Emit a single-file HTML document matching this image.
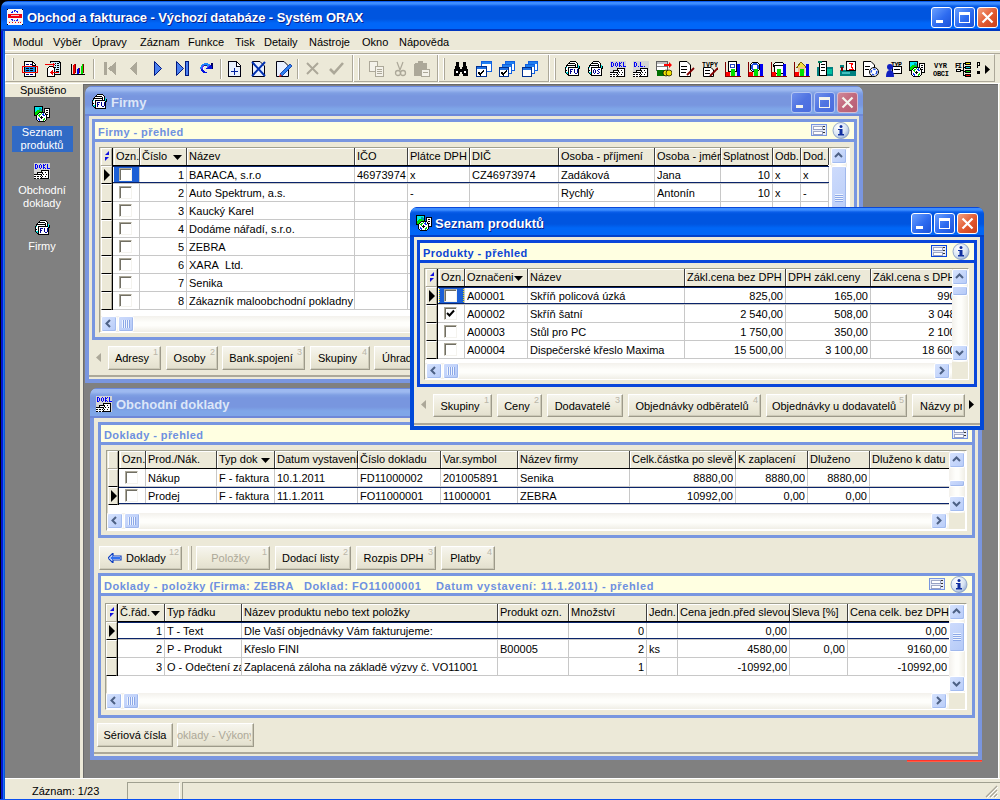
<!DOCTYPE html><html><head><meta charset="utf-8"><style>
*{margin:0;padding:0;box-sizing:border-box}
html,body{width:1000px;height:800px;overflow:hidden;background:#ECE9D8}
body{position:relative;font-family:"Liberation Sans",sans-serif;font-size:11px;color:#000}
div{position:absolute}
.t{white-space:nowrap;line-height:13px}
</style></head><body><div style="left:0px;top:0px;width:1000px;height:800px;background:#000"></div><div style="left:1px;top:1px;width:999px;height:30px;background:linear-gradient(#0C5CF0 0,#0C5CF0 1px,#3C8CFF 1px,#3C8CFF 3px,#0A5EEA 5px,#0055DF 7px,#0055DF 18px,#0066F8 22px,#0066F8 28px,#0036C0 28px);border-radius:7px 0 0 0;"></div><div style="left:1px;top:31px;width:4px;height:769px;background:linear-gradient(90deg,#0418D0 0,#0418D0 2px,#1870F0 2px,#1870F0 3px,#0858D8 3px)"></div><div style="left:5px;top:31px;width:995px;height:768px;background:#ECE9D8"></div><div style="left:0px;top:799px;width:1000px;height:1px;background:#0A50F0"></div><div class="t" style="left:27px;top:10px;color:#fff;font-weight:bold;font-size:13px;line-height:16px;letter-spacing:-0.08px;text-shadow:1px 1px 0 #0A1E8C">Obchod a fakturace - Výchozí databáze - Systém ORAX</div><svg style="position:absolute;left:7px;top:9px;" width="16" height="16" viewBox="0 0 16 16" shape-rendering="crispEdges"><rect x="0" y="0" width="16" height="16" fill="#F8F8F8"/><rect x="0" y="0" width="1" height="1" fill="#000"/><rect x="15" y="0" width="1" height="1" fill="#000"/><rect x="0" y="15" width="1" height="1" fill="#000"/><rect x="15" y="15" width="1" height="1" fill="#000"/><rect x="1" y="5" width="14" height="4" fill="#F00010"/><rect x="4" y="6" width="8" height="1" fill="#F8C8C8"/><path d="M4 4 Q8 0 12 4 M4 10 Q8 14 12 10" stroke="#1020F0" stroke-width="1.2" fill="none" stroke-dasharray="2 1"/><rect x="1" y="12" width="14" height="1" fill="#E8E8E8"/><rect x="2" y="13" width="1" height="1" fill="#F00"/><rect x="5" y="13" width="1" height="1" fill="#F00"/><rect x="8" y="13" width="1" height="1" fill="#F00"/><rect x="11" y="13" width="1" height="1" fill="#F00"/><rect x="13" y="13" width="1" height="1" fill="#F00"/></svg><div style="left:977px;top:7px;width:21px;height:21px;background:linear-gradient(135deg,#F4A080,#E2582E 55%,#C8401C);border:1px solid #fff;border-radius:3px"><svg style="position:absolute;left:0;top:0" width="19" height="19"><path d="M4.5 4.5 L14.5 14.5 M14.5 4.5 L4.5 14.5" stroke="#fff" stroke-width="2.2"/></svg></div><div style="left:954px;top:7px;width:21px;height:21px;background:linear-gradient(135deg,#6AA0FF,#2D6BF0 55%,#1C52D8);border:1px solid #fff;border-radius:3px"><div style="left:4px;top:4px;width:11px;height:11px;border:1px solid #fff;border-top-width:3px"></div></div><div style="left:931px;top:7px;width:21px;height:21px;background:linear-gradient(135deg,#6AA0FF,#2D6BF0 55%,#1C52D8);border:1px solid #fff;border-radius:3px"><div style="left:4px;top:12px;width:7px;height:3px;background:#fff"></div></div><div class="t" style="left:13px;top:36px;">Modul</div><div class="t" style="left:53px;top:36px;">Výběr</div><div class="t" style="left:92px;top:36px;">Úpravy</div><div class="t" style="left:140px;top:36px;">Záznam</div><div class="t" style="left:188px;top:36px;">Funkce</div><div class="t" style="left:235px;top:36px;">Tisk</div><div class="t" style="left:264px;top:36px;">Detaily</div><div class="t" style="left:309px;top:36px;">Nástroje</div><div class="t" style="left:362px;top:36px;">Okno</div><div class="t" style="left:399px;top:36px;">Nápověda</div><div style="left:5px;top:50px;width:995px;height:1px;background:#FFFFFF"></div><div style="left:5px;top:53px;width:995px;height:1px;background:#ACA899"></div><div style="left:5px;top:54px;width:990px;height:28px;background:#ECE9D8;border-top:1px solid #fff;border-left:1px solid #fff;border-bottom:1px solid #ACA899;border-right:1px solid #ACA899"></div><div style="left:5px;top:83px;width:995px;height:1px;background:#fff"></div><div class="t" style="left:20px;top:84px;">Spuštěno</div><div style="left:5px;top:97px;width:75px;height:681px;background:#808080"></div><div style="left:83px;top:84px;width:915px;height:694px;background:#808080;border-left:1px solid #6A6A6A;border-top:1px solid #6A6A6A;"></div><div style="left:998px;top:84px;width:2px;height:694px;background:#ECE9D8;box-shadow:inset 1px 0 0 #fff"></div><div style="left:5px;top:778px;width:995px;height:1px;background:#fff"></div><div class="t" style="left:32px;top:785px;">Záznam: 1/23</div><div style="left:127px;top:782px;width:53px;height:17px;border-left:1px solid #A0A090;border-top:1px solid #A0A090;border-right:1px solid #fff"></div><div style="left:182px;top:782px;width:818px;height:17px;border-left:1px solid #A0A090;border-top:1px solid #A0A090"></div><div style="left:85px;top:86px;width:778px;height:297px;overflow:hidden;border-radius:7px 7px 0 0"><div style="left:0px;top:0px;width:778px;height:297px;background:#7A96DF;border-radius:7px 7px 0 0;"></div><div style="left:0px;top:0px;width:778px;height:30px;background:linear-gradient(#6A88DE 0,#6A88DE 1px,#9DB9F0 1px,#9DB9F0 4px,#7F9FE3 7px,#7896DF 10px,#7896DF 19px,#7FA6E8 23px,#7FA6E8 28px,#6E88D8 28px);border-radius:7px 7px 0 0;"></div><div style="left:4px;top:30px;width:770px;height:263px;background:#ECE9D8"></div><div class="t" style="left:26px;top:9px;color:#DCE6F8;font-weight:bold;font-size:13px;line-height:16px;">Firmy</div><svg style="position:absolute;left:6px;top:8px;" width="16" height="16" viewBox="0 0 16 16" shape-rendering="crispEdges"><rect x="6" y="0" width="6" height="1" fill="#000"/><rect x="5" y="1" width="1" height="1" fill="#000"/><rect x="6" y="1" width="6" height="1" fill="#fff"/><rect x="12" y="1" width="1" height="1" fill="#000"/><rect x="4" y="2" width="7" height="1" fill="#000"/><rect x="11" y="2" width="2" height="1" fill="#fff"/><rect x="13" y="2" width="1" height="1" fill="#000"/><rect x="3" y="3" width="1" height="1" fill="#000"/><rect x="4" y="3" width="7" height="1" fill="#fff"/><rect x="11" y="3" width="1" height="1" fill="#000"/><rect x="12" y="3" width="1" height="1" fill="#fff"/><rect x="13" y="3" width="1" height="1" fill="#000"/><rect x="2" y="4" width="10" height="1" fill="#000"/><rect x="12" y="4" width="1" height="1" fill="#fff"/><rect x="13" y="4" width="1" height="1" fill="#000"/><rect x="14" y="4" width="1" height="1" fill="#00E8E8"/><rect x="2" y="5" width="1" height="1" fill="#000"/><rect x="3" y="5" width="8" height="1" fill="#fff"/><rect x="11" y="5" width="1" height="1" fill="#000"/><rect x="12" y="5" width="1" height="1" fill="#fff"/><rect x="13" y="5" width="1" height="1" fill="#000"/><rect x="14" y="5" width="1" height="1" fill="#00E8E8"/><rect x="15" y="5" width="1" height="1" fill="#000"/><rect x="1" y="6" width="1" height="1" fill="#000"/><rect x="2" y="6" width="1" height="1" fill="#00E8E8"/><rect x="3" y="6" width="1" height="1" fill="#fff"/><rect x="4" y="6" width="10" height="1" fill="#000"/><rect x="14" y="6" width="1" height="1" fill="#00E8E8"/><rect x="15" y="6" width="1" height="1" fill="#000"/><rect x="1" y="7" width="1" height="1" fill="#000"/><rect x="2" y="7" width="2" height="1" fill="#fff"/><rect x="4" y="7" width="1" height="1" fill="#000"/><rect x="5" y="7" width="9" height="1" fill="#fff"/><rect x="14" y="7" width="2" height="1" fill="#000"/><rect x="1" y="8" width="1" height="1" fill="#000"/><rect x="2" y="8" width="2" height="1" fill="#fff"/><rect x="4" y="8" width="1" height="1" fill="#000"/><rect x="5" y="8" width="1" height="1" fill="#fff"/><rect x="6" y="8" width="3" height="1" fill="#000090"/><rect x="9" y="8" width="1" height="1" fill="#fff"/><rect x="10" y="8" width="1" height="1" fill="#000090"/><rect x="11" y="8" width="2" height="1" fill="#fff"/><rect x="13" y="8" width="1" height="1" fill="#000090"/><rect x="14" y="8" width="1" height="1" fill="#000"/><rect x="1" y="9" width="2" height="1" fill="#000"/><rect x="3" y="9" width="1" height="1" fill="#fff"/><rect x="4" y="9" width="1" height="1" fill="#000"/><rect x="5" y="9" width="1" height="1" fill="#fff"/><rect x="6" y="9" width="1" height="1" fill="#000090"/><rect x="7" y="9" width="3" height="1" fill="#fff"/><rect x="10" y="9" width="1" height="1" fill="#000090"/><rect x="11" y="9" width="2" height="1" fill="#fff"/><rect x="13" y="9" width="1" height="1" fill="#000090"/><rect x="14" y="9" width="1" height="1" fill="#000"/><rect x="1" y="10" width="1" height="1" fill="#000"/><rect x="2" y="10" width="2" height="1" fill="#fff"/><rect x="4" y="10" width="1" height="1" fill="#000"/><rect x="5" y="10" width="1" height="1" fill="#fff"/><rect x="6" y="10" width="2" height="1" fill="#000090"/><rect x="8" y="10" width="2" height="1" fill="#fff"/><rect x="10" y="10" width="1" height="1" fill="#000090"/><rect x="11" y="10" width="2" height="1" fill="#fff"/><rect x="13" y="10" width="1" height="1" fill="#000090"/><rect x="14" y="10" width="1" height="1" fill="#000"/><rect x="1" y="11" width="1" height="1" fill="#000"/><rect x="2" y="11" width="2" height="1" fill="#00E8E8"/><rect x="4" y="11" width="1" height="1" fill="#000"/><rect x="5" y="11" width="1" height="1" fill="#fff"/><rect x="6" y="11" width="1" height="1" fill="#000090"/><rect x="7" y="11" width="3" height="1" fill="#fff"/><rect x="10" y="11" width="1" height="1" fill="#000090"/><rect x="11" y="11" width="2" height="1" fill="#fff"/><rect x="13" y="11" width="1" height="1" fill="#000090"/><rect x="14" y="11" width="1" height="1" fill="#000"/><rect x="2" y="12" width="1" height="1" fill="#000"/><rect x="3" y="12" width="1" height="1" fill="#00E8E8"/><rect x="4" y="12" width="1" height="1" fill="#000"/><rect x="5" y="12" width="1" height="1" fill="#fff"/><rect x="6" y="12" width="1" height="1" fill="#000090"/><rect x="7" y="12" width="4" height="1" fill="#fff"/><rect x="11" y="12" width="2" height="1" fill="#000090"/><rect x="13" y="12" width="1" height="1" fill="#fff"/><rect x="14" y="12" width="1" height="1" fill="#000"/><rect x="3" y="13" width="2" height="1" fill="#000"/><rect x="5" y="13" width="9" height="1" fill="#fff"/><rect x="14" y="13" width="1" height="1" fill="#000"/><rect x="4" y="14" width="11" height="1" fill="#000"/></svg><div style="left:706px;top:6px;width:21px;height:21px;background:linear-gradient(135deg,#7090EC,#5074E2 50%,#4A6CDE);border:1px solid #B4C6F2;border-radius:3px"><div style="left:4px;top:12px;width:7px;height:3px;background:#F4F4EC"></div></div><div style="left:729px;top:6px;width:21px;height:21px;background:linear-gradient(135deg,#7090EC,#5074E2 50%,#4A6CDE);border:1px solid #B4C6F2;border-radius:3px"><div style="left:4px;top:4px;width:11px;height:11px;border:1px solid #F4F4EC;border-top-width:3px"></div></div><div style="left:752px;top:6px;width:21px;height:21px;background:linear-gradient(135deg,#D08898,#C2687C 50%,#B45E74);border:1px solid #D8BCD0;border-radius:3px"><svg style="position:absolute;left:0;top:0" width="19" height="19"><path d="M4.5 4.5 L14.5 14.5 M14.5 4.5 L4.5 14.5" stroke="#F4F4EC" stroke-width="2.2"/></svg></div><div style="left:7px;top:33px;width:765px;height:221px;border:3px solid #7896E0;background:#ECE9D8"></div><div style="left:10px;top:36px;width:759px;height:17px;background:#FFFFE1"></div><div style="left:10px;top:53px;width:759px;height:3px;background:#7896E0"></div><div class="t" style="left:13px;top:39px;color:#6E90E0;font-weight:bold;font-size:11px;letter-spacing:0.42px;line-height:14px;">Firmy - přehled</div><svg style="position:absolute;left:726px;top:38px;" width="16" height="12" viewBox="0 0 16 12" shape-rendering="crispEdges"><rect x="0.5" y="0.5" width="15" height="11" fill="#E8ECF8" stroke="#7896E0"/><rect x="2" y="2" width="9" height="3" fill="#fff" stroke="#6070A0" stroke-width="0.6"/><rect x="2" y="7" width="9" height="3" fill="#fff" stroke="#6070A0" stroke-width="0.6"/><rect x="12" y="2" width="2" height="1" fill="#333"/><rect x="12" y="5" width="2" height="1" fill="#333"/><rect x="12" y="8" width="2" height="1" fill="#333"/></svg><svg style="position:absolute;left:747px;top:36px;shape-rendering:auto" width="18" height="17" viewBox="0 0 18 17" shape-rendering="crispEdges"><defs><radialGradient id="ig" cx="0.35" cy="0.3" r="0.8"><stop offset="0" stop-color="#fff"/><stop offset="0.6" stop-color="#D8E4F4"/><stop offset="1" stop-color="#90A8D0"/></radialGradient></defs><circle cx="9" cy="8.5" r="8" fill="url(#ig)" stroke="#8098C0" stroke-width="0.8"/><rect x="7.5" y="7" width="3" height="6" fill="#1030A0"/><rect x="6" y="12" width="6" height="1.5" fill="#1030A0"/><rect x="6" y="7" width="2" height="1" fill="#1030A0"/><circle cx="9" cy="4.5" r="1.5" fill="#1030A0"/></svg><div style="left:14px;top:61px;width:751px;height:186px;background:#fff;border:1px solid;border-color:#A0A090 #FFFFFF #FFFFFF #A0A090;"></div><div style="left:15px;top:62px;width:749px;height:184px;overflow:hidden"><div style="left:0px;top:0px;width:749px;height:184px;background:#fff;border-left:1px solid #D8D4C4;"></div><div style="left:0px;top:0px;width:728px;height:17px;background:#ECE9D8"></div><div style="left:1px;top:0px;width:11px;height:17px;background:#ECE9D8;border-left:1px solid #fff;border-top:1px solid #fff;border-right:1px solid #ACA899"></div><svg style="position:absolute;left:4px;top:3px" width="6" height="11"><path d="M5 0 L1 4 L5 4 Z M1 6 L5 6 L1 10 Z" fill="#1010E0"/></svg><div style="left:12px;top:0px;width:1px;height:17px;background:#000"></div><div style="left:14px;top:0px;width:26px;height:17px;background:#ECE9D8;border-left:1px solid #fff;border-top:1px solid #fff;border-right:1px solid #ACA899"></div><div style="left:39px;top:0px;width:1px;height:17px;background:#404040"></div><div class="t" style="left:16px;top:2px;width:24px;overflow:hidden">Ozn.</div><div style="left:40px;top:0px;width:47px;height:17px;background:#ECE9D8;border-left:1px solid #fff;border-top:1px solid #fff;border-right:1px solid #ACA899"></div><div style="left:86px;top:0px;width:1px;height:17px;background:#404040"></div><div class="t" style="left:42px;top:2px;width:45px;overflow:hidden">Číslo</div><svg style="position:absolute;left:73px;top:7px" width="9" height="5"><path d="M0 0 H9 L4.5 5 Z" fill="#000"/></svg><div style="left:87px;top:0px;width:168px;height:17px;background:#ECE9D8;border-left:1px solid #fff;border-top:1px solid #fff;border-right:1px solid #ACA899"></div><div style="left:254px;top:0px;width:1px;height:17px;background:#404040"></div><div class="t" style="left:89px;top:2px;width:166px;overflow:hidden">Název</div><div style="left:255px;top:0px;width:53px;height:17px;background:#ECE9D8;border-left:1px solid #fff;border-top:1px solid #fff;border-right:1px solid #ACA899"></div><div style="left:307px;top:0px;width:1px;height:17px;background:#404040"></div><div class="t" style="left:257px;top:2px;width:51px;overflow:hidden">IČO</div><div style="left:308px;top:0px;width:62px;height:17px;background:#ECE9D8;border-left:1px solid #fff;border-top:1px solid #fff;border-right:1px solid #ACA899"></div><div style="left:369px;top:0px;width:1px;height:17px;background:#404040"></div><div class="t" style="left:310px;top:2px;width:60px;overflow:hidden">Plátce DPH</div><div style="left:370px;top:0px;width:89px;height:17px;background:#ECE9D8;border-left:1px solid #fff;border-top:1px solid #fff;border-right:1px solid #ACA899"></div><div style="left:458px;top:0px;width:1px;height:17px;background:#404040"></div><div class="t" style="left:372px;top:2px;width:87px;overflow:hidden">DIČ</div><div style="left:459px;top:0px;width:96px;height:17px;background:#ECE9D8;border-left:1px solid #fff;border-top:1px solid #fff;border-right:1px solid #ACA899"></div><div style="left:554px;top:0px;width:1px;height:17px;background:#404040"></div><div class="t" style="left:461px;top:2px;width:94px;overflow:hidden">Osoba - příjmení</div><div style="left:555px;top:0px;width:66px;height:17px;background:#ECE9D8;border-left:1px solid #fff;border-top:1px solid #fff;border-right:1px solid #ACA899"></div><div style="left:620px;top:0px;width:1px;height:17px;background:#404040"></div><div class="t" style="left:557px;top:2px;width:64px;overflow:hidden">Osoba - jméno</div><div style="left:621px;top:0px;width:52px;height:17px;background:#ECE9D8;border-left:1px solid #fff;border-top:1px solid #fff;border-right:1px solid #ACA899"></div><div style="left:672px;top:0px;width:1px;height:17px;background:#404040"></div><div class="t" style="left:623px;top:2px;width:50px;overflow:hidden">Splatnost</div><div style="left:673px;top:0px;width:28px;height:17px;background:#ECE9D8;border-left:1px solid #fff;border-top:1px solid #fff;border-right:1px solid #ACA899"></div><div style="left:700px;top:0px;width:1px;height:17px;background:#404040"></div><div class="t" style="left:675px;top:2px;width:26px;overflow:hidden">Odb.</div><div style="left:701px;top:0px;width:28px;height:17px;background:#ECE9D8;border-left:1px solid #fff;border-top:1px solid #fff;border-right:1px solid #ACA899"></div><div style="left:728px;top:0px;width:1px;height:17px;background:#404040"></div><div class="t" style="left:703px;top:2px;width:26px;overflow:hidden">Dod.</div><div style="left:12px;top:17px;width:716px;height:1px;background:#000"></div><div style="left:1px;top:17px;width:11px;height:1px;background:#ACA899"></div><div style="left:1px;top:18px;width:11px;height:18px;background:#ECE9D8;border-left:1px solid #fff;border-top:1px solid #fff;border-right:1px solid #ACA899;border-bottom:1px solid #000"></div><svg style="position:absolute;left:4px;top:21px" width="7" height="12"><path d="M0 0 L6 6 L0 12 Z" fill="#000"/></svg><div style="left:39px;top:18px;width:1px;height:18px;background:#C8C8C8"></div><div style="left:14px;top:18px;width:25px;height:17px;background:#1C5FD6"></div><div style="left:19px;top:20px;width:13px;height:13px;background:#fff;border:1px solid;border-color:#ACA899 #F4F3EE #F4F3EE #ACA899;box-shadow:inset 1px 1px 0 #716F64"></div><div style="left:86px;top:18px;width:1px;height:18px;background:#C8C8C8"></div><div class="t" style="left:40px;top:21px;width:44px;text-align:right;overflow:hidden">1</div><div style="left:254px;top:18px;width:1px;height:18px;background:#C8C8C8"></div><div class="t" style="left:89px;top:21px;width:165px;overflow:hidden">BARACA, s.r.o</div><div style="left:307px;top:18px;width:1px;height:18px;background:#C8C8C8"></div><div class="t" style="left:257px;top:21px;width:50px;overflow:hidden">46973974</div><div style="left:369px;top:18px;width:1px;height:18px;background:#C8C8C8"></div><div class="t" style="left:310px;top:21px;width:59px;overflow:hidden">x</div><div style="left:458px;top:18px;width:1px;height:18px;background:#C8C8C8"></div><div class="t" style="left:372px;top:21px;width:86px;overflow:hidden">CZ46973974</div><div style="left:554px;top:18px;width:1px;height:18px;background:#C8C8C8"></div><div class="t" style="left:461px;top:21px;width:93px;overflow:hidden">Zadáková</div><div style="left:620px;top:18px;width:1px;height:18px;background:#C8C8C8"></div><div class="t" style="left:557px;top:21px;width:63px;overflow:hidden">Jana</div><div style="left:672px;top:18px;width:1px;height:18px;background:#C8C8C8"></div><div class="t" style="left:621px;top:21px;width:49px;text-align:right;overflow:hidden">10</div><div style="left:700px;top:18px;width:1px;height:18px;background:#C8C8C8"></div><div class="t" style="left:675px;top:21px;width:25px;overflow:hidden">x</div><div style="left:728px;top:18px;width:1px;height:18px;background:#C8C8C8"></div><div class="t" style="left:703px;top:21px;width:25px;overflow:hidden">x</div><div style="left:12px;top:18px;width:716px;height:0px;"></div><div style="left:13px;top:35px;width:716px;height:1px;background:#C8C8C8"></div><div style="left:12px;top:18px;width:1px;height:18px;background:#000"></div><div style="left:1px;top:36px;width:11px;height:18px;background:#ECE9D8;border-left:1px solid #fff;border-top:1px solid #fff;border-right:1px solid #ACA899;border-bottom:1px solid #000"></div><div style="left:39px;top:36px;width:1px;height:18px;background:#C8C8C8"></div><div style="left:19px;top:38px;width:13px;height:13px;background:#fff;border:1px solid;border-color:#ACA899 #F4F3EE #F4F3EE #ACA899;box-shadow:inset 1px 1px 0 #716F64"></div><div style="left:86px;top:36px;width:1px;height:18px;background:#C8C8C8"></div><div class="t" style="left:40px;top:39px;width:44px;text-align:right;overflow:hidden">2</div><div style="left:254px;top:36px;width:1px;height:18px;background:#C8C8C8"></div><div class="t" style="left:89px;top:39px;width:165px;overflow:hidden">Auto Spektrum, a.s.</div><div style="left:307px;top:36px;width:1px;height:18px;background:#C8C8C8"></div><div style="left:369px;top:36px;width:1px;height:18px;background:#C8C8C8"></div><div class="t" style="left:310px;top:39px;width:59px;overflow:hidden">-</div><div style="left:458px;top:36px;width:1px;height:18px;background:#C8C8C8"></div><div style="left:554px;top:36px;width:1px;height:18px;background:#C8C8C8"></div><div class="t" style="left:461px;top:39px;width:93px;overflow:hidden">Rychlý</div><div style="left:620px;top:36px;width:1px;height:18px;background:#C8C8C8"></div><div class="t" style="left:557px;top:39px;width:63px;overflow:hidden">Antonín</div><div style="left:672px;top:36px;width:1px;height:18px;background:#C8C8C8"></div><div class="t" style="left:621px;top:39px;width:49px;text-align:right;overflow:hidden">10</div><div style="left:700px;top:36px;width:1px;height:18px;background:#C8C8C8"></div><div class="t" style="left:675px;top:39px;width:25px;overflow:hidden">x</div><div style="left:728px;top:36px;width:1px;height:18px;background:#C8C8C8"></div><div class="t" style="left:703px;top:39px;width:25px;overflow:hidden">-</div><div style="left:12px;top:36px;width:716px;height:0px;"></div><div style="left:13px;top:53px;width:716px;height:1px;background:#C8C8C8"></div><div style="left:12px;top:36px;width:1px;height:18px;background:#000"></div><div style="left:1px;top:54px;width:11px;height:18px;background:#ECE9D8;border-left:1px solid #fff;border-top:1px solid #fff;border-right:1px solid #ACA899;border-bottom:1px solid #000"></div><div style="left:39px;top:54px;width:1px;height:18px;background:#C8C8C8"></div><div style="left:19px;top:56px;width:13px;height:13px;background:#fff;border:1px solid;border-color:#ACA899 #F4F3EE #F4F3EE #ACA899;box-shadow:inset 1px 1px 0 #716F64"></div><div style="left:86px;top:54px;width:1px;height:18px;background:#C8C8C8"></div><div class="t" style="left:40px;top:57px;width:44px;text-align:right;overflow:hidden">3</div><div style="left:254px;top:54px;width:1px;height:18px;background:#C8C8C8"></div><div class="t" style="left:89px;top:57px;width:165px;overflow:hidden">Kaucký Karel</div><div style="left:307px;top:54px;width:1px;height:18px;background:#C8C8C8"></div><div style="left:369px;top:54px;width:1px;height:18px;background:#C8C8C8"></div><div style="left:458px;top:54px;width:1px;height:18px;background:#C8C8C8"></div><div style="left:554px;top:54px;width:1px;height:18px;background:#C8C8C8"></div><div class="t" style="left:461px;top:57px;width:93px;overflow:hidden">Kaucký</div><div style="left:620px;top:54px;width:1px;height:18px;background:#C8C8C8"></div><div class="t" style="left:557px;top:57px;width:63px;overflow:hidden">Karel</div><div style="left:672px;top:54px;width:1px;height:18px;background:#C8C8C8"></div><div class="t" style="left:621px;top:57px;width:49px;text-align:right;overflow:hidden">10</div><div style="left:700px;top:54px;width:1px;height:18px;background:#C8C8C8"></div><div class="t" style="left:675px;top:57px;width:25px;overflow:hidden">x</div><div style="left:728px;top:54px;width:1px;height:18px;background:#C8C8C8"></div><div class="t" style="left:703px;top:57px;width:25px;overflow:hidden">x</div><div style="left:12px;top:54px;width:716px;height:0px;"></div><div style="left:13px;top:71px;width:716px;height:1px;background:#C8C8C8"></div><div style="left:12px;top:54px;width:1px;height:18px;background:#000"></div><div style="left:1px;top:72px;width:11px;height:18px;background:#ECE9D8;border-left:1px solid #fff;border-top:1px solid #fff;border-right:1px solid #ACA899;border-bottom:1px solid #000"></div><div style="left:39px;top:72px;width:1px;height:18px;background:#C8C8C8"></div><div style="left:19px;top:74px;width:13px;height:13px;background:#fff;border:1px solid;border-color:#ACA899 #F4F3EE #F4F3EE #ACA899;box-shadow:inset 1px 1px 0 #716F64"></div><div style="left:86px;top:72px;width:1px;height:18px;background:#C8C8C8"></div><div class="t" style="left:40px;top:75px;width:44px;text-align:right;overflow:hidden">4</div><div style="left:254px;top:72px;width:1px;height:18px;background:#C8C8C8"></div><div class="t" style="left:89px;top:75px;width:165px;overflow:hidden">Dodáme nářadí, s.r.o.</div><div style="left:307px;top:72px;width:1px;height:18px;background:#C8C8C8"></div><div style="left:369px;top:72px;width:1px;height:18px;background:#C8C8C8"></div><div style="left:458px;top:72px;width:1px;height:18px;background:#C8C8C8"></div><div style="left:554px;top:72px;width:1px;height:18px;background:#C8C8C8"></div><div style="left:620px;top:72px;width:1px;height:18px;background:#C8C8C8"></div><div style="left:672px;top:72px;width:1px;height:18px;background:#C8C8C8"></div><div class="t" style="left:621px;top:75px;width:49px;text-align:right;overflow:hidden">10</div><div style="left:700px;top:72px;width:1px;height:18px;background:#C8C8C8"></div><div style="left:728px;top:72px;width:1px;height:18px;background:#C8C8C8"></div><div style="left:12px;top:72px;width:716px;height:0px;"></div><div style="left:13px;top:89px;width:716px;height:1px;background:#C8C8C8"></div><div style="left:12px;top:72px;width:1px;height:18px;background:#000"></div><div style="left:1px;top:90px;width:11px;height:18px;background:#ECE9D8;border-left:1px solid #fff;border-top:1px solid #fff;border-right:1px solid #ACA899;border-bottom:1px solid #000"></div><div style="left:39px;top:90px;width:1px;height:18px;background:#C8C8C8"></div><div style="left:19px;top:92px;width:13px;height:13px;background:#fff;border:1px solid;border-color:#ACA899 #F4F3EE #F4F3EE #ACA899;box-shadow:inset 1px 1px 0 #716F64"></div><div style="left:86px;top:90px;width:1px;height:18px;background:#C8C8C8"></div><div class="t" style="left:40px;top:93px;width:44px;text-align:right;overflow:hidden">5</div><div style="left:254px;top:90px;width:1px;height:18px;background:#C8C8C8"></div><div class="t" style="left:89px;top:93px;width:165px;overflow:hidden">ZEBRA</div><div style="left:307px;top:90px;width:1px;height:18px;background:#C8C8C8"></div><div style="left:369px;top:90px;width:1px;height:18px;background:#C8C8C8"></div><div style="left:458px;top:90px;width:1px;height:18px;background:#C8C8C8"></div><div style="left:554px;top:90px;width:1px;height:18px;background:#C8C8C8"></div><div style="left:620px;top:90px;width:1px;height:18px;background:#C8C8C8"></div><div style="left:672px;top:90px;width:1px;height:18px;background:#C8C8C8"></div><div class="t" style="left:621px;top:93px;width:49px;text-align:right;overflow:hidden">10</div><div style="left:700px;top:90px;width:1px;height:18px;background:#C8C8C8"></div><div style="left:728px;top:90px;width:1px;height:18px;background:#C8C8C8"></div><div style="left:12px;top:90px;width:716px;height:0px;"></div><div style="left:13px;top:107px;width:716px;height:1px;background:#C8C8C8"></div><div style="left:12px;top:90px;width:1px;height:18px;background:#000"></div><div style="left:1px;top:108px;width:11px;height:18px;background:#ECE9D8;border-left:1px solid #fff;border-top:1px solid #fff;border-right:1px solid #ACA899;border-bottom:1px solid #000"></div><div style="left:39px;top:108px;width:1px;height:18px;background:#C8C8C8"></div><div style="left:19px;top:110px;width:13px;height:13px;background:#fff;border:1px solid;border-color:#ACA899 #F4F3EE #F4F3EE #ACA899;box-shadow:inset 1px 1px 0 #716F64"></div><div style="left:86px;top:108px;width:1px;height:18px;background:#C8C8C8"></div><div class="t" style="left:40px;top:111px;width:44px;text-align:right;overflow:hidden">6</div><div style="left:254px;top:108px;width:1px;height:18px;background:#C8C8C8"></div><div class="t" style="left:89px;top:111px;width:165px;overflow:hidden">XARA&nbsp; Ltd.</div><div style="left:307px;top:108px;width:1px;height:18px;background:#C8C8C8"></div><div style="left:369px;top:108px;width:1px;height:18px;background:#C8C8C8"></div><div style="left:458px;top:108px;width:1px;height:18px;background:#C8C8C8"></div><div style="left:554px;top:108px;width:1px;height:18px;background:#C8C8C8"></div><div style="left:620px;top:108px;width:1px;height:18px;background:#C8C8C8"></div><div style="left:672px;top:108px;width:1px;height:18px;background:#C8C8C8"></div><div class="t" style="left:621px;top:111px;width:49px;text-align:right;overflow:hidden">10</div><div style="left:700px;top:108px;width:1px;height:18px;background:#C8C8C8"></div><div style="left:728px;top:108px;width:1px;height:18px;background:#C8C8C8"></div><div style="left:12px;top:108px;width:716px;height:0px;"></div><div style="left:13px;top:125px;width:716px;height:1px;background:#C8C8C8"></div><div style="left:12px;top:108px;width:1px;height:18px;background:#000"></div><div style="left:1px;top:126px;width:11px;height:18px;background:#ECE9D8;border-left:1px solid #fff;border-top:1px solid #fff;border-right:1px solid #ACA899;border-bottom:1px solid #000"></div><div style="left:39px;top:126px;width:1px;height:18px;background:#C8C8C8"></div><div style="left:19px;top:128px;width:13px;height:13px;background:#fff;border:1px solid;border-color:#ACA899 #F4F3EE #F4F3EE #ACA899;box-shadow:inset 1px 1px 0 #716F64"></div><div style="left:86px;top:126px;width:1px;height:18px;background:#C8C8C8"></div><div class="t" style="left:40px;top:129px;width:44px;text-align:right;overflow:hidden">7</div><div style="left:254px;top:126px;width:1px;height:18px;background:#C8C8C8"></div><div class="t" style="left:89px;top:129px;width:165px;overflow:hidden">Senika</div><div style="left:307px;top:126px;width:1px;height:18px;background:#C8C8C8"></div><div style="left:369px;top:126px;width:1px;height:18px;background:#C8C8C8"></div><div style="left:458px;top:126px;width:1px;height:18px;background:#C8C8C8"></div><div style="left:554px;top:126px;width:1px;height:18px;background:#C8C8C8"></div><div style="left:620px;top:126px;width:1px;height:18px;background:#C8C8C8"></div><div style="left:672px;top:126px;width:1px;height:18px;background:#C8C8C8"></div><div class="t" style="left:621px;top:129px;width:49px;text-align:right;overflow:hidden">10</div><div style="left:700px;top:126px;width:1px;height:18px;background:#C8C8C8"></div><div style="left:728px;top:126px;width:1px;height:18px;background:#C8C8C8"></div><div style="left:12px;top:126px;width:716px;height:0px;"></div><div style="left:13px;top:143px;width:716px;height:1px;background:#C8C8C8"></div><div style="left:12px;top:126px;width:1px;height:18px;background:#000"></div><div style="left:1px;top:144px;width:11px;height:18px;background:#ECE9D8;border-left:1px solid #fff;border-top:1px solid #fff;border-right:1px solid #ACA899;border-bottom:1px solid #000"></div><div style="left:39px;top:144px;width:1px;height:18px;background:#C8C8C8"></div><div style="left:19px;top:146px;width:13px;height:13px;background:#fff;border:1px solid;border-color:#ACA899 #F4F3EE #F4F3EE #ACA899;box-shadow:inset 1px 1px 0 #716F64"></div><div style="left:86px;top:144px;width:1px;height:18px;background:#C8C8C8"></div><div class="t" style="left:40px;top:147px;width:44px;text-align:right;overflow:hidden">8</div><div style="left:254px;top:144px;width:1px;height:18px;background:#C8C8C8"></div><div class="t" style="left:89px;top:147px;width:165px;overflow:hidden">Zákazník maloobchodní pokladny</div><div style="left:307px;top:144px;width:1px;height:18px;background:#C8C8C8"></div><div style="left:369px;top:144px;width:1px;height:18px;background:#C8C8C8"></div><div style="left:458px;top:144px;width:1px;height:18px;background:#C8C8C8"></div><div style="left:554px;top:144px;width:1px;height:18px;background:#C8C8C8"></div><div style="left:620px;top:144px;width:1px;height:18px;background:#C8C8C8"></div><div style="left:672px;top:144px;width:1px;height:18px;background:#C8C8C8"></div><div class="t" style="left:621px;top:147px;width:49px;text-align:right;overflow:hidden">10</div><div style="left:700px;top:144px;width:1px;height:18px;background:#C8C8C8"></div><div style="left:728px;top:144px;width:1px;height:18px;background:#C8C8C8"></div><div style="left:12px;top:144px;width:716px;height:0px;"></div><div style="left:13px;top:161px;width:716px;height:1px;background:#C8C8C8"></div><div style="left:12px;top:144px;width:1px;height:18px;background:#000"></div><div style="left:13px;top:34px;width:716px;height:1px;background:#0A246A"></div><div style="left:13px;top:18px;width:716px;height:1px;background:#0A246A"></div></div><div style="left:744px;top:62px;width:2px;height:17px;background:#ECE9D8;border-left:1px solid #fff"></div><div style="left:746px;top:62px;width:16px;height:168px;background:linear-gradient(90deg,#F3F1EC,#FEFEFB 40%,#FEFEFB 60%,#F0EEE6)"></div><div style="left:746px;top:62px;width:16px;height:16px;background:linear-gradient(135deg,#D6E3FE,#B7CBF8);border:1px solid #FFFFFF;border-radius:2px;box-shadow:inset -1px -1px 0 #A3BCF0"></div><svg style="position:absolute;left:746px;top:62px" width="16" height="16"><path d="M4 9 L7.5 5.5 L11 9" stroke="#4D6185" stroke-width="2" fill="none"/></svg><div style="left:746px;top:80px;width:16px;height:64px;background:linear-gradient(135deg,#CDDBFC,#B4C9F7);border:1px solid #FFFFFF;border-radius:2px;box-shadow:inset -1px -1px 0 #A0B8EC"></div><div style="left:750px;top:108px;width:8px;height:1px;background:#EEF4FE;box-shadow:0 1px 0 #8CA8E8"></div><div style="left:750px;top:110px;width:8px;height:1px;background:#EEF4FE;box-shadow:0 1px 0 #8CA8E8"></div><div style="left:750px;top:112px;width:8px;height:1px;background:#EEF4FE;box-shadow:0 1px 0 #8CA8E8"></div><div style="left:750px;top:114px;width:8px;height:1px;background:#EEF4FE;box-shadow:0 1px 0 #8CA8E8"></div><div style="left:16px;top:230px;width:730px;height:16px;background:linear-gradient(#F3F1EC,#FEFEFB 40%,#FEFEFB 60%,#F0EEE6)"></div><div style="left:16px;top:230px;width:16px;height:16px;background:linear-gradient(135deg,#D6E3FE,#B7CBF8);border:1px solid #FFFFFF;border-radius:2px;box-shadow:inset -1px -1px 0 #A3BCF0"></div><svg style="position:absolute;left:16px;top:230px" width="16" height="16"><path d="M9 4 L5.5 7.5 L9 11" stroke="#4D6185" stroke-width="2" fill="none"/></svg><div style="left:33px;top:230px;width:16px;height:16px;background:linear-gradient(135deg,#CDDBFC,#B4C9F7);border:1px solid #FFFFFF;border-radius:2px;box-shadow:inset -1px -1px 0 #A0B8EC"></div><div style="left:37px;top:234px;width:1px;height:8px;background:#EEF4FE;box-shadow:1px 0 0 #8CA8E8"></div><div style="left:39px;top:234px;width:1px;height:8px;background:#EEF4FE;box-shadow:1px 0 0 #8CA8E8"></div><div style="left:41px;top:234px;width:1px;height:8px;background:#EEF4FE;box-shadow:1px 0 0 #8CA8E8"></div><div style="left:43px;top:234px;width:1px;height:8px;background:#EEF4FE;box-shadow:1px 0 0 #8CA8E8"></div><svg style="position:absolute;left:11px;top:267px;shape-rendering:auto" width="5" height="9" viewBox="0 0 5 9" shape-rendering="crispEdges"><path d="M5 0 L0 4.5 L5 9 Z" fill="#ACA899"/></svg><div style="left:23px;top:260px;width:53px;height:24px;background:linear-gradient(#F6F5EE,#ECE9D8 60%,#E2DFCE);border:1px solid;border-color:#FFFFFF #9D9A8A #9D9A8A #FFFFFF;box-shadow:inset -1px -1px 0 #CDCAB8"></div><div class="t" style="left:23px;top:266px;width:48px;text-align:center;color:#000">Adresy</div><div class="t" style="left:68px;top:261px;font-size:9px;line-height:11px;color:#BAB6A8">1</div><div style="left:81px;top:260px;width:52px;height:24px;background:linear-gradient(#F6F5EE,#ECE9D8 60%,#E2DFCE);border:1px solid;border-color:#FFFFFF #9D9A8A #9D9A8A #FFFFFF;box-shadow:inset -1px -1px 0 #CDCAB8"></div><div class="t" style="left:81px;top:266px;width:47px;text-align:center;color:#000">Osoby</div><div class="t" style="left:125px;top:261px;font-size:9px;line-height:11px;color:#BAB6A8">2</div><div style="left:137px;top:260px;width:83px;height:24px;background:linear-gradient(#F6F5EE,#ECE9D8 60%,#E2DFCE);border:1px solid;border-color:#FFFFFF #9D9A8A #9D9A8A #FFFFFF;box-shadow:inset -1px -1px 0 #CDCAB8"></div><div class="t" style="left:137px;top:266px;width:78px;text-align:center;color:#000">Bank.spojení</div><div class="t" style="left:212px;top:261px;font-size:9px;line-height:11px;color:#BAB6A8">3</div><div style="left:225px;top:260px;width:60px;height:24px;background:linear-gradient(#F6F5EE,#ECE9D8 60%,#E2DFCE);border:1px solid;border-color:#FFFFFF #9D9A8A #9D9A8A #FFFFFF;box-shadow:inset -1px -1px 0 #CDCAB8"></div><div class="t" style="left:225px;top:266px;width:55px;text-align:center;color:#000">Skupiny</div><div class="t" style="left:277px;top:261px;font-size:9px;line-height:11px;color:#BAB6A8">4</div><div style="left:289px;top:260px;width:60px;height:24px;background:linear-gradient(#F6F5EE,#ECE9D8 60%,#E2DFCE);border:1px solid;border-color:#FFFFFF #9D9A8A #9D9A8A #FFFFFF;box-shadow:inset -1px -1px 0 #CDCAB8"></div><div class="t" style="left:297px;top:266px;width:49px;overflow:hidden;color:#000">Úhrady</div><div class="t" style="left:341px;top:261px;font-size:9px;line-height:11px;color:#BAB6A8">5</div><div style="left:4px;top:289px;width:770px;height:2px;background:#ACA899"></div></div><div style="left:90px;top:388px;width:892px;height:372px;overflow:hidden;border-radius:7px 7px 0 0"><div style="left:0px;top:0px;width:892px;height:372px;background:#7A96DF;border-radius:7px 7px 0 0;"></div><div style="left:0px;top:0px;width:892px;height:30px;background:linear-gradient(#6A88DE 0,#6A88DE 1px,#9DB9F0 1px,#9DB9F0 4px,#7F9FE3 7px,#7896DF 10px,#7896DF 19px,#7FA6E8 23px,#7FA6E8 28px,#6E88D8 28px);border-radius:7px 7px 0 0;"></div><div style="left:4px;top:30px;width:884px;height:338px;background:#ECE9D8"></div><div class="t" style="left:26px;top:9px;color:#DCE6F8;font-weight:bold;font-size:13px;line-height:16px;">Obchodní doklady</div><svg style="position:absolute;left:6px;top:8px;" width="16" height="16" viewBox="0 0 16 16" shape-rendering="crispEdges"><rect x="0" y="0" width="16" height="1" fill="#D4D4D4"/><rect x="0" y="1" width="1" height="1" fill="#D4D4D4"/><rect x="1" y="1" width="2" height="1" fill="#0000F8"/><rect x="3" y="1" width="3" height="1" fill="#D4D4D4"/><rect x="6" y="1" width="1" height="1" fill="#0000F8"/><rect x="7" y="1" width="2" height="1" fill="#D4D4D4"/><rect x="9" y="1" width="1" height="1" fill="#0000F8"/><rect x="10" y="1" width="1" height="1" fill="#D4D4D4"/><rect x="11" y="1" width="1" height="1" fill="#0000F8"/><rect x="12" y="1" width="1" height="1" fill="#D4D4D4"/><rect x="13" y="1" width="1" height="1" fill="#0000F8"/><rect x="14" y="1" width="2" height="1" fill="#D4D4D4"/><rect x="0" y="2" width="1" height="1" fill="#D4D4D4"/><rect x="1" y="2" width="1" height="1" fill="#0000F8"/><rect x="2" y="2" width="1" height="1" fill="#D4D4D4"/><rect x="3" y="2" width="1" height="1" fill="#0000F8"/><rect x="4" y="2" width="1" height="1" fill="#D4D4D4"/><rect x="5" y="2" width="1" height="1" fill="#0000F8"/><rect x="6" y="2" width="1" height="1" fill="#D4D4D4"/><rect x="7" y="2" width="1" height="1" fill="#0000F8"/><rect x="8" y="2" width="1" height="1" fill="#D4D4D4"/><rect x="9" y="2" width="2" height="1" fill="#0000F8"/><rect x="11" y="2" width="2" height="1" fill="#D4D4D4"/><rect x="13" y="2" width="1" height="1" fill="#0000F8"/><rect x="14" y="2" width="2" height="1" fill="#D4D4D4"/><rect x="0" y="3" width="1" height="1" fill="#D4D4D4"/><rect x="1" y="3" width="1" height="1" fill="#0000F8"/><rect x="2" y="3" width="1" height="1" fill="#D4D4D4"/><rect x="3" y="3" width="1" height="1" fill="#0000F8"/><rect x="4" y="3" width="1" height="1" fill="#D4D4D4"/><rect x="5" y="3" width="1" height="1" fill="#0000F8"/><rect x="6" y="3" width="1" height="1" fill="#D4D4D4"/><rect x="7" y="3" width="1" height="1" fill="#0000F8"/><rect x="8" y="3" width="1" height="1" fill="#D4D4D4"/><rect x="9" y="3" width="1" height="1" fill="#0000F8"/><rect x="10" y="3" width="3" height="1" fill="#D4D4D4"/><rect x="13" y="3" width="1" height="1" fill="#0000F8"/><rect x="14" y="3" width="2" height="1" fill="#D4D4D4"/><rect x="0" y="4" width="1" height="1" fill="#D4D4D4"/><rect x="1" y="4" width="1" height="1" fill="#0000F8"/><rect x="2" y="4" width="1" height="1" fill="#D4D4D4"/><rect x="3" y="4" width="1" height="1" fill="#0000F8"/><rect x="4" y="4" width="1" height="1" fill="#D4D4D4"/><rect x="5" y="4" width="1" height="1" fill="#0000F8"/><rect x="6" y="4" width="1" height="1" fill="#D4D4D4"/><rect x="7" y="4" width="1" height="1" fill="#0000F8"/><rect x="8" y="4" width="1" height="1" fill="#D4D4D4"/><rect x="9" y="4" width="2" height="1" fill="#0000F8"/><rect x="11" y="4" width="2" height="1" fill="#D4D4D4"/><rect x="13" y="4" width="1" height="1" fill="#0000F8"/><rect x="14" y="4" width="2" height="1" fill="#D4D4D4"/><rect x="0" y="5" width="1" height="1" fill="#D4D4D4"/><rect x="1" y="5" width="2" height="1" fill="#0000F8"/><rect x="3" y="5" width="3" height="1" fill="#D4D4D4"/><rect x="6" y="5" width="1" height="1" fill="#0000F8"/><rect x="7" y="5" width="2" height="1" fill="#D4D4D4"/><rect x="9" y="5" width="1" height="1" fill="#0000F8"/><rect x="10" y="5" width="1" height="1" fill="#D4D4D4"/><rect x="11" y="5" width="1" height="1" fill="#0000F8"/><rect x="12" y="5" width="1" height="1" fill="#D4D4D4"/><rect x="13" y="5" width="3" height="1" fill="#0000F8"/><rect x="0" y="6" width="16" height="1" fill="#D4D4D4"/><rect x="0" y="7" width="7" height="1" fill="#D4D4D4"/><rect x="7" y="7" width="8" height="1" fill="#000"/><rect x="15" y="7" width="1" height="1" fill="#D4D4D4"/><rect x="0" y="8" width="7" height="1" fill="#D4D4D4"/><rect x="7" y="8" width="1" height="1" fill="#000"/><rect x="8" y="8" width="6" height="1" fill="#fff"/><rect x="14" y="8" width="1" height="1" fill="#000"/><rect x="15" y="8" width="1" height="1" fill="#D4D4D4"/><rect x="0" y="9" width="3" height="1" fill="#D4D4D4"/><rect x="3" y="9" width="6" height="1" fill="#000"/><rect x="9" y="9" width="2" height="1" fill="#fff"/><rect x="11" y="9" width="1" height="1" fill="#000"/><rect x="12" y="9" width="2" height="1" fill="#fff"/><rect x="14" y="9" width="1" height="1" fill="#000"/><rect x="15" y="9" width="1" height="1" fill="#D4D4D4"/><rect x="0" y="10" width="3" height="1" fill="#D4D4D4"/><rect x="3" y="10" width="1" height="1" fill="#000"/><rect x="4" y="10" width="4" height="1" fill="#fff"/><rect x="8" y="10" width="1" height="1" fill="#000"/><rect x="9" y="10" width="5" height="1" fill="#fff"/><rect x="14" y="10" width="1" height="1" fill="#000"/><rect x="15" y="10" width="1" height="1" fill="#D4D4D4"/><rect x="0" y="11" width="8" height="1" fill="#000"/><rect x="8" y="11" width="1" height="1" fill="#fff"/><rect x="9" y="11" width="1" height="1" fill="#000"/><rect x="10" y="11" width="2" height="1" fill="#fff"/><rect x="12" y="11" width="1" height="1" fill="#000"/><rect x="13" y="11" width="1" height="1" fill="#fff"/><rect x="14" y="11" width="1" height="1" fill="#000"/><rect x="15" y="11" width="1" height="1" fill="#D4D4D4"/><rect x="0" y="12" width="7" height="1" fill="#fff"/><rect x="7" y="12" width="1" height="1" fill="#000"/><rect x="8" y="12" width="6" height="1" fill="#fff"/><rect x="14" y="12" width="1" height="1" fill="#000"/><rect x="15" y="12" width="1" height="1" fill="#D4D4D4"/><rect x="0" y="13" width="2" height="1" fill="#000"/><rect x="2" y="13" width="1" height="1" fill="#fff"/><rect x="3" y="13" width="2" height="1" fill="#000"/><rect x="5" y="13" width="1" height="1" fill="#fff"/><rect x="6" y="13" width="1" height="1" fill="#000"/><rect x="7" y="13" width="1" height="1" fill="#fff"/><rect x="8" y="13" width="1" height="1" fill="#000"/><rect x="9" y="13" width="2" height="1" fill="#fff"/><rect x="11" y="13" width="1" height="1" fill="#000"/><rect x="12" y="13" width="2" height="1" fill="#fff"/><rect x="14" y="13" width="1" height="1" fill="#000"/><rect x="15" y="13" width="1" height="1" fill="#D4D4D4"/><rect x="0" y="14" width="7" height="1" fill="#fff"/><rect x="7" y="14" width="1" height="1" fill="#000"/><rect x="8" y="14" width="6" height="1" fill="#fff"/><rect x="14" y="14" width="1" height="1" fill="#000"/><rect x="15" y="14" width="1" height="1" fill="#D4D4D4"/><rect x="0" y="15" width="2" height="1" fill="#000"/><rect x="2" y="15" width="1" height="1" fill="#fff"/><rect x="3" y="15" width="2" height="1" fill="#000"/><rect x="5" y="15" width="1" height="1" fill="#fff"/><rect x="6" y="15" width="9" height="1" fill="#000"/><rect x="15" y="15" width="1" height="1" fill="#D4D4D4"/></svg><div style="left:8px;top:34px;width:877px;height:116px;border:3px solid #7896E0;background:#ECE9D8"></div><div style="left:11px;top:37px;width:871px;height:17px;background:#FFFFE1"></div><div style="left:11px;top:54px;width:871px;height:3px;background:#7896E0"></div><div class="t" style="left:14px;top:40px;color:#6E90E0;font-weight:bold;font-size:11px;letter-spacing:0.42px;line-height:14px;">Doklady - přehled</div><svg style="position:absolute;left:862px;top:39px;" width="16" height="12" viewBox="0 0 16 12" shape-rendering="crispEdges"><rect x="0.5" y="0.5" width="15" height="11" fill="#E8ECF8" stroke="#7896E0"/><rect x="2" y="2" width="9" height="3" fill="#fff" stroke="#6070A0" stroke-width="0.6"/><rect x="2" y="7" width="9" height="3" fill="#fff" stroke="#6070A0" stroke-width="0.6"/><rect x="12" y="2" width="2" height="1" fill="#333"/><rect x="12" y="5" width="2" height="1" fill="#333"/><rect x="12" y="8" width="2" height="1" fill="#333"/></svg><div style="left:16px;top:62px;width:861px;height:81px;background:#fff;border:1px solid;border-color:#A0A090 #FFFFFF #FFFFFF #A0A090;"></div><div style="left:17px;top:63px;width:842px;height:78px;overflow:hidden"><div style="left:0px;top:0px;width:842px;height:78px;background:#fff;border-left:1px solid #D8D4C4;"></div><div style="left:0px;top:0px;width:842px;height:17px;background:#ECE9D8"></div><div style="left:1px;top:0px;width:10px;height:17px;background:#ECE9D8;border-left:1px solid #fff;border-top:1px solid #fff;border-right:1px solid #ACA899"></div><div style="left:11px;top:0px;width:1px;height:17px;background:#000"></div><div style="left:13px;top:0px;width:26px;height:17px;background:#ECE9D8;border-left:1px solid #fff;border-top:1px solid #fff;border-right:1px solid #ACA899"></div><div style="left:38px;top:0px;width:1px;height:17px;background:#404040"></div><div class="t" style="left:15px;top:2px;width:24px;overflow:hidden">Ozn.</div><div style="left:39px;top:0px;width:71px;height:17px;background:#ECE9D8;border-left:1px solid #fff;border-top:1px solid #fff;border-right:1px solid #ACA899"></div><div style="left:109px;top:0px;width:1px;height:17px;background:#404040"></div><div class="t" style="left:41px;top:2px;width:69px;overflow:hidden">Prod./Nák.</div><div style="left:110px;top:0px;width:58px;height:17px;background:#ECE9D8;border-left:1px solid #fff;border-top:1px solid #fff;border-right:1px solid #ACA899"></div><div style="left:167px;top:0px;width:1px;height:17px;background:#404040"></div><div class="t" style="left:112px;top:2px;width:56px;overflow:hidden">Typ dok</div><svg style="position:absolute;left:154px;top:7px" width="9" height="5"><path d="M0 0 H9 L4.5 5 Z" fill="#000"/></svg><div style="left:168px;top:0px;width:83px;height:17px;background:#ECE9D8;border-left:1px solid #fff;border-top:1px solid #fff;border-right:1px solid #ACA899"></div><div style="left:250px;top:0px;width:1px;height:17px;background:#404040"></div><div class="t" style="left:170px;top:2px;width:81px;overflow:hidden">Datum vystavení</div><div style="left:251px;top:0px;width:83px;height:17px;background:#ECE9D8;border-left:1px solid #fff;border-top:1px solid #fff;border-right:1px solid #ACA899"></div><div style="left:333px;top:0px;width:1px;height:17px;background:#404040"></div><div class="t" style="left:253px;top:2px;width:81px;overflow:hidden">Číslo dokladu</div><div style="left:334px;top:0px;width:77px;height:17px;background:#ECE9D8;border-left:1px solid #fff;border-top:1px solid #fff;border-right:1px solid #ACA899"></div><div style="left:410px;top:0px;width:1px;height:17px;background:#404040"></div><div class="t" style="left:336px;top:2px;width:75px;overflow:hidden">Var.symbol</div><div style="left:411px;top:0px;width:112px;height:17px;background:#ECE9D8;border-left:1px solid #fff;border-top:1px solid #fff;border-right:1px solid #ACA899"></div><div style="left:522px;top:0px;width:1px;height:17px;background:#404040"></div><div class="t" style="left:413px;top:2px;width:110px;overflow:hidden">Název firmy</div><div style="left:523px;top:0px;width:106px;height:17px;background:#ECE9D8;border-left:1px solid #fff;border-top:1px solid #fff;border-right:1px solid #ACA899"></div><div style="left:628px;top:0px;width:1px;height:17px;background:#404040"></div><div class="t" style="left:525px;top:2px;width:104px;overflow:hidden">Celk.částka po slevě</div><div style="left:629px;top:0px;width:72px;height:17px;background:#ECE9D8;border-left:1px solid #fff;border-top:1px solid #fff;border-right:1px solid #ACA899"></div><div style="left:700px;top:0px;width:1px;height:17px;background:#404040"></div><div class="t" style="left:631px;top:2px;width:70px;overflow:hidden">K zaplacení</div><div style="left:701px;top:0px;width:62px;height:17px;background:#ECE9D8;border-left:1px solid #fff;border-top:1px solid #fff;border-right:1px solid #ACA899"></div><div style="left:762px;top:0px;width:1px;height:17px;background:#404040"></div><div class="t" style="left:703px;top:2px;width:60px;overflow:hidden">Dluženo</div><div style="left:763px;top:0px;width:80px;height:17px;background:#ECE9D8;border-left:1px solid #fff;border-top:1px solid #fff;border-right:1px solid #ACA899"></div><div style="left:842px;top:0px;width:1px;height:17px;background:#404040"></div><div class="t" style="left:765px;top:2px;width:78px;overflow:hidden">Dluženo k datu</div><div style="left:11px;top:17px;width:831px;height:1px;background:#000"></div><div style="left:1px;top:17px;width:10px;height:1px;background:#ACA899"></div><div style="left:1px;top:18px;width:10px;height:18px;background:#ECE9D8;border-left:1px solid #fff;border-top:1px solid #fff;border-right:1px solid #ACA899;border-bottom:1px solid #000"></div><div style="left:38px;top:18px;width:1px;height:18px;background:#C8C8C8"></div><div style="left:18px;top:20px;width:13px;height:13px;background:#fff;border:1px solid;border-color:#ACA899 #F4F3EE #F4F3EE #ACA899;box-shadow:inset 1px 1px 0 #716F64"></div><div style="left:109px;top:18px;width:1px;height:18px;background:#C8C8C8"></div><div class="t" style="left:41px;top:21px;width:68px;overflow:hidden">Nákup</div><div style="left:167px;top:18px;width:1px;height:18px;background:#C8C8C8"></div><div class="t" style="left:112px;top:21px;width:55px;overflow:hidden">F - faktura</div><div style="left:250px;top:18px;width:1px;height:18px;background:#C8C8C8"></div><div class="t" style="left:170px;top:21px;width:80px;overflow:hidden">10.1.2011</div><div style="left:333px;top:18px;width:1px;height:18px;background:#C8C8C8"></div><div class="t" style="left:253px;top:21px;width:80px;overflow:hidden">FD11000002</div><div style="left:410px;top:18px;width:1px;height:18px;background:#C8C8C8"></div><div class="t" style="left:336px;top:21px;width:74px;overflow:hidden">201005891</div><div style="left:522px;top:18px;width:1px;height:18px;background:#C8C8C8"></div><div class="t" style="left:413px;top:21px;width:109px;overflow:hidden">Senika</div><div style="left:628px;top:18px;width:1px;height:18px;background:#C8C8C8"></div><div class="t" style="left:523px;top:21px;width:103px;text-align:right;overflow:hidden">8880,00</div><div style="left:700px;top:18px;width:1px;height:18px;background:#C8C8C8"></div><div class="t" style="left:629px;top:21px;width:69px;text-align:right;overflow:hidden">8880,00</div><div style="left:762px;top:18px;width:1px;height:18px;background:#C8C8C8"></div><div class="t" style="left:701px;top:21px;width:59px;text-align:right;overflow:hidden">8880,00</div><div style="left:842px;top:18px;width:1px;height:18px;background:#C8C8C8"></div><div style="left:11px;top:18px;width:831px;height:0px;"></div><div style="left:12px;top:35px;width:831px;height:1px;background:#C8C8C8"></div><div style="left:11px;top:18px;width:1px;height:18px;background:#000"></div><div style="left:1px;top:36px;width:10px;height:18px;background:#ECE9D8;border-left:1px solid #fff;border-top:1px solid #fff;border-right:1px solid #ACA899;border-bottom:1px solid #000"></div><svg style="position:absolute;left:4px;top:39px" width="7" height="12"><path d="M0 0 L6 6 L0 12 Z" fill="#000"/></svg><div style="left:38px;top:36px;width:1px;height:18px;background:#C8C8C8"></div><div style="left:18px;top:38px;width:13px;height:13px;background:#fff;border:1px solid;border-color:#ACA899 #F4F3EE #F4F3EE #ACA899;box-shadow:inset 1px 1px 0 #716F64"></div><div style="left:109px;top:36px;width:1px;height:18px;background:#C8C8C8"></div><div class="t" style="left:41px;top:39px;width:68px;overflow:hidden">Prodej</div><div style="left:167px;top:36px;width:1px;height:18px;background:#C8C8C8"></div><div class="t" style="left:112px;top:39px;width:55px;overflow:hidden">F - faktura</div><div style="left:250px;top:36px;width:1px;height:18px;background:#C8C8C8"></div><div class="t" style="left:170px;top:39px;width:80px;overflow:hidden">11.1.2011</div><div style="left:333px;top:36px;width:1px;height:18px;background:#C8C8C8"></div><div class="t" style="left:253px;top:39px;width:80px;overflow:hidden">FO11000001</div><div style="left:410px;top:36px;width:1px;height:18px;background:#C8C8C8"></div><div class="t" style="left:336px;top:39px;width:74px;overflow:hidden">11000001</div><div style="left:522px;top:36px;width:1px;height:18px;background:#C8C8C8"></div><div class="t" style="left:413px;top:39px;width:109px;overflow:hidden">ZEBRA</div><div style="left:628px;top:36px;width:1px;height:18px;background:#C8C8C8"></div><div class="t" style="left:523px;top:39px;width:103px;text-align:right;overflow:hidden">10992,00</div><div style="left:700px;top:36px;width:1px;height:18px;background:#C8C8C8"></div><div class="t" style="left:629px;top:39px;width:69px;text-align:right;overflow:hidden">0,00</div><div style="left:762px;top:36px;width:1px;height:18px;background:#C8C8C8"></div><div class="t" style="left:701px;top:39px;width:59px;text-align:right;overflow:hidden">0,00</div><div style="left:842px;top:36px;width:1px;height:18px;background:#C8C8C8"></div><div style="left:11px;top:36px;width:831px;height:0px;"></div><div style="left:12px;top:53px;width:831px;height:1px;background:#C8C8C8"></div><div style="left:11px;top:36px;width:1px;height:18px;background:#000"></div><div style="left:12px;top:52px;width:831px;height:1px;background:#0A246A"></div><div style="left:12px;top:36px;width:831px;height:1px;background:#0A246A"></div></div><div style="left:859px;top:63px;width:16px;height:62px;background:linear-gradient(90deg,#F3F1EC,#FEFEFB 40%,#FEFEFB 60%,#F0EEE6)"></div><div style="left:859px;top:64px;width:16px;height:16px;background:linear-gradient(135deg,#D6E3FE,#B7CBF8);border:1px solid #FFFFFF;border-radius:2px;box-shadow:inset -1px -1px 0 #A3BCF0"></div><svg style="position:absolute;left:859px;top:64px" width="16" height="16"><path d="M4 9 L7.5 5.5 L11 9" stroke="#4D6185" stroke-width="2" fill="none"/></svg><div style="left:859px;top:92px;width:16px;height:7px;background:linear-gradient(135deg,#CDDBFC,#B4C9F7);border:1px solid #FFFFFF;border-radius:2px;box-shadow:inset -1px -1px 0 #A0B8EC"></div><div style="left:859px;top:108px;width:16px;height:16px;background:linear-gradient(135deg,#D6E3FE,#B7CBF8);border:1px solid #FFFFFF;border-radius:2px;box-shadow:inset -1px -1px 0 #A3BCF0"></div><svg style="position:absolute;left:859px;top:108px" width="16" height="16"><path d="M4 6 L7.5 9.5 L11 6" stroke="#4D6185" stroke-width="2" fill="none"/></svg><div style="left:17px;top:125px;width:842px;height:16px;background:linear-gradient(#F3F1EC,#FEFEFB 40%,#FEFEFB 60%,#F0EEE6)"></div><div style="left:17px;top:125px;width:16px;height:16px;background:linear-gradient(135deg,#D6E3FE,#B7CBF8);border:1px solid #FFFFFF;border-radius:2px;box-shadow:inset -1px -1px 0 #A3BCF0"></div><svg style="position:absolute;left:17px;top:125px" width="16" height="16"><path d="M9 4 L5.5 7.5 L9 11" stroke="#4D6185" stroke-width="2" fill="none"/></svg><div style="left:34px;top:125px;width:16px;height:16px;background:linear-gradient(135deg,#CDDBFC,#B4C9F7);border:1px solid #FFFFFF;border-radius:2px;box-shadow:inset -1px -1px 0 #A0B8EC"></div><div style="left:38px;top:129px;width:1px;height:8px;background:#EEF4FE;box-shadow:1px 0 0 #8CA8E8"></div><div style="left:40px;top:129px;width:1px;height:8px;background:#EEF4FE;box-shadow:1px 0 0 #8CA8E8"></div><div style="left:42px;top:129px;width:1px;height:8px;background:#EEF4FE;box-shadow:1px 0 0 #8CA8E8"></div><div style="left:44px;top:129px;width:1px;height:8px;background:#EEF4FE;box-shadow:1px 0 0 #8CA8E8"></div><div style="left:841px;top:125px;width:16px;height:16px;background:linear-gradient(135deg,#D6E3FE,#B7CBF8);border:1px solid #FFFFFF;border-radius:2px;box-shadow:inset -1px -1px 0 #A3BCF0"></div><svg style="position:absolute;left:841px;top:125px" width="16" height="16"><path d="M6 4 L9.5 7.5 L6 11" stroke="#4D6185" stroke-width="2" fill="none"/></svg><div style="left:859px;top:125px;width:16px;height:16px;background:#ECE9D8"></div><div style="left:9px;top:158px;width:83px;height:24px;background:linear-gradient(#F6F5EE,#ECE9D8 60%,#E2DFCE);border:1px solid;border-color:#FFFFFF #9D9A8A #9D9A8A #FFFFFF;box-shadow:inset -1px -1px 0 #CDCAB8"></div><div class="t" style="left:9px;top:164px;width:78px;text-align:center;color:#000"></div><div class="t" style="left:79px;top:159px;font-size:9px;line-height:11px;color:#BAB6A8">12</div><svg style="position:absolute;left:18px;top:165px;shape-rendering:auto" width="14" height="10" viewBox="0 0 14 10" shape-rendering="crispEdges"><path d="M0 5 L5 0 L5 3 L13 3 L13 7 L5 7 L5 10 Z" fill="#fff" stroke="#1040C0" stroke-width="1.2"/><path d="M2 5 L5 2.5 L5 4 L12 4 L12 6 L5 6 L5 7.5Z" fill="#3070F0"/></svg><div class="t" style="left:36px;top:164px;">Doklady</div><div style="left:98px;top:158px;width:4px;height:24px;border-left:1px solid #fff;border-right:1px solid #ACA899"></div><div style="left:106px;top:158px;width:74px;height:24px;background:linear-gradient(#F6F5EE,#ECE9D8 60%,#E2DFCE);border:1px solid;border-color:#FFFFFF #9D9A8A #9D9A8A #FFFFFF;box-shadow:inset -1px -1px 0 #CDCAB8"></div><div class="t" style="left:106px;top:164px;width:69px;text-align:center;color:#ACA899">Položky</div><div class="t" style="left:172px;top:159px;font-size:9px;line-height:11px;color:#BAB6A8">1</div><div style="left:185px;top:158px;width:76px;height:24px;background:linear-gradient(#F6F5EE,#ECE9D8 60%,#E2DFCE);border:1px solid;border-color:#FFFFFF #9D9A8A #9D9A8A #FFFFFF;box-shadow:inset -1px -1px 0 #CDCAB8"></div><div class="t" style="left:185px;top:164px;width:71px;text-align:center;color:#000">Dodací listy</div><div class="t" style="left:253px;top:159px;font-size:9px;line-height:11px;color:#BAB6A8">2</div><div style="left:266px;top:158px;width:80px;height:24px;background:linear-gradient(#F6F5EE,#ECE9D8 60%,#E2DFCE);border:1px solid;border-color:#FFFFFF #9D9A8A #9D9A8A #FFFFFF;box-shadow:inset -1px -1px 0 #CDCAB8"></div><div class="t" style="left:266px;top:164px;width:75px;text-align:center;color:#000">Rozpis DPH</div><div class="t" style="left:338px;top:159px;font-size:9px;line-height:11px;color:#BAB6A8">3</div><div style="left:351px;top:158px;width:54px;height:24px;background:linear-gradient(#F6F5EE,#ECE9D8 60%,#E2DFCE);border:1px solid;border-color:#FFFFFF #9D9A8A #9D9A8A #FFFFFF;box-shadow:inset -1px -1px 0 #CDCAB8"></div><div class="t" style="left:351px;top:164px;width:49px;text-align:center;color:#000">Platby</div><div class="t" style="left:397px;top:159px;font-size:9px;line-height:11px;color:#BAB6A8">4</div><div style="left:8px;top:185px;width:877px;height:145px;border:3px solid #7896E0;background:#ECE9D8"></div><div style="left:11px;top:188px;width:871px;height:17px;background:#FFFFE1"></div><div style="left:11px;top:205px;width:871px;height:3px;background:#7896E0"></div><div class="t" style="left:14px;top:191px;color:#6E90E0;font-weight:bold;font-size:11px;letter-spacing:0.49px;line-height:14px;">Doklady - položky (Firma: ZEBRA</div><div class="t" style="left:214px;top:191px;color:#6E90E0;font-weight:bold;font-size:11px;letter-spacing:0.58px;line-height:14px;">Doklad: FO11000001</div><div class="t" style="left:346px;top:191px;color:#6E90E0;font-weight:bold;font-size:11px;letter-spacing:0.62px;line-height:14px;">Datum vystavení: 11.1.2011) - přehled</div><svg style="position:absolute;left:839px;top:190px;" width="16" height="12" viewBox="0 0 16 12" shape-rendering="crispEdges"><rect x="0.5" y="0.5" width="15" height="11" fill="#E8ECF8" stroke="#7896E0"/><rect x="2" y="2" width="9" height="3" fill="#fff" stroke="#6070A0" stroke-width="0.6"/><rect x="2" y="7" width="9" height="3" fill="#fff" stroke="#6070A0" stroke-width="0.6"/><rect x="12" y="2" width="2" height="1" fill="#333"/><rect x="12" y="5" width="2" height="1" fill="#333"/><rect x="12" y="8" width="2" height="1" fill="#333"/></svg><svg style="position:absolute;left:860px;top:188px;shape-rendering:auto" width="18" height="17" viewBox="0 0 18 17" shape-rendering="crispEdges"><defs><radialGradient id="ig" cx="0.35" cy="0.3" r="0.8"><stop offset="0" stop-color="#fff"/><stop offset="0.6" stop-color="#D8E4F4"/><stop offset="1" stop-color="#90A8D0"/></radialGradient></defs><circle cx="9" cy="8.5" r="8" fill="url(#ig)" stroke="#8098C0" stroke-width="0.8"/><rect x="7.5" y="7" width="3" height="6" fill="#1030A0"/><rect x="6" y="12" width="6" height="1.5" fill="#1030A0"/><rect x="6" y="7" width="2" height="1" fill="#1030A0"/><circle cx="9" cy="4.5" r="1.5" fill="#1030A0"/></svg><div style="left:15px;top:215px;width:862px;height:107px;background:#fff;border:1px solid;border-color:#A0A090 #FFFFFF #FFFFFF #A0A090;"></div><div style="left:16px;top:216px;width:843px;height:104px;overflow:hidden"><div style="left:0px;top:0px;width:843px;height:104px;background:#fff;border-left:1px solid #D8D4C4;"></div><div style="left:0px;top:0px;width:843px;height:17px;background:#ECE9D8"></div><div style="left:0px;top:0px;width:11px;height:17px;background:#ECE9D8;border-left:1px solid #fff;border-top:1px solid #fff;border-right:1px solid #ACA899"></div><svg style="position:absolute;left:3px;top:3px" width="6" height="11"><path d="M5 0 L1 4 L5 4 Z M1 6 L5 6 L1 10 Z" fill="#1010E0"/></svg><div style="left:11px;top:0px;width:1px;height:17px;background:#000"></div><div style="left:12px;top:0px;width:47px;height:17px;background:#ECE9D8;border-left:1px solid #fff;border-top:1px solid #fff;border-right:1px solid #ACA899"></div><div style="left:58px;top:0px;width:1px;height:17px;background:#404040"></div><div class="t" style="left:14px;top:2px;width:45px;overflow:hidden">Č.řád.</div><svg style="position:absolute;left:45px;top:7px" width="9" height="5"><path d="M0 0 H9 L4.5 5 Z" fill="#000"/></svg><div style="left:59px;top:0px;width:77px;height:17px;background:#ECE9D8;border-left:1px solid #fff;border-top:1px solid #fff;border-right:1px solid #ACA899"></div><div style="left:135px;top:0px;width:1px;height:17px;background:#404040"></div><div class="t" style="left:61px;top:2px;width:75px;overflow:hidden">Typ řádku</div><div style="left:136px;top:0px;width:256px;height:17px;background:#ECE9D8;border-left:1px solid #fff;border-top:1px solid #fff;border-right:1px solid #ACA899"></div><div style="left:391px;top:0px;width:1px;height:17px;background:#404040"></div><div class="t" style="left:138px;top:2px;width:254px;overflow:hidden">Název produktu nebo text položky</div><div style="left:392px;top:0px;width:71px;height:17px;background:#ECE9D8;border-left:1px solid #fff;border-top:1px solid #fff;border-right:1px solid #ACA899"></div><div style="left:462px;top:0px;width:1px;height:17px;background:#404040"></div><div class="t" style="left:394px;top:2px;width:69px;overflow:hidden">Produkt ozn.</div><div style="left:463px;top:0px;width:78px;height:17px;background:#ECE9D8;border-left:1px solid #fff;border-top:1px solid #fff;border-right:1px solid #ACA899"></div><div style="left:540px;top:0px;width:1px;height:17px;background:#404040"></div><div class="t" style="left:465px;top:2px;width:76px;overflow:hidden">Množství</div><div style="left:541px;top:0px;width:31px;height:17px;background:#ECE9D8;border-left:1px solid #fff;border-top:1px solid #fff;border-right:1px solid #ACA899"></div><div style="left:571px;top:0px;width:1px;height:17px;background:#404040"></div><div class="t" style="left:543px;top:2px;width:29px;overflow:hidden">Jedn.</div><div style="left:572px;top:0px;width:112px;height:17px;background:#ECE9D8;border-left:1px solid #fff;border-top:1px solid #fff;border-right:1px solid #ACA899"></div><div style="left:683px;top:0px;width:1px;height:17px;background:#404040"></div><div class="t" style="left:574px;top:2px;width:110px;overflow:hidden">Cena jedn.před slevou</div><div style="left:684px;top:0px;width:58px;height:17px;background:#ECE9D8;border-left:1px solid #fff;border-top:1px solid #fff;border-right:1px solid #ACA899"></div><div style="left:741px;top:0px;width:1px;height:17px;background:#404040"></div><div class="t" style="left:686px;top:2px;width:56px;overflow:hidden">Sleva [%]</div><div style="left:742px;top:0px;width:102px;height:17px;background:#ECE9D8;border-left:1px solid #fff;border-top:1px solid #fff;border-right:1px solid #ACA899"></div><div style="left:843px;top:0px;width:1px;height:17px;background:#404040"></div><div class="t" style="left:744px;top:2px;width:100px;overflow:hidden">Cena celk. bez DPH</div><div style="left:11px;top:17px;width:832px;height:1px;background:#000"></div><div style="left:0px;top:17px;width:11px;height:1px;background:#ACA899"></div><div style="left:0px;top:18px;width:11px;height:18px;background:#ECE9D8;border-left:1px solid #fff;border-top:1px solid #fff;border-right:1px solid #ACA899;border-bottom:1px solid #000"></div><svg style="position:absolute;left:3px;top:21px" width="7" height="12"><path d="M0 0 L6 6 L0 12 Z" fill="#000"/></svg><div style="left:58px;top:18px;width:1px;height:18px;background:#C8C8C8"></div><div class="t" style="left:12px;top:21px;width:44px;text-align:right;overflow:hidden">1</div><div style="left:135px;top:18px;width:1px;height:18px;background:#C8C8C8"></div><div class="t" style="left:61px;top:21px;width:74px;overflow:hidden">T - Text</div><div style="left:391px;top:18px;width:1px;height:18px;background:#C8C8C8"></div><div class="t" style="left:138px;top:21px;width:253px;overflow:hidden">Dle Vaší objednávky Vám fakturujeme:</div><div style="left:462px;top:18px;width:1px;height:18px;background:#C8C8C8"></div><div style="left:540px;top:18px;width:1px;height:18px;background:#C8C8C8"></div><div class="t" style="left:463px;top:21px;width:75px;text-align:right;overflow:hidden">0</div><div style="left:571px;top:18px;width:1px;height:18px;background:#C8C8C8"></div><div style="left:683px;top:18px;width:1px;height:18px;background:#C8C8C8"></div><div class="t" style="left:572px;top:21px;width:109px;text-align:right;overflow:hidden">0,00</div><div style="left:741px;top:18px;width:1px;height:18px;background:#C8C8C8"></div><div style="left:843px;top:18px;width:1px;height:18px;background:#C8C8C8"></div><div class="t" style="left:742px;top:21px;width:99px;text-align:right;overflow:hidden">0,00</div><div style="left:11px;top:18px;width:832px;height:0px;"></div><div style="left:12px;top:35px;width:832px;height:1px;background:#C8C8C8"></div><div style="left:11px;top:18px;width:1px;height:18px;background:#000"></div><div style="left:0px;top:36px;width:11px;height:18px;background:#ECE9D8;border-left:1px solid #fff;border-top:1px solid #fff;border-right:1px solid #ACA899;border-bottom:1px solid #000"></div><div style="left:58px;top:36px;width:1px;height:18px;background:#C8C8C8"></div><div class="t" style="left:12px;top:39px;width:44px;text-align:right;overflow:hidden">2</div><div style="left:135px;top:36px;width:1px;height:18px;background:#C8C8C8"></div><div class="t" style="left:61px;top:39px;width:74px;overflow:hidden">P - Produkt</div><div style="left:391px;top:36px;width:1px;height:18px;background:#C8C8C8"></div><div class="t" style="left:138px;top:39px;width:253px;overflow:hidden">Křeslo FINI</div><div style="left:462px;top:36px;width:1px;height:18px;background:#C8C8C8"></div><div class="t" style="left:394px;top:39px;width:68px;overflow:hidden">B00005</div><div style="left:540px;top:36px;width:1px;height:18px;background:#C8C8C8"></div><div class="t" style="left:463px;top:39px;width:75px;text-align:right;overflow:hidden">2</div><div style="left:571px;top:36px;width:1px;height:18px;background:#C8C8C8"></div><div class="t" style="left:543px;top:39px;width:28px;overflow:hidden">ks</div><div style="left:683px;top:36px;width:1px;height:18px;background:#C8C8C8"></div><div class="t" style="left:572px;top:39px;width:109px;text-align:right;overflow:hidden">4580,00</div><div style="left:741px;top:36px;width:1px;height:18px;background:#C8C8C8"></div><div class="t" style="left:684px;top:39px;width:55px;text-align:right;overflow:hidden">0,00</div><div style="left:843px;top:36px;width:1px;height:18px;background:#C8C8C8"></div><div class="t" style="left:742px;top:39px;width:99px;text-align:right;overflow:hidden">9160,00</div><div style="left:11px;top:36px;width:832px;height:0px;"></div><div style="left:12px;top:53px;width:832px;height:1px;background:#C8C8C8"></div><div style="left:11px;top:36px;width:1px;height:18px;background:#000"></div><div style="left:0px;top:54px;width:11px;height:18px;background:#ECE9D8;border-left:1px solid #fff;border-top:1px solid #fff;border-right:1px solid #ACA899;border-bottom:1px solid #000"></div><div style="left:58px;top:54px;width:1px;height:18px;background:#C8C8C8"></div><div class="t" style="left:12px;top:57px;width:44px;text-align:right;overflow:hidden">3</div><div style="left:135px;top:54px;width:1px;height:18px;background:#C8C8C8"></div><div class="t" style="left:61px;top:57px;width:74px;overflow:hidden">O - Odečtení zálohy</div><div style="left:391px;top:54px;width:1px;height:18px;background:#C8C8C8"></div><div class="t" style="left:138px;top:57px;width:253px;overflow:hidden">Zaplacená záloha na základě výzvy č. VO11001</div><div style="left:462px;top:54px;width:1px;height:18px;background:#C8C8C8"></div><div style="left:540px;top:54px;width:1px;height:18px;background:#C8C8C8"></div><div class="t" style="left:463px;top:57px;width:75px;text-align:right;overflow:hidden">1</div><div style="left:571px;top:54px;width:1px;height:18px;background:#C8C8C8"></div><div style="left:683px;top:54px;width:1px;height:18px;background:#C8C8C8"></div><div class="t" style="left:572px;top:57px;width:109px;text-align:right;overflow:hidden">-10992,00</div><div style="left:741px;top:54px;width:1px;height:18px;background:#C8C8C8"></div><div style="left:843px;top:54px;width:1px;height:18px;background:#C8C8C8"></div><div class="t" style="left:742px;top:57px;width:99px;text-align:right;overflow:hidden">-10992,00</div><div style="left:11px;top:54px;width:832px;height:0px;"></div><div style="left:12px;top:71px;width:832px;height:1px;background:#C8C8C8"></div><div style="left:11px;top:54px;width:1px;height:18px;background:#000"></div><div style="left:12px;top:34px;width:832px;height:1px;background:#0A246A"></div><div style="left:12px;top:18px;width:832px;height:1px;background:#0A246A"></div></div><div style="left:859px;top:216px;width:16px;height:88px;background:linear-gradient(90deg,#F3F1EC,#FEFEFB 40%,#FEFEFB 60%,#F0EEE6)"></div><div style="left:859px;top:216px;width:16px;height:16px;background:linear-gradient(135deg,#D6E3FE,#B7CBF8);border:1px solid #FFFFFF;border-radius:2px;box-shadow:inset -1px -1px 0 #A3BCF0"></div><svg style="position:absolute;left:859px;top:216px" width="16" height="16"><path d="M4 9 L7.5 5.5 L11 9" stroke="#4D6185" stroke-width="2" fill="none"/></svg><div style="left:859px;top:234px;width:16px;height:30px;background:linear-gradient(135deg,#CDDBFC,#B4C9F7);border:1px solid #FFFFFF;border-radius:2px;box-shadow:inset -1px -1px 0 #A0B8EC"></div><div style="left:863px;top:245px;width:8px;height:1px;background:#EEF4FE;box-shadow:0 1px 0 #8CA8E8"></div><div style="left:863px;top:247px;width:8px;height:1px;background:#EEF4FE;box-shadow:0 1px 0 #8CA8E8"></div><div style="left:863px;top:249px;width:8px;height:1px;background:#EEF4FE;box-shadow:0 1px 0 #8CA8E8"></div><div style="left:863px;top:251px;width:8px;height:1px;background:#EEF4FE;box-shadow:0 1px 0 #8CA8E8"></div><div style="left:859px;top:288px;width:16px;height:16px;background:linear-gradient(135deg,#D6E3FE,#B7CBF8);border:1px solid #FFFFFF;border-radius:2px;box-shadow:inset -1px -1px 0 #A3BCF0"></div><svg style="position:absolute;left:859px;top:288px" width="16" height="16"><path d="M4 6 L7.5 9.5 L11 6" stroke="#4D6185" stroke-width="2" fill="none"/></svg><div style="left:16px;top:305px;width:843px;height:16px;background:linear-gradient(#F3F1EC,#FEFEFB 40%,#FEFEFB 60%,#F0EEE6)"></div><div style="left:16px;top:305px;width:16px;height:16px;background:linear-gradient(135deg,#D6E3FE,#B7CBF8);border:1px solid #FFFFFF;border-radius:2px;box-shadow:inset -1px -1px 0 #A3BCF0"></div><svg style="position:absolute;left:16px;top:305px" width="16" height="16"><path d="M9 4 L5.5 7.5 L9 11" stroke="#4D6185" stroke-width="2" fill="none"/></svg><div style="left:33px;top:305px;width:16px;height:16px;background:linear-gradient(135deg,#CDDBFC,#B4C9F7);border:1px solid #FFFFFF;border-radius:2px;box-shadow:inset -1px -1px 0 #A0B8EC"></div><div style="left:37px;top:309px;width:1px;height:8px;background:#EEF4FE;box-shadow:1px 0 0 #8CA8E8"></div><div style="left:39px;top:309px;width:1px;height:8px;background:#EEF4FE;box-shadow:1px 0 0 #8CA8E8"></div><div style="left:41px;top:309px;width:1px;height:8px;background:#EEF4FE;box-shadow:1px 0 0 #8CA8E8"></div><div style="left:43px;top:309px;width:1px;height:8px;background:#EEF4FE;box-shadow:1px 0 0 #8CA8E8"></div><div style="left:841px;top:305px;width:16px;height:16px;background:linear-gradient(135deg,#D6E3FE,#B7CBF8);border:1px solid #FFFFFF;border-radius:2px;box-shadow:inset -1px -1px 0 #A3BCF0"></div><svg style="position:absolute;left:841px;top:305px" width="16" height="16"><path d="M6 4 L9.5 7.5 L6 11" stroke="#4D6185" stroke-width="2" fill="none"/></svg><div style="left:859px;top:305px;width:16px;height:16px;background:#ECE9D8"></div><div style="left:7px;top:335px;width:76px;height:24px;background:linear-gradient(#F6F5EE,#ECE9D8 60%,#E2DFCE);border:1px solid;border-color:#FFFFFF #9D9A8A #9D9A8A #FFFFFF;box-shadow:inset -1px -1px 0 #CDCAB8"></div><div class="t" style="left:7px;top:341px;width:76px;text-align:center;color:#000">Sériová čísla</div><div style="left:87px;top:335px;width:77px;height:24px;background:linear-gradient(#F6F5EE,#ECE9D8 60%,#E2DFCE);border:1px solid;border-color:#FFFFFF #9D9A8A #9D9A8A #FFFFFF;box-shadow:inset -1px -1px 0 #CDCAB8"></div><div class="t" style="left:87px;top:341px;width:74px;overflow:hidden;color:#ACA899">oklady - Výkony</div><div style="left:4px;top:364px;width:884px;height:2px;background:#ACA899"></div></div><div style="left:907px;top:760px;width:75px;height:2px;background:linear-gradient(#FF2020,#FF7050)"></div><div style="left:410px;top:207px;width:574px;height:223px;overflow:hidden;border-radius:7px 7px 0 0"><div style="left:0px;top:0px;width:574px;height:223px;background:#0049D8;border-radius:7px 7px 0 0;"></div><div style="left:0px;top:0px;width:574px;height:30px;background:linear-gradient(#0A48D8 0,#0A48D8 1px,#3D8DFF 1px,#3D8DFF 3px,#0A5EEA 5px,#0055E0 7px,#0055E0 17px,#0066F6 21px,#0066F6 28px,#0040C8 28px);border-radius:7px 7px 0 0;"></div><div style="left:4px;top:30px;width:566px;height:189px;background:#ECE9D8"></div><div class="t" style="left:25px;top:9px;color:#fff;font-weight:bold;font-size:13px;line-height:16px;text-shadow:1px 1px 0 #0A1E8C;">Seznam produktů</div><svg style="position:absolute;left:6px;top:8px;" width="16" height="16" viewBox="0 0 16 16" shape-rendering="crispEdges"><rect x="0" y="0" width="9" height="1" fill="#000"/><rect x="0" y="1" width="1" height="1" fill="#000"/><rect x="1" y="1" width="7" height="1" fill="#00E8F0"/><rect x="8" y="1" width="1" height="1" fill="#000"/><rect x="0" y="2" width="1" height="1" fill="#000"/><rect x="1" y="2" width="4" height="1" fill="#00E8F0"/><rect x="5" y="2" width="2" height="1" fill="#00A0A0"/><rect x="7" y="2" width="1" height="1" fill="#00E8F0"/><rect x="8" y="2" width="1" height="1" fill="#000"/><rect x="10" y="2" width="6" height="1" fill="#000"/><rect x="0" y="3" width="1" height="1" fill="#000"/><rect x="1" y="3" width="4" height="1" fill="#00E8F0"/><rect x="5" y="3" width="3" height="1" fill="#00A0A0"/><rect x="8" y="3" width="1" height="1" fill="#000"/><rect x="10" y="3" width="1" height="1" fill="#000"/><rect x="11" y="3" width="4" height="1" fill="#fff"/><rect x="15" y="3" width="1" height="1" fill="#000"/><rect x="0" y="4" width="1" height="1" fill="#000"/><rect x="1" y="4" width="2" height="1" fill="#00E8F0"/><rect x="3" y="4" width="3" height="1" fill="#00D800"/><rect x="6" y="4" width="2" height="1" fill="#00A0A0"/><rect x="8" y="4" width="1" height="1" fill="#000"/><rect x="10" y="4" width="1" height="1" fill="#000"/><rect x="11" y="4" width="1" height="1" fill="#fff"/><rect x="12" y="4" width="2" height="1" fill="#000"/><rect x="14" y="4" width="1" height="1" fill="#fff"/><rect x="15" y="4" width="1" height="1" fill="#000"/><rect x="0" y="5" width="1" height="1" fill="#000"/><rect x="1" y="5" width="1" height="1" fill="#00E8F0"/><rect x="2" y="5" width="6" height="1" fill="#00D800"/><rect x="8" y="5" width="1" height="1" fill="#000"/><rect x="10" y="5" width="1" height="1" fill="#000"/><rect x="11" y="5" width="4" height="1" fill="#fff"/><rect x="15" y="5" width="1" height="1" fill="#000"/><rect x="0" y="6" width="1" height="1" fill="#000"/><rect x="1" y="6" width="4" height="1" fill="#00D800"/><rect x="5" y="6" width="6" height="1" fill="#000"/><rect x="11" y="6" width="1" height="1" fill="#fff"/><rect x="12" y="6" width="2" height="1" fill="#000"/><rect x="14" y="6" width="1" height="1" fill="#fff"/><rect x="15" y="6" width="1" height="1" fill="#000"/><rect x="0" y="7" width="1" height="1" fill="#000"/><rect x="1" y="7" width="3" height="1" fill="#00D800"/><rect x="4" y="7" width="1" height="1" fill="#000"/><rect x="5" y="7" width="2" height="1" fill="#fff"/><rect x="7" y="7" width="1" height="1" fill="#00D800"/><rect x="8" y="7" width="1" height="1" fill="#fff"/><rect x="9" y="7" width="1" height="1" fill="#0030F0"/><rect x="10" y="7" width="1" height="1" fill="#fff"/><rect x="11" y="7" width="1" height="1" fill="#000"/><rect x="12" y="7" width="3" height="1" fill="#fff"/><rect x="15" y="7" width="1" height="1" fill="#000"/><rect x="0" y="8" width="1" height="1" fill="#000"/><rect x="1" y="8" width="2" height="1" fill="#00D800"/><rect x="3" y="8" width="1" height="1" fill="#000"/><rect x="4" y="8" width="1" height="1" fill="#fff"/><rect x="5" y="8" width="2" height="1" fill="#00D800"/><rect x="7" y="8" width="1" height="1" fill="#fff"/><rect x="8" y="8" width="2" height="1" fill="#0030F0"/><rect x="10" y="8" width="1" height="1" fill="#fff"/><rect x="11" y="8" width="3" height="1" fill="#000"/><rect x="14" y="8" width="1" height="1" fill="#fff"/><rect x="15" y="8" width="1" height="1" fill="#000"/><rect x="0" y="9" width="3" height="1" fill="#000"/><rect x="3" y="9" width="1" height="1" fill="#fff"/><rect x="4" y="9" width="2" height="1" fill="#00D800"/><rect x="6" y="9" width="3" height="1" fill="#fff"/><rect x="9" y="9" width="2" height="1" fill="#0030F0"/><rect x="11" y="9" width="1" height="1" fill="#fff"/><rect x="12" y="9" width="1" height="1" fill="#000"/><rect x="13" y="9" width="2" height="1" fill="#fff"/><rect x="15" y="9" width="1" height="1" fill="#000"/><rect x="2" y="10" width="1" height="1" fill="#000"/><rect x="3" y="10" width="2" height="1" fill="#fff"/><rect x="5" y="10" width="1" height="1" fill="#00D800"/><rect x="6" y="10" width="1" height="1" fill="#fff"/><rect x="7" y="10" width="1" height="1" fill="#000"/><rect x="8" y="10" width="4" height="1" fill="#fff"/><rect x="12" y="10" width="1" height="1" fill="#000"/><rect x="13" y="10" width="2" height="1" fill="#fff"/><rect x="15" y="10" width="1" height="1" fill="#000"/><rect x="2" y="11" width="1" height="1" fill="#000"/><rect x="3" y="11" width="3" height="1" fill="#fff"/><rect x="6" y="11" width="3" height="1" fill="#000"/><rect x="9" y="11" width="3" height="1" fill="#fff"/><rect x="12" y="11" width="4" height="1" fill="#000"/><rect x="2" y="12" width="1" height="1" fill="#000"/><rect x="3" y="12" width="1" height="1" fill="#fff"/><rect x="4" y="12" width="1" height="1" fill="#0030F0"/><rect x="5" y="12" width="2" height="1" fill="#fff"/><rect x="7" y="12" width="1" height="1" fill="#000"/><rect x="8" y="12" width="2" height="1" fill="#fff"/><rect x="10" y="12" width="1" height="1" fill="#00D800"/><rect x="11" y="12" width="1" height="1" fill="#fff"/><rect x="12" y="12" width="1" height="1" fill="#000"/><rect x="2" y="13" width="1" height="1" fill="#000"/><rect x="3" y="13" width="1" height="1" fill="#fff"/><rect x="4" y="13" width="2" height="1" fill="#0030F0"/><rect x="6" y="13" width="3" height="1" fill="#fff"/><rect x="9" y="13" width="2" height="1" fill="#00D800"/><rect x="11" y="13" width="1" height="1" fill="#fff"/><rect x="12" y="13" width="1" height="1" fill="#000"/><rect x="3" y="14" width="1" height="1" fill="#000"/><rect x="4" y="14" width="1" height="1" fill="#fff"/><rect x="5" y="14" width="1" height="1" fill="#0030F0"/><rect x="6" y="14" width="3" height="1" fill="#fff"/><rect x="9" y="14" width="1" height="1" fill="#00D800"/><rect x="10" y="14" width="1" height="1" fill="#fff"/><rect x="11" y="14" width="1" height="1" fill="#000"/><rect x="4" y="15" width="7" height="1" fill="#000"/></svg><div style="left:501px;top:6px;width:21px;height:21px;background:linear-gradient(135deg,#6AA0FF,#2D6BF0 55%,#1C52D8);border:1px solid #fff;border-radius:3px"><div style="left:4px;top:12px;width:7px;height:3px;background:#fff"></div></div><div style="left:524px;top:6px;width:21px;height:21px;background:linear-gradient(135deg,#6AA0FF,#2D6BF0 55%,#1C52D8);border:1px solid #fff;border-radius:3px"><div style="left:4px;top:4px;width:11px;height:11px;border:1px solid #fff;border-top-width:3px"></div></div><div style="left:547px;top:6px;width:21px;height:21px;background:linear-gradient(135deg,#F4A080,#E2582E 55%,#C8401C);border:1px solid #fff;border-radius:3px"><svg style="position:absolute;left:0;top:0" width="19" height="19"><path d="M4.5 4.5 L14.5 14.5 M14.5 4.5 L4.5 14.5" stroke="#fff" stroke-width="2.2"/></svg></div><div style="left:7px;top:33px;width:560px;height:147px;border:3px solid #0A46DA;background:#ECE9D8"></div><div style="left:10px;top:36px;width:554px;height:17px;background:#FFFFE1"></div><div style="left:10px;top:53px;width:554px;height:3px;background:#0A46DA"></div><div class="t" style="left:13px;top:39px;color:#0C44D4;font-weight:bold;font-size:11px;letter-spacing:0.42px;line-height:14px;">Produkty - přehled</div><svg style="position:absolute;left:521px;top:38px;" width="16" height="12" viewBox="0 0 16 12" shape-rendering="crispEdges"><rect x="0.5" y="0.5" width="15" height="11" fill="#E8ECF8" stroke="#0A46DA"/><rect x="2" y="2" width="9" height="3" fill="#fff" stroke="#6070A0" stroke-width="0.6"/><rect x="2" y="7" width="9" height="3" fill="#fff" stroke="#6070A0" stroke-width="0.6"/><rect x="12" y="2" width="2" height="1" fill="#333"/><rect x="12" y="5" width="2" height="1" fill="#333"/><rect x="12" y="8" width="2" height="1" fill="#333"/></svg><svg style="position:absolute;left:542px;top:36px;shape-rendering:auto" width="18" height="17" viewBox="0 0 18 17" shape-rendering="crispEdges"><defs><radialGradient id="ig" cx="0.35" cy="0.3" r="0.8"><stop offset="0" stop-color="#fff"/><stop offset="0.6" stop-color="#D8E4F4"/><stop offset="1" stop-color="#90A8D0"/></radialGradient></defs><circle cx="9" cy="8.5" r="8" fill="url(#ig)" stroke="#8098C0" stroke-width="0.8"/><rect x="7.5" y="7" width="3" height="6" fill="#1030A0"/><rect x="6" y="12" width="6" height="1.5" fill="#1030A0"/><rect x="6" y="7" width="2" height="1" fill="#1030A0"/><circle cx="9" cy="4.5" r="1.5" fill="#1030A0"/></svg><div style="left:14px;top:61px;width:545px;height:112px;background:#fff;border:1px solid;border-color:#A0A090 #FFFFFF #FFFFFF #A0A090;"></div><div style="left:15px;top:62px;width:527px;height:91px;overflow:hidden"><div style="left:0px;top:0px;width:527px;height:91px;background:#fff;border-left:1px solid #D8D4C4;"></div><div style="left:0px;top:0px;width:548px;height:17px;background:#ECE9D8"></div><div style="left:1px;top:0px;width:11px;height:17px;background:#ECE9D8;border-left:1px solid #fff;border-top:1px solid #fff;border-right:1px solid #ACA899"></div><svg style="position:absolute;left:4px;top:3px" width="6" height="11"><path d="M5 0 L1 4 L5 4 Z M1 6 L5 6 L1 10 Z" fill="#1010E0"/></svg><div style="left:12px;top:0px;width:1px;height:17px;background:#000"></div><div style="left:14px;top:0px;width:26px;height:17px;background:#ECE9D8;border-left:1px solid #fff;border-top:1px solid #fff;border-right:1px solid #ACA899"></div><div style="left:39px;top:0px;width:1px;height:17px;background:#404040"></div><div class="t" style="left:16px;top:2px;width:24px;overflow:hidden">Ozn.</div><div style="left:40px;top:0px;width:63px;height:17px;background:#ECE9D8;border-left:1px solid #fff;border-top:1px solid #fff;border-right:1px solid #ACA899"></div><div style="left:102px;top:0px;width:1px;height:17px;background:#404040"></div><div class="t" style="left:42px;top:2px;width:61px;overflow:hidden">Označeni</div><svg style="position:absolute;left:89px;top:7px" width="9" height="5"><path d="M0 0 H9 L4.5 5 Z" fill="#000"/></svg><div style="left:103px;top:0px;width:157px;height:17px;background:#ECE9D8;border-left:1px solid #fff;border-top:1px solid #fff;border-right:1px solid #ACA899"></div><div style="left:259px;top:0px;width:1px;height:17px;background:#404040"></div><div class="t" style="left:105px;top:2px;width:155px;overflow:hidden">Název</div><div style="left:260px;top:0px;width:101px;height:17px;background:#ECE9D8;border-left:1px solid #fff;border-top:1px solid #fff;border-right:1px solid #ACA899"></div><div style="left:360px;top:0px;width:1px;height:17px;background:#404040"></div><div class="t" style="left:262px;top:2px;width:99px;overflow:hidden">Zákl.cena bez DPH</div><div style="left:361px;top:0px;width:85px;height:17px;background:#ECE9D8;border-left:1px solid #fff;border-top:1px solid #fff;border-right:1px solid #ACA899"></div><div style="left:445px;top:0px;width:1px;height:17px;background:#404040"></div><div class="t" style="left:363px;top:2px;width:83px;overflow:hidden">DPH zákl.ceny</div><div style="left:446px;top:0px;width:103px;height:17px;background:#ECE9D8;border-left:1px solid #fff;border-top:1px solid #fff;border-right:1px solid #ACA899"></div><div style="left:548px;top:0px;width:1px;height:17px;background:#404040"></div><div class="t" style="left:448px;top:2px;width:101px;overflow:hidden">Zákl.cena s DPH</div><div style="left:12px;top:17px;width:536px;height:1px;background:#000"></div><div style="left:1px;top:17px;width:11px;height:1px;background:#ACA899"></div><div style="left:1px;top:18px;width:11px;height:18px;background:#ECE9D8;border-left:1px solid #fff;border-top:1px solid #fff;border-right:1px solid #ACA899;border-bottom:1px solid #000"></div><svg style="position:absolute;left:4px;top:21px" width="7" height="12"><path d="M0 0 L6 6 L0 12 Z" fill="#000"/></svg><div style="left:39px;top:18px;width:1px;height:18px;background:#C8C8C8"></div><div style="left:14px;top:18px;width:25px;height:17px;background:#1C5FD6;outline:1px dotted #F0E000;outline-offset:-1px"></div><div style="left:19px;top:20px;width:13px;height:13px;background:#fff;border:1px solid;border-color:#ACA899 #F4F3EE #F4F3EE #ACA899;box-shadow:inset 1px 1px 0 #716F64"></div><div style="left:102px;top:18px;width:1px;height:18px;background:#C8C8C8"></div><div class="t" style="left:42px;top:21px;width:60px;overflow:hidden">A00001</div><div style="left:259px;top:18px;width:1px;height:18px;background:#C8C8C8"></div><div class="t" style="left:105px;top:21px;width:154px;overflow:hidden">Skříň policová úzká</div><div style="left:360px;top:18px;width:1px;height:18px;background:#C8C8C8"></div><div class="t" style="left:260px;top:21px;width:98px;text-align:right;overflow:hidden">825,00</div><div style="left:445px;top:18px;width:1px;height:18px;background:#C8C8C8"></div><div class="t" style="left:361px;top:21px;width:82px;text-align:right;overflow:hidden">165,00</div><div style="left:548px;top:18px;width:1px;height:18px;background:#C8C8C8"></div><div class="t" style="left:446px;top:21px;width:100px;text-align:right;overflow:hidden">990,00</div><div style="left:12px;top:18px;width:536px;height:0px;"></div><div style="left:13px;top:35px;width:536px;height:1px;background:#C8C8C8"></div><div style="left:12px;top:18px;width:1px;height:18px;background:#000"></div><div style="left:1px;top:36px;width:11px;height:18px;background:#ECE9D8;border-left:1px solid #fff;border-top:1px solid #fff;border-right:1px solid #ACA899;border-bottom:1px solid #000"></div><div style="left:39px;top:36px;width:1px;height:18px;background:#C8C8C8"></div><div style="left:19px;top:38px;width:13px;height:13px;background:#fff;border:1px solid;border-color:#ACA899 #F4F3EE #F4F3EE #ACA899;box-shadow:inset 1px 1px 0 #716F64"></div><svg style="position:absolute;left:19px;top:38px" width="13" height="13"><path d="M3 6 L5.5 8.5 L10 3.5" stroke="#000" stroke-width="2" fill="none"/></svg><div style="left:102px;top:36px;width:1px;height:18px;background:#C8C8C8"></div><div class="t" style="left:42px;top:39px;width:60px;overflow:hidden">A00002</div><div style="left:259px;top:36px;width:1px;height:18px;background:#C8C8C8"></div><div class="t" style="left:105px;top:39px;width:154px;overflow:hidden">Skříň šatní</div><div style="left:360px;top:36px;width:1px;height:18px;background:#C8C8C8"></div><div class="t" style="left:260px;top:39px;width:98px;text-align:right;overflow:hidden">2 540,00</div><div style="left:445px;top:36px;width:1px;height:18px;background:#C8C8C8"></div><div class="t" style="left:361px;top:39px;width:82px;text-align:right;overflow:hidden">508,00</div><div style="left:548px;top:36px;width:1px;height:18px;background:#C8C8C8"></div><div class="t" style="left:446px;top:39px;width:100px;text-align:right;overflow:hidden">3 048,00</div><div style="left:12px;top:36px;width:536px;height:0px;"></div><div style="left:13px;top:53px;width:536px;height:1px;background:#C8C8C8"></div><div style="left:12px;top:36px;width:1px;height:18px;background:#000"></div><div style="left:1px;top:54px;width:11px;height:18px;background:#ECE9D8;border-left:1px solid #fff;border-top:1px solid #fff;border-right:1px solid #ACA899;border-bottom:1px solid #000"></div><div style="left:39px;top:54px;width:1px;height:18px;background:#C8C8C8"></div><div style="left:19px;top:56px;width:13px;height:13px;background:#fff;border:1px solid;border-color:#ACA899 #F4F3EE #F4F3EE #ACA899;box-shadow:inset 1px 1px 0 #716F64"></div><div style="left:102px;top:54px;width:1px;height:18px;background:#C8C8C8"></div><div class="t" style="left:42px;top:57px;width:60px;overflow:hidden">A00003</div><div style="left:259px;top:54px;width:1px;height:18px;background:#C8C8C8"></div><div class="t" style="left:105px;top:57px;width:154px;overflow:hidden">Stůl pro PC</div><div style="left:360px;top:54px;width:1px;height:18px;background:#C8C8C8"></div><div class="t" style="left:260px;top:57px;width:98px;text-align:right;overflow:hidden">1 750,00</div><div style="left:445px;top:54px;width:1px;height:18px;background:#C8C8C8"></div><div class="t" style="left:361px;top:57px;width:82px;text-align:right;overflow:hidden">350,00</div><div style="left:548px;top:54px;width:1px;height:18px;background:#C8C8C8"></div><div class="t" style="left:446px;top:57px;width:100px;text-align:right;overflow:hidden">2 100,00</div><div style="left:12px;top:54px;width:536px;height:0px;"></div><div style="left:13px;top:71px;width:536px;height:1px;background:#C8C8C8"></div><div style="left:12px;top:54px;width:1px;height:18px;background:#000"></div><div style="left:1px;top:72px;width:11px;height:18px;background:#ECE9D8;border-left:1px solid #fff;border-top:1px solid #fff;border-right:1px solid #ACA899;border-bottom:1px solid #000"></div><div style="left:39px;top:72px;width:1px;height:18px;background:#C8C8C8"></div><div style="left:19px;top:74px;width:13px;height:13px;background:#fff;border:1px solid;border-color:#ACA899 #F4F3EE #F4F3EE #ACA899;box-shadow:inset 1px 1px 0 #716F64"></div><div style="left:102px;top:72px;width:1px;height:18px;background:#C8C8C8"></div><div class="t" style="left:42px;top:75px;width:60px;overflow:hidden">A00004</div><div style="left:259px;top:72px;width:1px;height:18px;background:#C8C8C8"></div><div class="t" style="left:105px;top:75px;width:154px;overflow:hidden">Dispečerské křeslo Maxima</div><div style="left:360px;top:72px;width:1px;height:18px;background:#C8C8C8"></div><div class="t" style="left:260px;top:75px;width:98px;text-align:right;overflow:hidden">15 500,00</div><div style="left:445px;top:72px;width:1px;height:18px;background:#C8C8C8"></div><div class="t" style="left:361px;top:75px;width:82px;text-align:right;overflow:hidden">3 100,00</div><div style="left:548px;top:72px;width:1px;height:18px;background:#C8C8C8"></div><div class="t" style="left:446px;top:75px;width:100px;text-align:right;overflow:hidden">18 600,00</div><div style="left:12px;top:72px;width:536px;height:0px;"></div><div style="left:13px;top:89px;width:536px;height:1px;background:#C8C8C8"></div><div style="left:12px;top:72px;width:1px;height:18px;background:#000"></div><div style="left:13px;top:34px;width:536px;height:1px;background:#0A246A"></div><div style="left:13px;top:18px;width:536px;height:1px;background:#0A246A"></div></div><div style="left:542px;top:62px;width:16px;height:93px;background:linear-gradient(90deg,#F3F1EC,#FEFEFB 40%,#FEFEFB 60%,#F0EEE6)"></div><div style="left:542px;top:62px;width:16px;height:16px;background:linear-gradient(135deg,#D6E3FE,#B7CBF8);border:1px solid #FFFFFF;border-radius:2px;box-shadow:inset -1px -1px 0 #A3BCF0"></div><svg style="position:absolute;left:542px;top:62px" width="16" height="16"><path d="M4 9 L7.5 5.5 L11 9" stroke="#4D6185" stroke-width="2" fill="none"/></svg><div style="left:542px;top:79px;width:16px;height:10px;background:linear-gradient(135deg,#CDDBFC,#B4C9F7);border:1px solid #FFFFFF;border-radius:2px;box-shadow:inset -1px -1px 0 #A0B8EC"></div><div style="left:542px;top:138px;width:16px;height:16px;background:linear-gradient(135deg,#D6E3FE,#B7CBF8);border:1px solid #FFFFFF;border-radius:2px;box-shadow:inset -1px -1px 0 #A3BCF0"></div><svg style="position:absolute;left:542px;top:138px" width="16" height="16"><path d="M4 6 L7.5 9.5 L11 6" stroke="#4D6185" stroke-width="2" fill="none"/></svg><div style="left:15px;top:156px;width:527px;height:16px;background:linear-gradient(#F3F1EC,#FEFEFB 40%,#FEFEFB 60%,#F0EEE6)"></div><div style="left:16px;top:156px;width:16px;height:16px;background:linear-gradient(135deg,#D6E3FE,#B7CBF8);border:1px solid #FFFFFF;border-radius:2px;box-shadow:inset -1px -1px 0 #A3BCF0"></div><svg style="position:absolute;left:16px;top:156px" width="16" height="16"><path d="M9 4 L5.5 7.5 L9 11" stroke="#4D6185" stroke-width="2" fill="none"/></svg><div style="left:33px;top:156px;width:16px;height:16px;background:linear-gradient(135deg,#CDDBFC,#B4C9F7);border:1px solid #FFFFFF;border-radius:2px;box-shadow:inset -1px -1px 0 #A0B8EC"></div><div style="left:37px;top:160px;width:1px;height:8px;background:#EEF4FE;box-shadow:1px 0 0 #8CA8E8"></div><div style="left:39px;top:160px;width:1px;height:8px;background:#EEF4FE;box-shadow:1px 0 0 #8CA8E8"></div><div style="left:41px;top:160px;width:1px;height:8px;background:#EEF4FE;box-shadow:1px 0 0 #8CA8E8"></div><div style="left:43px;top:160px;width:1px;height:8px;background:#EEF4FE;box-shadow:1px 0 0 #8CA8E8"></div><div style="left:524px;top:156px;width:16px;height:16px;background:linear-gradient(135deg,#D6E3FE,#B7CBF8);border:1px solid #FFFFFF;border-radius:2px;box-shadow:inset -1px -1px 0 #A3BCF0"></div><svg style="position:absolute;left:524px;top:156px" width="16" height="16"><path d="M6 4 L9.5 7.5 L6 11" stroke="#4D6185" stroke-width="2" fill="none"/></svg><div style="left:542px;top:155px;width:16px;height:17px;background:#ECE9D8"></div><svg style="position:absolute;left:11px;top:193px;shape-rendering:auto" width="5" height="9" viewBox="0 0 5 9" shape-rendering="crispEdges"><path d="M5 0 L0 4.5 L5 9 Z" fill="#ACA899"/></svg><div style="left:23px;top:187px;width:59px;height:23px;background:linear-gradient(#F6F5EE,#ECE9D8 60%,#E2DFCE);border:1px solid;border-color:#FFFFFF #9D9A8A #9D9A8A #FFFFFF;box-shadow:inset -1px -1px 0 #CDCAB8"></div><div class="t" style="left:23px;top:193px;width:54px;text-align:center;color:#000">Skupiny</div><div class="t" style="left:74px;top:188px;font-size:9px;line-height:11px;color:#BAB6A8">1</div><div style="left:87px;top:187px;width:45px;height:23px;background:linear-gradient(#F6F5EE,#ECE9D8 60%,#E2DFCE);border:1px solid;border-color:#FFFFFF #9D9A8A #9D9A8A #FFFFFF;box-shadow:inset -1px -1px 0 #CDCAB8"></div><div class="t" style="left:87px;top:193px;width:40px;text-align:center;color:#000">Ceny</div><div class="t" style="left:124px;top:188px;font-size:9px;line-height:11px;color:#BAB6A8">2</div><div style="left:137px;top:187px;width:76px;height:23px;background:linear-gradient(#F6F5EE,#ECE9D8 60%,#E2DFCE);border:1px solid;border-color:#FFFFFF #9D9A8A #9D9A8A #FFFFFF;box-shadow:inset -1px -1px 0 #CDCAB8"></div><div class="t" style="left:137px;top:193px;width:71px;text-align:center;color:#000">Dodavatelé</div><div class="t" style="left:205px;top:188px;font-size:9px;line-height:11px;color:#BAB6A8">3</div><div style="left:218px;top:187px;width:133px;height:23px;background:linear-gradient(#F6F5EE,#ECE9D8 60%,#E2DFCE);border:1px solid;border-color:#FFFFFF #9D9A8A #9D9A8A #FFFFFF;box-shadow:inset -1px -1px 0 #CDCAB8"></div><div class="t" style="left:218px;top:193px;width:128px;text-align:center;color:#000">Objednávky odběratelů</div><div class="t" style="left:343px;top:188px;font-size:9px;line-height:11px;color:#BAB6A8">4</div><div style="left:356px;top:187px;width:141px;height:23px;background:linear-gradient(#F6F5EE,#ECE9D8 60%,#E2DFCE);border:1px solid;border-color:#FFFFFF #9D9A8A #9D9A8A #FFFFFF;box-shadow:inset -1px -1px 0 #CDCAB8"></div><div class="t" style="left:356px;top:193px;width:136px;text-align:center;color:#000">Objednávky u dodavatelů</div><div class="t" style="left:489px;top:188px;font-size:9px;line-height:11px;color:#BAB6A8">5</div><div style="left:502px;top:187px;width:53px;height:23px;background:linear-gradient(#F6F5EE,#ECE9D8 60%,#E2DFCE);border:1px solid;border-color:#FFFFFF #9D9A8A #9D9A8A #FFFFFF;box-shadow:inset -1px -1px 0 #CDCAB8"></div><div class="t" style="left:510px;top:193px;width:42px;overflow:hidden;color:#000">Názvy produktů</div><svg style="position:absolute;left:559px;top:193px;shape-rendering:auto" width="5" height="9" viewBox="0 0 5 9" shape-rendering="crispEdges"><path d="M0 0 L5 4.5 L0 9 Z" fill="#000"/></svg><div style="left:4px;top:216px;width:566px;height:2px;background:#ACA899"></div></div><svg style="position:absolute;left:34px;top:106px;" width="16" height="16" viewBox="0 0 16 16" shape-rendering="crispEdges"><rect x="0" y="0" width="9" height="1" fill="#000"/><rect x="0" y="1" width="1" height="1" fill="#000"/><rect x="1" y="1" width="7" height="1" fill="#00E8F0"/><rect x="8" y="1" width="1" height="1" fill="#000"/><rect x="0" y="2" width="1" height="1" fill="#000"/><rect x="1" y="2" width="4" height="1" fill="#00E8F0"/><rect x="5" y="2" width="2" height="1" fill="#00A0A0"/><rect x="7" y="2" width="1" height="1" fill="#00E8F0"/><rect x="8" y="2" width="1" height="1" fill="#000"/><rect x="10" y="2" width="6" height="1" fill="#000"/><rect x="0" y="3" width="1" height="1" fill="#000"/><rect x="1" y="3" width="4" height="1" fill="#00E8F0"/><rect x="5" y="3" width="3" height="1" fill="#00A0A0"/><rect x="8" y="3" width="1" height="1" fill="#000"/><rect x="10" y="3" width="1" height="1" fill="#000"/><rect x="11" y="3" width="4" height="1" fill="#fff"/><rect x="15" y="3" width="1" height="1" fill="#000"/><rect x="0" y="4" width="1" height="1" fill="#000"/><rect x="1" y="4" width="2" height="1" fill="#00E8F0"/><rect x="3" y="4" width="3" height="1" fill="#00D800"/><rect x="6" y="4" width="2" height="1" fill="#00A0A0"/><rect x="8" y="4" width="1" height="1" fill="#000"/><rect x="10" y="4" width="1" height="1" fill="#000"/><rect x="11" y="4" width="1" height="1" fill="#fff"/><rect x="12" y="4" width="2" height="1" fill="#000"/><rect x="14" y="4" width="1" height="1" fill="#fff"/><rect x="15" y="4" width="1" height="1" fill="#000"/><rect x="0" y="5" width="1" height="1" fill="#000"/><rect x="1" y="5" width="1" height="1" fill="#00E8F0"/><rect x="2" y="5" width="6" height="1" fill="#00D800"/><rect x="8" y="5" width="1" height="1" fill="#000"/><rect x="10" y="5" width="1" height="1" fill="#000"/><rect x="11" y="5" width="4" height="1" fill="#fff"/><rect x="15" y="5" width="1" height="1" fill="#000"/><rect x="0" y="6" width="1" height="1" fill="#000"/><rect x="1" y="6" width="4" height="1" fill="#00D800"/><rect x="5" y="6" width="6" height="1" fill="#000"/><rect x="11" y="6" width="1" height="1" fill="#fff"/><rect x="12" y="6" width="2" height="1" fill="#000"/><rect x="14" y="6" width="1" height="1" fill="#fff"/><rect x="15" y="6" width="1" height="1" fill="#000"/><rect x="0" y="7" width="1" height="1" fill="#000"/><rect x="1" y="7" width="3" height="1" fill="#00D800"/><rect x="4" y="7" width="1" height="1" fill="#000"/><rect x="5" y="7" width="2" height="1" fill="#fff"/><rect x="7" y="7" width="1" height="1" fill="#00D800"/><rect x="8" y="7" width="1" height="1" fill="#fff"/><rect x="9" y="7" width="1" height="1" fill="#0030F0"/><rect x="10" y="7" width="1" height="1" fill="#fff"/><rect x="11" y="7" width="1" height="1" fill="#000"/><rect x="12" y="7" width="3" height="1" fill="#fff"/><rect x="15" y="7" width="1" height="1" fill="#000"/><rect x="0" y="8" width="1" height="1" fill="#000"/><rect x="1" y="8" width="2" height="1" fill="#00D800"/><rect x="3" y="8" width="1" height="1" fill="#000"/><rect x="4" y="8" width="1" height="1" fill="#fff"/><rect x="5" y="8" width="2" height="1" fill="#00D800"/><rect x="7" y="8" width="1" height="1" fill="#fff"/><rect x="8" y="8" width="2" height="1" fill="#0030F0"/><rect x="10" y="8" width="1" height="1" fill="#fff"/><rect x="11" y="8" width="3" height="1" fill="#000"/><rect x="14" y="8" width="1" height="1" fill="#fff"/><rect x="15" y="8" width="1" height="1" fill="#000"/><rect x="0" y="9" width="3" height="1" fill="#000"/><rect x="3" y="9" width="1" height="1" fill="#fff"/><rect x="4" y="9" width="2" height="1" fill="#00D800"/><rect x="6" y="9" width="3" height="1" fill="#fff"/><rect x="9" y="9" width="2" height="1" fill="#0030F0"/><rect x="11" y="9" width="1" height="1" fill="#fff"/><rect x="12" y="9" width="1" height="1" fill="#000"/><rect x="13" y="9" width="2" height="1" fill="#fff"/><rect x="15" y="9" width="1" height="1" fill="#000"/><rect x="2" y="10" width="1" height="1" fill="#000"/><rect x="3" y="10" width="2" height="1" fill="#fff"/><rect x="5" y="10" width="1" height="1" fill="#00D800"/><rect x="6" y="10" width="1" height="1" fill="#fff"/><rect x="7" y="10" width="1" height="1" fill="#000"/><rect x="8" y="10" width="4" height="1" fill="#fff"/><rect x="12" y="10" width="1" height="1" fill="#000"/><rect x="13" y="10" width="2" height="1" fill="#fff"/><rect x="15" y="10" width="1" height="1" fill="#000"/><rect x="2" y="11" width="1" height="1" fill="#000"/><rect x="3" y="11" width="3" height="1" fill="#fff"/><rect x="6" y="11" width="3" height="1" fill="#000"/><rect x="9" y="11" width="3" height="1" fill="#fff"/><rect x="12" y="11" width="4" height="1" fill="#000"/><rect x="2" y="12" width="1" height="1" fill="#000"/><rect x="3" y="12" width="1" height="1" fill="#fff"/><rect x="4" y="12" width="1" height="1" fill="#0030F0"/><rect x="5" y="12" width="2" height="1" fill="#fff"/><rect x="7" y="12" width="1" height="1" fill="#000"/><rect x="8" y="12" width="2" height="1" fill="#fff"/><rect x="10" y="12" width="1" height="1" fill="#00D800"/><rect x="11" y="12" width="1" height="1" fill="#fff"/><rect x="12" y="12" width="1" height="1" fill="#000"/><rect x="2" y="13" width="1" height="1" fill="#000"/><rect x="3" y="13" width="1" height="1" fill="#fff"/><rect x="4" y="13" width="2" height="1" fill="#0030F0"/><rect x="6" y="13" width="3" height="1" fill="#fff"/><rect x="9" y="13" width="2" height="1" fill="#00D800"/><rect x="11" y="13" width="1" height="1" fill="#fff"/><rect x="12" y="13" width="1" height="1" fill="#000"/><rect x="3" y="14" width="1" height="1" fill="#000"/><rect x="4" y="14" width="1" height="1" fill="#fff"/><rect x="5" y="14" width="1" height="1" fill="#0030F0"/><rect x="6" y="14" width="3" height="1" fill="#fff"/><rect x="9" y="14" width="1" height="1" fill="#00D800"/><rect x="10" y="14" width="1" height="1" fill="#fff"/><rect x="11" y="14" width="1" height="1" fill="#000"/><rect x="4" y="15" width="7" height="1" fill="#000"/></svg><div style="left:12px;top:126px;width:61px;height:26px;background:#316AC5"></div><div class="t" style="left:4px;top:126px;width:76px;text-align:center;color:#fff;line-height:13px">Seznam<br>produktů</div><svg style="position:absolute;left:34px;top:163px;" width="16" height="16" viewBox="0 0 16 16" shape-rendering="crispEdges"><rect x="0" y="0" width="16" height="1" fill="#D4D4D4"/><rect x="0" y="1" width="1" height="1" fill="#D4D4D4"/><rect x="1" y="1" width="2" height="1" fill="#0000F8"/><rect x="3" y="1" width="3" height="1" fill="#D4D4D4"/><rect x="6" y="1" width="1" height="1" fill="#0000F8"/><rect x="7" y="1" width="2" height="1" fill="#D4D4D4"/><rect x="9" y="1" width="1" height="1" fill="#0000F8"/><rect x="10" y="1" width="1" height="1" fill="#D4D4D4"/><rect x="11" y="1" width="1" height="1" fill="#0000F8"/><rect x="12" y="1" width="1" height="1" fill="#D4D4D4"/><rect x="13" y="1" width="1" height="1" fill="#0000F8"/><rect x="14" y="1" width="2" height="1" fill="#D4D4D4"/><rect x="0" y="2" width="1" height="1" fill="#D4D4D4"/><rect x="1" y="2" width="1" height="1" fill="#0000F8"/><rect x="2" y="2" width="1" height="1" fill="#D4D4D4"/><rect x="3" y="2" width="1" height="1" fill="#0000F8"/><rect x="4" y="2" width="1" height="1" fill="#D4D4D4"/><rect x="5" y="2" width="1" height="1" fill="#0000F8"/><rect x="6" y="2" width="1" height="1" fill="#D4D4D4"/><rect x="7" y="2" width="1" height="1" fill="#0000F8"/><rect x="8" y="2" width="1" height="1" fill="#D4D4D4"/><rect x="9" y="2" width="2" height="1" fill="#0000F8"/><rect x="11" y="2" width="2" height="1" fill="#D4D4D4"/><rect x="13" y="2" width="1" height="1" fill="#0000F8"/><rect x="14" y="2" width="2" height="1" fill="#D4D4D4"/><rect x="0" y="3" width="1" height="1" fill="#D4D4D4"/><rect x="1" y="3" width="1" height="1" fill="#0000F8"/><rect x="2" y="3" width="1" height="1" fill="#D4D4D4"/><rect x="3" y="3" width="1" height="1" fill="#0000F8"/><rect x="4" y="3" width="1" height="1" fill="#D4D4D4"/><rect x="5" y="3" width="1" height="1" fill="#0000F8"/><rect x="6" y="3" width="1" height="1" fill="#D4D4D4"/><rect x="7" y="3" width="1" height="1" fill="#0000F8"/><rect x="8" y="3" width="1" height="1" fill="#D4D4D4"/><rect x="9" y="3" width="1" height="1" fill="#0000F8"/><rect x="10" y="3" width="3" height="1" fill="#D4D4D4"/><rect x="13" y="3" width="1" height="1" fill="#0000F8"/><rect x="14" y="3" width="2" height="1" fill="#D4D4D4"/><rect x="0" y="4" width="1" height="1" fill="#D4D4D4"/><rect x="1" y="4" width="1" height="1" fill="#0000F8"/><rect x="2" y="4" width="1" height="1" fill="#D4D4D4"/><rect x="3" y="4" width="1" height="1" fill="#0000F8"/><rect x="4" y="4" width="1" height="1" fill="#D4D4D4"/><rect x="5" y="4" width="1" height="1" fill="#0000F8"/><rect x="6" y="4" width="1" height="1" fill="#D4D4D4"/><rect x="7" y="4" width="1" height="1" fill="#0000F8"/><rect x="8" y="4" width="1" height="1" fill="#D4D4D4"/><rect x="9" y="4" width="2" height="1" fill="#0000F8"/><rect x="11" y="4" width="2" height="1" fill="#D4D4D4"/><rect x="13" y="4" width="1" height="1" fill="#0000F8"/><rect x="14" y="4" width="2" height="1" fill="#D4D4D4"/><rect x="0" y="5" width="1" height="1" fill="#D4D4D4"/><rect x="1" y="5" width="2" height="1" fill="#0000F8"/><rect x="3" y="5" width="3" height="1" fill="#D4D4D4"/><rect x="6" y="5" width="1" height="1" fill="#0000F8"/><rect x="7" y="5" width="2" height="1" fill="#D4D4D4"/><rect x="9" y="5" width="1" height="1" fill="#0000F8"/><rect x="10" y="5" width="1" height="1" fill="#D4D4D4"/><rect x="11" y="5" width="1" height="1" fill="#0000F8"/><rect x="12" y="5" width="1" height="1" fill="#D4D4D4"/><rect x="13" y="5" width="3" height="1" fill="#0000F8"/><rect x="0" y="6" width="16" height="1" fill="#D4D4D4"/><rect x="0" y="7" width="7" height="1" fill="#D4D4D4"/><rect x="7" y="7" width="8" height="1" fill="#000"/><rect x="15" y="7" width="1" height="1" fill="#D4D4D4"/><rect x="0" y="8" width="7" height="1" fill="#D4D4D4"/><rect x="7" y="8" width="1" height="1" fill="#000"/><rect x="8" y="8" width="6" height="1" fill="#fff"/><rect x="14" y="8" width="1" height="1" fill="#000"/><rect x="15" y="8" width="1" height="1" fill="#D4D4D4"/><rect x="0" y="9" width="3" height="1" fill="#D4D4D4"/><rect x="3" y="9" width="6" height="1" fill="#000"/><rect x="9" y="9" width="2" height="1" fill="#fff"/><rect x="11" y="9" width="1" height="1" fill="#000"/><rect x="12" y="9" width="2" height="1" fill="#fff"/><rect x="14" y="9" width="1" height="1" fill="#000"/><rect x="15" y="9" width="1" height="1" fill="#D4D4D4"/><rect x="0" y="10" width="3" height="1" fill="#D4D4D4"/><rect x="3" y="10" width="1" height="1" fill="#000"/><rect x="4" y="10" width="4" height="1" fill="#fff"/><rect x="8" y="10" width="1" height="1" fill="#000"/><rect x="9" y="10" width="5" height="1" fill="#fff"/><rect x="14" y="10" width="1" height="1" fill="#000"/><rect x="15" y="10" width="1" height="1" fill="#D4D4D4"/><rect x="0" y="11" width="8" height="1" fill="#000"/><rect x="8" y="11" width="1" height="1" fill="#fff"/><rect x="9" y="11" width="1" height="1" fill="#000"/><rect x="10" y="11" width="2" height="1" fill="#fff"/><rect x="12" y="11" width="1" height="1" fill="#000"/><rect x="13" y="11" width="1" height="1" fill="#fff"/><rect x="14" y="11" width="1" height="1" fill="#000"/><rect x="15" y="11" width="1" height="1" fill="#D4D4D4"/><rect x="0" y="12" width="7" height="1" fill="#fff"/><rect x="7" y="12" width="1" height="1" fill="#000"/><rect x="8" y="12" width="6" height="1" fill="#fff"/><rect x="14" y="12" width="1" height="1" fill="#000"/><rect x="15" y="12" width="1" height="1" fill="#D4D4D4"/><rect x="0" y="13" width="2" height="1" fill="#000"/><rect x="2" y="13" width="1" height="1" fill="#fff"/><rect x="3" y="13" width="2" height="1" fill="#000"/><rect x="5" y="13" width="1" height="1" fill="#fff"/><rect x="6" y="13" width="1" height="1" fill="#000"/><rect x="7" y="13" width="1" height="1" fill="#fff"/><rect x="8" y="13" width="1" height="1" fill="#000"/><rect x="9" y="13" width="2" height="1" fill="#fff"/><rect x="11" y="13" width="1" height="1" fill="#000"/><rect x="12" y="13" width="2" height="1" fill="#fff"/><rect x="14" y="13" width="1" height="1" fill="#000"/><rect x="15" y="13" width="1" height="1" fill="#D4D4D4"/><rect x="0" y="14" width="7" height="1" fill="#fff"/><rect x="7" y="14" width="1" height="1" fill="#000"/><rect x="8" y="14" width="6" height="1" fill="#fff"/><rect x="14" y="14" width="1" height="1" fill="#000"/><rect x="15" y="14" width="1" height="1" fill="#D4D4D4"/><rect x="0" y="15" width="2" height="1" fill="#000"/><rect x="2" y="15" width="1" height="1" fill="#fff"/><rect x="3" y="15" width="2" height="1" fill="#000"/><rect x="5" y="15" width="1" height="1" fill="#fff"/><rect x="6" y="15" width="9" height="1" fill="#000"/><rect x="15" y="15" width="1" height="1" fill="#D4D4D4"/></svg><div class="t" style="left:4px;top:184px;width:76px;text-align:center;color:#FFFFFF;line-height:13px">Obchodní<br>doklady</div><svg style="position:absolute;left:34px;top:220px;" width="16" height="16" viewBox="0 0 16 16" shape-rendering="crispEdges"><rect x="6" y="0" width="6" height="1" fill="#000"/><rect x="5" y="1" width="1" height="1" fill="#000"/><rect x="6" y="1" width="6" height="1" fill="#fff"/><rect x="12" y="1" width="1" height="1" fill="#000"/><rect x="4" y="2" width="7" height="1" fill="#000"/><rect x="11" y="2" width="2" height="1" fill="#fff"/><rect x="13" y="2" width="1" height="1" fill="#000"/><rect x="3" y="3" width="1" height="1" fill="#000"/><rect x="4" y="3" width="7" height="1" fill="#fff"/><rect x="11" y="3" width="1" height="1" fill="#000"/><rect x="12" y="3" width="1" height="1" fill="#fff"/><rect x="13" y="3" width="1" height="1" fill="#000"/><rect x="2" y="4" width="10" height="1" fill="#000"/><rect x="12" y="4" width="1" height="1" fill="#fff"/><rect x="13" y="4" width="1" height="1" fill="#000"/><rect x="14" y="4" width="1" height="1" fill="#00E8E8"/><rect x="2" y="5" width="1" height="1" fill="#000"/><rect x="3" y="5" width="8" height="1" fill="#fff"/><rect x="11" y="5" width="1" height="1" fill="#000"/><rect x="12" y="5" width="1" height="1" fill="#fff"/><rect x="13" y="5" width="1" height="1" fill="#000"/><rect x="14" y="5" width="1" height="1" fill="#00E8E8"/><rect x="15" y="5" width="1" height="1" fill="#000"/><rect x="1" y="6" width="1" height="1" fill="#000"/><rect x="2" y="6" width="1" height="1" fill="#00E8E8"/><rect x="3" y="6" width="1" height="1" fill="#fff"/><rect x="4" y="6" width="10" height="1" fill="#000"/><rect x="14" y="6" width="1" height="1" fill="#00E8E8"/><rect x="15" y="6" width="1" height="1" fill="#000"/><rect x="1" y="7" width="1" height="1" fill="#000"/><rect x="2" y="7" width="2" height="1" fill="#fff"/><rect x="4" y="7" width="1" height="1" fill="#000"/><rect x="5" y="7" width="9" height="1" fill="#fff"/><rect x="14" y="7" width="2" height="1" fill="#000"/><rect x="1" y="8" width="1" height="1" fill="#000"/><rect x="2" y="8" width="2" height="1" fill="#fff"/><rect x="4" y="8" width="1" height="1" fill="#000"/><rect x="5" y="8" width="1" height="1" fill="#fff"/><rect x="6" y="8" width="3" height="1" fill="#000090"/><rect x="9" y="8" width="1" height="1" fill="#fff"/><rect x="10" y="8" width="1" height="1" fill="#000090"/><rect x="11" y="8" width="2" height="1" fill="#fff"/><rect x="13" y="8" width="1" height="1" fill="#000090"/><rect x="14" y="8" width="1" height="1" fill="#000"/><rect x="1" y="9" width="2" height="1" fill="#000"/><rect x="3" y="9" width="1" height="1" fill="#fff"/><rect x="4" y="9" width="1" height="1" fill="#000"/><rect x="5" y="9" width="1" height="1" fill="#fff"/><rect x="6" y="9" width="1" height="1" fill="#000090"/><rect x="7" y="9" width="3" height="1" fill="#fff"/><rect x="10" y="9" width="1" height="1" fill="#000090"/><rect x="11" y="9" width="2" height="1" fill="#fff"/><rect x="13" y="9" width="1" height="1" fill="#000090"/><rect x="14" y="9" width="1" height="1" fill="#000"/><rect x="1" y="10" width="1" height="1" fill="#000"/><rect x="2" y="10" width="2" height="1" fill="#fff"/><rect x="4" y="10" width="1" height="1" fill="#000"/><rect x="5" y="10" width="1" height="1" fill="#fff"/><rect x="6" y="10" width="2" height="1" fill="#000090"/><rect x="8" y="10" width="2" height="1" fill="#fff"/><rect x="10" y="10" width="1" height="1" fill="#000090"/><rect x="11" y="10" width="2" height="1" fill="#fff"/><rect x="13" y="10" width="1" height="1" fill="#000090"/><rect x="14" y="10" width="1" height="1" fill="#000"/><rect x="1" y="11" width="1" height="1" fill="#000"/><rect x="2" y="11" width="2" height="1" fill="#00E8E8"/><rect x="4" y="11" width="1" height="1" fill="#000"/><rect x="5" y="11" width="1" height="1" fill="#fff"/><rect x="6" y="11" width="1" height="1" fill="#000090"/><rect x="7" y="11" width="3" height="1" fill="#fff"/><rect x="10" y="11" width="1" height="1" fill="#000090"/><rect x="11" y="11" width="2" height="1" fill="#fff"/><rect x="13" y="11" width="1" height="1" fill="#000090"/><rect x="14" y="11" width="1" height="1" fill="#000"/><rect x="2" y="12" width="1" height="1" fill="#000"/><rect x="3" y="12" width="1" height="1" fill="#00E8E8"/><rect x="4" y="12" width="1" height="1" fill="#000"/><rect x="5" y="12" width="1" height="1" fill="#fff"/><rect x="6" y="12" width="1" height="1" fill="#000090"/><rect x="7" y="12" width="4" height="1" fill="#fff"/><rect x="11" y="12" width="2" height="1" fill="#000090"/><rect x="13" y="12" width="1" height="1" fill="#fff"/><rect x="14" y="12" width="1" height="1" fill="#000"/><rect x="3" y="13" width="2" height="1" fill="#000"/><rect x="5" y="13" width="9" height="1" fill="#fff"/><rect x="14" y="13" width="1" height="1" fill="#000"/><rect x="4" y="14" width="11" height="1" fill="#000"/></svg><div class="t" style="left:4px;top:240px;width:76px;text-align:center;color:#FFFFFF;line-height:13px">Firmy</div><div style="left:12px;top:58px;width:2px;height:22px;border-left:1px solid #fff;border-right:1px solid #ACA899"></div><div style="left:352px;top:55px;width:2px;height:27px;border-left:1px solid #ACA899;border-right:1px solid #fff"></div><div style="left:358px;top:58px;width:2px;height:22px;border-left:1px solid #fff;border-right:1px solid #ACA899"></div><div style="left:437px;top:55px;width:2px;height:27px;border-left:1px solid #ACA899;border-right:1px solid #fff"></div><div style="left:443px;top:58px;width:2px;height:22px;border-left:1px solid #fff;border-right:1px solid #ACA899"></div><div style="left:548px;top:55px;width:2px;height:27px;border-left:1px solid #ACA899;border-right:1px solid #fff"></div><div style="left:554px;top:58px;width:2px;height:22px;border-left:1px solid #fff;border-right:1px solid #ACA899"></div><div style="left:93px;top:59px;width:2px;height:20px;border-left:1px solid #ACA899;border-right:1px solid #fff"></div><div style="left:220px;top:59px;width:2px;height:20px;border-left:1px solid #ACA899;border-right:1px solid #fff"></div><div style="left:297px;top:59px;width:2px;height:20px;border-left:1px solid #ACA899;border-right:1px solid #fff"></div><svg style="position:absolute;left:22px;top:61px;" width="16" height="16" viewBox="0 0 16 16" shape-rendering="crispEdges"><rect x="2" y="0" width="9" height="1" fill="#000"/><rect x="2" y="1" width="1" height="1" fill="#000"/><rect x="3" y="1" width="7" height="1" fill="#fff"/><rect x="10" y="1" width="2" height="1" fill="#000"/><rect x="2" y="2" width="1" height="1" fill="#000"/><rect x="3" y="2" width="7" height="1" fill="#fff"/><rect x="10" y="2" width="1" height="1" fill="#000"/><rect x="11" y="2" width="1" height="1" fill="#fff"/><rect x="12" y="2" width="1" height="1" fill="#000"/><rect x="2" y="3" width="1" height="1" fill="#000"/><rect x="3" y="3" width="1" height="1" fill="#fff"/><rect x="4" y="3" width="3" height="1" fill="#000080"/><rect x="7" y="3" width="1" height="1" fill="#fff"/><rect x="8" y="3" width="2" height="1" fill="#000080"/><rect x="10" y="3" width="1" height="1" fill="#000"/><rect x="11" y="3" width="2" height="1" fill="#fff"/><rect x="13" y="3" width="1" height="1" fill="#000"/><rect x="2" y="4" width="1" height="1" fill="#000"/><rect x="3" y="4" width="7" height="1" fill="#fff"/><rect x="10" y="4" width="4" height="1" fill="#000"/><rect x="0" y="5" width="16" height="1" fill="#F00000"/><rect x="0" y="6" width="1" height="1" fill="#F00000"/><rect x="2" y="6" width="1" height="1" fill="#000"/><rect x="3" y="6" width="10" height="1" fill="#1090F0"/><rect x="13" y="6" width="1" height="1" fill="#000"/><rect x="15" y="6" width="1" height="1" fill="#F00000"/><rect x="0" y="7" width="1" height="1" fill="#F00000"/><rect x="2" y="7" width="1" height="1" fill="#000"/><rect x="3" y="7" width="1" height="1" fill="#1090F0"/><rect x="4" y="7" width="3" height="1" fill="#000"/><rect x="7" y="7" width="1" height="1" fill="#1090F0"/><rect x="8" y="7" width="3" height="1" fill="#000"/><rect x="11" y="7" width="2" height="1" fill="#1090F0"/><rect x="13" y="7" width="1" height="1" fill="#000"/><rect x="15" y="7" width="1" height="1" fill="#F00000"/><rect x="0" y="8" width="1" height="1" fill="#F00000"/><rect x="2" y="8" width="1" height="1" fill="#000"/><rect x="3" y="8" width="10" height="1" fill="#1090F0"/><rect x="13" y="8" width="1" height="1" fill="#000"/><rect x="15" y="8" width="1" height="1" fill="#F00000"/><rect x="0" y="9" width="1" height="1" fill="#F00000"/><rect x="2" y="9" width="1" height="1" fill="#000"/><rect x="3" y="9" width="1" height="1" fill="#1090F0"/><rect x="4" y="9" width="3" height="1" fill="#000"/><rect x="7" y="9" width="1" height="1" fill="#1090F0"/><rect x="8" y="9" width="3" height="1" fill="#000"/><rect x="11" y="9" width="2" height="1" fill="#1090F0"/><rect x="13" y="9" width="1" height="1" fill="#000"/><rect x="15" y="9" width="1" height="1" fill="#F00000"/><rect x="0" y="10" width="1" height="1" fill="#F00000"/><rect x="2" y="10" width="1" height="1" fill="#000"/><rect x="3" y="10" width="10" height="1" fill="#1090F0"/><rect x="13" y="10" width="1" height="1" fill="#000"/><rect x="15" y="10" width="1" height="1" fill="#F00000"/><rect x="0" y="11" width="16" height="1" fill="#F00000"/><rect x="2" y="12" width="1" height="1" fill="#000"/><rect x="3" y="12" width="10" height="1" fill="#fff"/><rect x="13" y="12" width="1" height="1" fill="#000"/><rect x="2" y="13" width="1" height="1" fill="#000"/><rect x="3" y="13" width="1" height="1" fill="#fff"/><rect x="4" y="13" width="3" height="1" fill="#000080"/><rect x="7" y="13" width="1" height="1" fill="#fff"/><rect x="8" y="13" width="3" height="1" fill="#000080"/><rect x="11" y="13" width="2" height="1" fill="#fff"/><rect x="13" y="13" width="1" height="1" fill="#000"/><rect x="2" y="14" width="1" height="1" fill="#000"/><rect x="3" y="14" width="10" height="1" fill="#fff"/><rect x="13" y="14" width="1" height="1" fill="#000"/><rect x="2" y="15" width="12" height="1" fill="#000"/></svg><svg style="position:absolute;left:45px;top:61px;" width="16" height="16" viewBox="0 0 16 16" shape-rendering="crispEdges"><rect x="5" y="0" width="10" height="1" fill="#000"/><rect x="5" y="1" width="1" height="1" fill="#000"/><rect x="6" y="1" width="8" height="1" fill="#C8ECFF"/><rect x="14" y="1" width="2" height="1" fill="#000"/><rect x="8" y="2" width="1" height="1" fill="#F00000"/><rect x="9" y="2" width="1" height="1" fill="#C8ECFF"/><rect x="10" y="2" width="1" height="1" fill="#000"/><rect x="11" y="2" width="1" height="1" fill="#C8ECFF"/><rect x="12" y="2" width="2" height="1" fill="#000"/><rect x="14" y="2" width="1" height="1" fill="#C8ECFF"/><rect x="15" y="2" width="1" height="1" fill="#000"/><rect x="0" y="3" width="10" height="1" fill="#F00000"/><rect x="10" y="3" width="5" height="1" fill="#C8ECFF"/><rect x="15" y="3" width="1" height="1" fill="#000"/><rect x="8" y="4" width="1" height="1" fill="#F00000"/><rect x="9" y="4" width="1" height="1" fill="#C8ECFF"/><rect x="10" y="4" width="1" height="1" fill="#000"/><rect x="11" y="4" width="1" height="1" fill="#C8ECFF"/><rect x="12" y="4" width="2" height="1" fill="#000"/><rect x="14" y="4" width="1" height="1" fill="#C8ECFF"/><rect x="15" y="4" width="1" height="1" fill="#000"/><rect x="4" y="5" width="4" height="1" fill="#000"/><rect x="8" y="5" width="1" height="1" fill="#F00000"/><rect x="9" y="5" width="6" height="1" fill="#C8ECFF"/><rect x="15" y="5" width="1" height="1" fill="#000"/><rect x="3" y="6" width="1" height="1" fill="#000"/><rect x="4" y="6" width="4" height="1" fill="#fff"/><rect x="8" y="6" width="3" height="1" fill="#000"/><rect x="11" y="6" width="1" height="1" fill="#C8ECFF"/><rect x="12" y="6" width="2" height="1" fill="#000"/><rect x="14" y="6" width="1" height="1" fill="#C8ECFF"/><rect x="15" y="6" width="1" height="1" fill="#000"/><rect x="2" y="7" width="1" height="1" fill="#000"/><rect x="3" y="7" width="6" height="1" fill="#fff"/><rect x="9" y="7" width="1" height="1" fill="#000"/><rect x="10" y="7" width="5" height="1" fill="#C8ECFF"/><rect x="15" y="7" width="1" height="1" fill="#000"/><rect x="2" y="8" width="1" height="1" fill="#000"/><rect x="3" y="8" width="6" height="1" fill="#fff"/><rect x="9" y="8" width="1" height="1" fill="#000"/><rect x="10" y="8" width="1" height="1" fill="#C8ECFF"/><rect x="11" y="8" width="3" height="1" fill="#000"/><rect x="14" y="8" width="1" height="1" fill="#C8ECFF"/><rect x="15" y="8" width="1" height="1" fill="#000"/><rect x="2" y="9" width="1" height="1" fill="#000"/><rect x="3" y="9" width="4" height="1" fill="#fff"/><rect x="7" y="9" width="1" height="1" fill="#F00000"/><rect x="8" y="9" width="1" height="1" fill="#fff"/><rect x="9" y="9" width="1" height="1" fill="#000"/><rect x="10" y="9" width="5" height="1" fill="#C8ECFF"/><rect x="15" y="9" width="1" height="1" fill="#000"/><rect x="2" y="10" width="1" height="1" fill="#000"/><rect x="3" y="10" width="3" height="1" fill="#fff"/><rect x="6" y="10" width="2" height="1" fill="#F00000"/><rect x="8" y="10" width="1" height="1" fill="#fff"/><rect x="9" y="10" width="1" height="1" fill="#000"/><rect x="10" y="10" width="1" height="1" fill="#C8ECFF"/><rect x="11" y="10" width="3" height="1" fill="#000"/><rect x="14" y="10" width="1" height="1" fill="#C8ECFF"/><rect x="15" y="10" width="1" height="1" fill="#000"/><rect x="2" y="11" width="1" height="1" fill="#000"/><rect x="3" y="11" width="2" height="1" fill="#fff"/><rect x="5" y="11" width="9" height="1" fill="#F00000"/><rect x="14" y="11" width="1" height="1" fill="#C8ECFF"/><rect x="15" y="11" width="1" height="1" fill="#000"/><rect x="2" y="12" width="1" height="1" fill="#000"/><rect x="3" y="12" width="3" height="1" fill="#fff"/><rect x="6" y="12" width="2" height="1" fill="#F00000"/><rect x="8" y="12" width="1" height="1" fill="#fff"/><rect x="9" y="12" width="1" height="1" fill="#000"/><rect x="10" y="12" width="5" height="1" fill="#C8ECFF"/><rect x="15" y="12" width="1" height="1" fill="#000"/><rect x="2" y="13" width="1" height="1" fill="#000"/><rect x="3" y="13" width="4" height="1" fill="#fff"/><rect x="7" y="13" width="1" height="1" fill="#F00000"/><rect x="8" y="13" width="1" height="1" fill="#fff"/><rect x="9" y="13" width="7" height="1" fill="#000"/><rect x="2" y="14" width="1" height="1" fill="#000"/><rect x="3" y="14" width="6" height="1" fill="#fff"/><rect x="9" y="14" width="1" height="1" fill="#000"/><rect x="2" y="15" width="8" height="1" fill="#000"/></svg><svg style="position:absolute;left:70px;top:61px;" width="16" height="16" viewBox="0 0 16 16" shape-rendering="crispEdges"><rect x="1" y="3" width="1" height="1" fill="#000"/><rect x="4" y="3" width="1" height="1" fill="#F00000"/><rect x="5" y="3" width="1" height="1" fill="#800000"/><rect x="12" y="3" width="1" height="1" fill="#00E000"/><rect x="13" y="3" width="1" height="1" fill="#800000"/><rect x="1" y="4" width="1" height="1" fill="#000"/><rect x="3" y="4" width="2" height="1" fill="#F00000"/><rect x="5" y="4" width="1" height="1" fill="#800000"/><rect x="12" y="4" width="1" height="1" fill="#00E000"/><rect x="13" y="4" width="1" height="1" fill="#800000"/><rect x="1" y="5" width="1" height="1" fill="#000"/><rect x="3" y="5" width="2" height="1" fill="#F00000"/><rect x="5" y="5" width="1" height="1" fill="#800000"/><rect x="11" y="5" width="2" height="1" fill="#00E000"/><rect x="13" y="5" width="1" height="1" fill="#800000"/><rect x="1" y="6" width="1" height="1" fill="#000"/><rect x="3" y="6" width="2" height="1" fill="#F00000"/><rect x="5" y="6" width="1" height="1" fill="#800000"/><rect x="11" y="6" width="2" height="1" fill="#00E000"/><rect x="13" y="6" width="1" height="1" fill="#800000"/><rect x="1" y="7" width="1" height="1" fill="#000"/><rect x="3" y="7" width="2" height="1" fill="#F00000"/><rect x="5" y="7" width="1" height="1" fill="#800000"/><rect x="8" y="7" width="1" height="1" fill="#0000F0"/><rect x="9" y="7" width="1" height="1" fill="#800000"/><rect x="11" y="7" width="2" height="1" fill="#00E000"/><rect x="13" y="7" width="1" height="1" fill="#800000"/><rect x="1" y="8" width="1" height="1" fill="#000"/><rect x="3" y="8" width="2" height="1" fill="#F00000"/><rect x="5" y="8" width="1" height="1" fill="#800000"/><rect x="7" y="8" width="2" height="1" fill="#0000F0"/><rect x="9" y="8" width="1" height="1" fill="#800000"/><rect x="11" y="8" width="2" height="1" fill="#00E000"/><rect x="13" y="8" width="1" height="1" fill="#800000"/><rect x="1" y="9" width="1" height="1" fill="#000"/><rect x="3" y="9" width="2" height="1" fill="#F00000"/><rect x="5" y="9" width="1" height="1" fill="#800000"/><rect x="7" y="9" width="2" height="1" fill="#0000F0"/><rect x="9" y="9" width="1" height="1" fill="#800000"/><rect x="11" y="9" width="2" height="1" fill="#00E000"/><rect x="13" y="9" width="1" height="1" fill="#800000"/><rect x="1" y="10" width="1" height="1" fill="#000"/><rect x="3" y="10" width="2" height="1" fill="#F00000"/><rect x="5" y="10" width="1" height="1" fill="#800000"/><rect x="7" y="10" width="2" height="1" fill="#0000F0"/><rect x="9" y="10" width="1" height="1" fill="#800000"/><rect x="11" y="10" width="2" height="1" fill="#00E000"/><rect x="13" y="10" width="1" height="1" fill="#800000"/><rect x="1" y="11" width="1" height="1" fill="#000"/><rect x="3" y="11" width="2" height="1" fill="#F00000"/><rect x="5" y="11" width="1" height="1" fill="#800000"/><rect x="7" y="11" width="2" height="1" fill="#0000F0"/><rect x="9" y="11" width="1" height="1" fill="#800000"/><rect x="11" y="11" width="2" height="1" fill="#00E000"/><rect x="13" y="11" width="1" height="1" fill="#800000"/><rect x="1" y="12" width="1" height="1" fill="#000"/><rect x="3" y="12" width="2" height="1" fill="#F00000"/><rect x="7" y="12" width="2" height="1" fill="#0000F0"/><rect x="11" y="12" width="2" height="1" fill="#00E000"/><rect x="1" y="13" width="14" height="1" fill="#000"/></svg><svg style="position:absolute;left:104px;top:61px;" width="16" height="16" viewBox="0 0 16 16" shape-rendering="crispEdges"><rect x="0" y="1" width="3" height="13" fill="#ACA899"/><path d="M12 1 L4 7.5 L12 14Z" fill="#ACA899"/></svg><svg style="position:absolute;left:129px;top:61px;" width="16" height="16" viewBox="0 0 16 16" shape-rendering="crispEdges"><path d="M8 1 L1 7.5 L8 14Z" fill="#ACA899"/></svg><svg style="position:absolute;left:154px;top:61px;shape-rendering:auto" width="16" height="16" viewBox="0 0 16 16" shape-rendering="crispEdges"><path d="M0.5 0.5 L7.5 7.5 L0.5 14.5Z" fill="#4A80F0" stroke="#001880"/></svg><svg style="position:absolute;left:176px;top:61px;shape-rendering:auto" width="16" height="16" viewBox="0 0 16 16" shape-rendering="crispEdges"><path d="M0.5 0.5 L7.5 7.5 L0.5 14.5Z" fill="#4A80F0" stroke="#001880"/><rect x="9.5" y="0.5" width="3" height="14" fill="#4A80F0" stroke="#001880"/></svg><svg style="position:absolute;left:199px;top:61px;" width="16" height="16" viewBox="0 0 16 16" shape-rendering="crispEdges"><rect x="5" y="2" width="4" height="1" fill="#1A86FF"/><rect x="12" y="2" width="2" height="1" fill="#000060"/><rect x="3" y="3" width="8" height="1" fill="#1A86FF"/><rect x="12" y="3" width="2" height="1" fill="#000060"/><rect x="2" y="4" width="2" height="1" fill="#1A86FF"/><rect x="4" y="4" width="1" height="1" fill="#5A3CF0"/><rect x="5" y="4" width="3" height="1" fill="#102080"/><rect x="8" y="4" width="2" height="1" fill="#1A86FF"/><rect x="10" y="4" width="1" height="1" fill="#5A3CF0"/><rect x="11" y="4" width="1" height="1" fill="#0010E0"/><rect x="12" y="4" width="2" height="1" fill="#000060"/><rect x="2" y="5" width="1" height="1" fill="#1A86FF"/><rect x="3" y="5" width="2" height="1" fill="#5A3CF0"/><rect x="5" y="5" width="1" height="1" fill="#F4F4FF"/><rect x="8" y="5" width="1" height="1" fill="#1A86FF"/><rect x="9" y="5" width="1" height="1" fill="#5A3CF0"/><rect x="10" y="5" width="3" height="1" fill="#0010E0"/><rect x="13" y="5" width="1" height="1" fill="#000060"/><rect x="1" y="6" width="2" height="1" fill="#1A86FF"/><rect x="3" y="6" width="1" height="1" fill="#5A3CF0"/><rect x="4" y="6" width="1" height="1" fill="#F4F4FF"/><rect x="8" y="6" width="1" height="1" fill="#5A3CF0"/><rect x="9" y="6" width="4" height="1" fill="#0010E0"/><rect x="13" y="6" width="1" height="1" fill="#000060"/><rect x="1" y="7" width="1" height="1" fill="#1A86FF"/><rect x="2" y="7" width="2" height="1" fill="#5A3CF0"/><rect x="4" y="7" width="1" height="1" fill="#F4F4FF"/><rect x="7" y="7" width="6" height="1" fill="#0010E0"/><rect x="13" y="7" width="1" height="1" fill="#000060"/><rect x="2" y="8" width="2" height="1" fill="#0010E0"/><rect x="4" y="8" width="1" height="1" fill="#F4F4FF"/><rect x="2" y="9" width="3" height="1" fill="#0010E0"/><rect x="3" y="10" width="3" height="1" fill="#0010E0"/><rect x="4" y="11" width="4" height="1" fill="#0010E0"/></svg><svg style="position:absolute;left:228px;top:61px;" width="16" height="16" viewBox="0 0 16 16" shape-rendering="crispEdges"><path d="M0.5 0.5 H8 L12.5 5 V15.5 H0.5 Z" fill="#E8F0FF" stroke="#000010"/><path d="M8 0.5 V5 H12.5" fill="#fff" stroke="#000010"/><rect x="3" y="10" width="7" height="1.4" fill="#0020A0"/><rect x="5.8" y="7" width="1.4" height="7" fill="#0020A0"/></svg><svg style="position:absolute;left:251px;top:61px;shape-rendering:auto" width="16" height="16" viewBox="0 0 16 16" shape-rendering="crispEdges"><path d="M1.5 0.5 H9 L13.5 5 V15.5 H1.5 Z" fill="#E8F0FF" stroke="#000010"/><path d="M1 1 L14 15 M14 1 L1 15" stroke="#0030B0" stroke-width="2"/></svg><svg style="position:absolute;left:276px;top:61px;shape-rendering:auto" width="16" height="16" viewBox="0 0 16 16" shape-rendering="crispEdges"><path d="M0.5 0.5 H8 L12.5 5 V15.5 H0.5 Z" fill="#E8F0FF" stroke="#000010"/><path d="M4 13 L14 3 L16 5 L6 15 Z" fill="#3080F0" stroke="#0030A0" stroke-width="0.8"/><path d="M4 13 L3 16 L6 15Z" fill="#E02020"/></svg><svg style="position:absolute;left:305px;top:61px;shape-rendering:auto" width="16" height="16" viewBox="0 0 16 16" shape-rendering="crispEdges"><path d="M2 2 L13 13 M13 2 L2 13" stroke="#ACA899" stroke-width="2"/></svg><svg style="position:absolute;left:329px;top:61px;shape-rendering:auto" width="16" height="16" viewBox="0 0 16 16" shape-rendering="crispEdges"><path d="M1 8 L5 12 L14 2" stroke="#ACA899" stroke-width="2.6" fill="none"/></svg><svg style="position:absolute;left:369px;top:61px;" width="16" height="16" viewBox="0 0 16 16" shape-rendering="crispEdges"><rect x="0.5" y="0.5" width="8" height="10" fill="#F4F2EA" stroke="#ACA899"/><rect x="6.5" y="5.5" width="8" height="10" fill="#F4F2EA" stroke="#ACA899"/><rect x="8" y="8" width="5" height="1" fill="#ACA899"/><rect x="8" y="10" width="5" height="1" fill="#ACA899"/><rect x="8" y="12" width="5" height="1" fill="#ACA899"/></svg><svg style="position:absolute;left:393px;top:61px;shape-rendering:auto" width="16" height="16" viewBox="0 0 16 16" shape-rendering="crispEdges"><path d="M4 1 L7 9 M10 1 L7 9" stroke="#ACA899" stroke-width="1.2"/><circle cx="5" cy="12" r="2.5" fill="none" stroke="#ACA899" stroke-width="1.3"/><circle cx="10" cy="12" r="2.5" fill="none" stroke="#ACA899" stroke-width="1.3"/></svg><svg style="position:absolute;left:414px;top:61px;" width="16" height="16" viewBox="0 0 16 16" shape-rendering="crispEdges"><rect x="0" y="2" width="13" height="13" rx="2" fill="#ACA899"/><rect x="4" y="0" width="5" height="3" fill="#ACA899"/><rect x="7.5" y="8.5" width="8" height="7" fill="#F4F2EA" stroke="#ACA899"/><rect x="9" y="11" width="5" height="1" fill="#ACA899"/></svg><svg style="position:absolute;left:453px;top:61px;" width="16" height="16" viewBox="0 0 16 16" shape-rendering="crispEdges"><path d="M1 9 L3 4 L6 4 L7 8 L9 8 L10 4 L13 4 L15 9 L15 15 L10 15 L9 11 L7 11 L6 15 L1 15Z" fill="#000"/><rect x="3" y="1" width="3" height="3" fill="#000"/><rect x="10" y="1" width="3" height="3" fill="#000"/><rect x="3" y="10" width="2" height="2" fill="#fff"/><rect x="11" y="10" width="2" height="2" fill="#fff"/></svg><svg style="position:absolute;left:476px;top:61px;" width="16" height="16" viewBox="0 0 16 16" shape-rendering="crispEdges"><rect x="5.5" y="0.5" width="10" height="10" fill="#fff" stroke="#1060E0"/><rect x="6" y="1" width="9" height="2" fill="#2080F0"/><rect x="0.5" y="5.5" width="10" height="10" fill="#fff" stroke="#003090"/><rect x="1" y="6" width="9" height="2" fill="#2070E0"/><path d="M2.5 11.5 L4.5 13.5 L8 9.5" stroke="#000" stroke-width="1.5" fill="none"/></svg><svg style="position:absolute;left:499px;top:61px;" width="16" height="16" viewBox="0 0 16 16" shape-rendering="crispEdges"><rect x="6.5" y="0.5" width="9" height="9" fill="#fff" stroke="#1060E0"/><rect x="7" y="1" width="8" height="2" fill="#2080F0"/><rect x="3.5" y="3.5" width="9" height="9" fill="#fff" stroke="#1060E0"/><rect x="4" y="4" width="8" height="2" fill="#2080F0"/><rect x="0.5" y="6.5" width="9" height="9" fill="#fff" stroke="#003090"/><rect x="1" y="7" width="8" height="2" fill="#2070E0"/><path d="M2.5 11.5 L4.5 13.5 L8 9.5" stroke="#000" stroke-width="1.5" fill="none"/></svg><svg style="position:absolute;left:522px;top:61px;" width="16" height="16" viewBox="0 0 16 16" shape-rendering="crispEdges"><rect x="6.5" y="0.5" width="9" height="9" fill="#fff" stroke="#1060E0"/><rect x="7" y="1" width="8" height="2" fill="#2080F0"/><rect x="3.5" y="3.5" width="9" height="9" fill="#fff" stroke="#1060E0"/><rect x="4" y="4" width="8" height="2" fill="#2080F0"/><rect x="0.5" y="6.5" width="9" height="9" fill="#fff" stroke="#003090"/><rect x="1" y="7" width="8" height="2" fill="#2070E0"/></svg><svg style="position:absolute;left:564px;top:61px;" width="16" height="16" viewBox="0 0 16 16" shape-rendering="crispEdges"><rect x="6" y="0" width="6" height="1" fill="#000"/><rect x="5" y="1" width="1" height="1" fill="#000"/><rect x="6" y="1" width="6" height="1" fill="#fff"/><rect x="12" y="1" width="1" height="1" fill="#000"/><rect x="4" y="2" width="7" height="1" fill="#000"/><rect x="11" y="2" width="2" height="1" fill="#fff"/><rect x="13" y="2" width="1" height="1" fill="#000"/><rect x="3" y="3" width="1" height="1" fill="#000"/><rect x="4" y="3" width="7" height="1" fill="#fff"/><rect x="11" y="3" width="1" height="1" fill="#000"/><rect x="12" y="3" width="1" height="1" fill="#fff"/><rect x="13" y="3" width="1" height="1" fill="#000"/><rect x="2" y="4" width="10" height="1" fill="#000"/><rect x="12" y="4" width="1" height="1" fill="#fff"/><rect x="13" y="4" width="1" height="1" fill="#000"/><rect x="14" y="4" width="1" height="1" fill="#00E8E8"/><rect x="2" y="5" width="1" height="1" fill="#000"/><rect x="3" y="5" width="8" height="1" fill="#fff"/><rect x="11" y="5" width="1" height="1" fill="#000"/><rect x="12" y="5" width="1" height="1" fill="#fff"/><rect x="13" y="5" width="1" height="1" fill="#000"/><rect x="14" y="5" width="1" height="1" fill="#00E8E8"/><rect x="15" y="5" width="1" height="1" fill="#000"/><rect x="1" y="6" width="1" height="1" fill="#000"/><rect x="2" y="6" width="1" height="1" fill="#00E8E8"/><rect x="3" y="6" width="1" height="1" fill="#fff"/><rect x="4" y="6" width="10" height="1" fill="#000"/><rect x="14" y="6" width="1" height="1" fill="#00E8E8"/><rect x="15" y="6" width="1" height="1" fill="#000"/><rect x="1" y="7" width="1" height="1" fill="#000"/><rect x="2" y="7" width="2" height="1" fill="#fff"/><rect x="4" y="7" width="1" height="1" fill="#000"/><rect x="5" y="7" width="9" height="1" fill="#fff"/><rect x="14" y="7" width="2" height="1" fill="#000"/><rect x="1" y="8" width="1" height="1" fill="#000"/><rect x="2" y="8" width="2" height="1" fill="#fff"/><rect x="4" y="8" width="1" height="1" fill="#000"/><rect x="5" y="8" width="1" height="1" fill="#fff"/><rect x="6" y="8" width="3" height="1" fill="#000090"/><rect x="9" y="8" width="1" height="1" fill="#fff"/><rect x="10" y="8" width="1" height="1" fill="#000090"/><rect x="11" y="8" width="2" height="1" fill="#fff"/><rect x="13" y="8" width="1" height="1" fill="#000090"/><rect x="14" y="8" width="1" height="1" fill="#000"/><rect x="1" y="9" width="2" height="1" fill="#000"/><rect x="3" y="9" width="1" height="1" fill="#fff"/><rect x="4" y="9" width="1" height="1" fill="#000"/><rect x="5" y="9" width="1" height="1" fill="#fff"/><rect x="6" y="9" width="1" height="1" fill="#000090"/><rect x="7" y="9" width="3" height="1" fill="#fff"/><rect x="10" y="9" width="1" height="1" fill="#000090"/><rect x="11" y="9" width="2" height="1" fill="#fff"/><rect x="13" y="9" width="1" height="1" fill="#000090"/><rect x="14" y="9" width="1" height="1" fill="#000"/><rect x="1" y="10" width="1" height="1" fill="#000"/><rect x="2" y="10" width="2" height="1" fill="#fff"/><rect x="4" y="10" width="1" height="1" fill="#000"/><rect x="5" y="10" width="1" height="1" fill="#fff"/><rect x="6" y="10" width="2" height="1" fill="#000090"/><rect x="8" y="10" width="2" height="1" fill="#fff"/><rect x="10" y="10" width="1" height="1" fill="#000090"/><rect x="11" y="10" width="2" height="1" fill="#fff"/><rect x="13" y="10" width="1" height="1" fill="#000090"/><rect x="14" y="10" width="1" height="1" fill="#000"/><rect x="1" y="11" width="1" height="1" fill="#000"/><rect x="2" y="11" width="2" height="1" fill="#00E8E8"/><rect x="4" y="11" width="1" height="1" fill="#000"/><rect x="5" y="11" width="1" height="1" fill="#fff"/><rect x="6" y="11" width="1" height="1" fill="#000090"/><rect x="7" y="11" width="3" height="1" fill="#fff"/><rect x="10" y="11" width="1" height="1" fill="#000090"/><rect x="11" y="11" width="2" height="1" fill="#fff"/><rect x="13" y="11" width="1" height="1" fill="#000090"/><rect x="14" y="11" width="1" height="1" fill="#000"/><rect x="2" y="12" width="1" height="1" fill="#000"/><rect x="3" y="12" width="1" height="1" fill="#00E8E8"/><rect x="4" y="12" width="1" height="1" fill="#000"/><rect x="5" y="12" width="1" height="1" fill="#fff"/><rect x="6" y="12" width="1" height="1" fill="#000090"/><rect x="7" y="12" width="4" height="1" fill="#fff"/><rect x="11" y="12" width="2" height="1" fill="#000090"/><rect x="13" y="12" width="1" height="1" fill="#fff"/><rect x="14" y="12" width="1" height="1" fill="#000"/><rect x="3" y="13" width="2" height="1" fill="#000"/><rect x="5" y="13" width="9" height="1" fill="#fff"/><rect x="14" y="13" width="1" height="1" fill="#000"/><rect x="4" y="14" width="11" height="1" fill="#000"/></svg><svg style="position:absolute;left:587px;top:61px;" width="16" height="16" viewBox="0 0 16 16" shape-rendering="crispEdges"><rect x="6" y="0" width="6" height="1" fill="#000"/><rect x="5" y="1" width="1" height="1" fill="#000"/><rect x="6" y="1" width="6" height="1" fill="#fff"/><rect x="12" y="1" width="1" height="1" fill="#000"/><rect x="4" y="2" width="7" height="1" fill="#000"/><rect x="11" y="2" width="2" height="1" fill="#fff"/><rect x="13" y="2" width="1" height="1" fill="#000"/><rect x="3" y="3" width="1" height="1" fill="#000"/><rect x="4" y="3" width="7" height="1" fill="#fff"/><rect x="11" y="3" width="1" height="1" fill="#000"/><rect x="12" y="3" width="1" height="1" fill="#fff"/><rect x="13" y="3" width="1" height="1" fill="#000"/><rect x="2" y="4" width="10" height="1" fill="#000"/><rect x="12" y="4" width="1" height="1" fill="#fff"/><rect x="13" y="4" width="1" height="1" fill="#000"/><rect x="14" y="4" width="1" height="1" fill="#00E8E8"/><rect x="2" y="5" width="1" height="1" fill="#000"/><rect x="3" y="5" width="8" height="1" fill="#fff"/><rect x="11" y="5" width="1" height="1" fill="#000"/><rect x="12" y="5" width="1" height="1" fill="#fff"/><rect x="13" y="5" width="1" height="1" fill="#000"/><rect x="14" y="5" width="1" height="1" fill="#00E8E8"/><rect x="15" y="5" width="1" height="1" fill="#000"/><rect x="1" y="6" width="1" height="1" fill="#000"/><rect x="2" y="6" width="1" height="1" fill="#00E8E8"/><rect x="3" y="6" width="1" height="1" fill="#fff"/><rect x="4" y="6" width="10" height="1" fill="#000"/><rect x="14" y="6" width="1" height="1" fill="#00E8E8"/><rect x="15" y="6" width="1" height="1" fill="#000"/><rect x="1" y="7" width="1" height="1" fill="#000"/><rect x="2" y="7" width="2" height="1" fill="#fff"/><rect x="4" y="7" width="1" height="1" fill="#000"/><rect x="5" y="7" width="9" height="1" fill="#fff"/><rect x="14" y="7" width="2" height="1" fill="#000"/><rect x="1" y="8" width="1" height="1" fill="#000"/><rect x="2" y="8" width="2" height="1" fill="#fff"/><rect x="4" y="8" width="1" height="1" fill="#000"/><rect x="5" y="8" width="2" height="1" fill="#fff"/><rect x="7" y="8" width="1" height="1" fill="#000090"/><rect x="8" y="8" width="3" height="1" fill="#fff"/><rect x="11" y="8" width="2" height="1" fill="#000090"/><rect x="13" y="8" width="1" height="1" fill="#fff"/><rect x="14" y="8" width="1" height="1" fill="#000"/><rect x="1" y="9" width="2" height="1" fill="#000"/><rect x="3" y="9" width="1" height="1" fill="#fff"/><rect x="4" y="9" width="1" height="1" fill="#000"/><rect x="5" y="9" width="1" height="1" fill="#fff"/><rect x="6" y="9" width="1" height="1" fill="#000090"/><rect x="7" y="9" width="1" height="1" fill="#fff"/><rect x="8" y="9" width="1" height="1" fill="#000090"/><rect x="9" y="9" width="1" height="1" fill="#fff"/><rect x="10" y="9" width="1" height="1" fill="#000090"/><rect x="11" y="9" width="3" height="1" fill="#fff"/><rect x="14" y="9" width="1" height="1" fill="#000"/><rect x="1" y="10" width="1" height="1" fill="#000"/><rect x="2" y="10" width="2" height="1" fill="#fff"/><rect x="4" y="10" width="1" height="1" fill="#000"/><rect x="5" y="10" width="1" height="1" fill="#fff"/><rect x="6" y="10" width="1" height="1" fill="#000090"/><rect x="7" y="10" width="1" height="1" fill="#fff"/><rect x="8" y="10" width="1" height="1" fill="#000090"/><rect x="9" y="10" width="2" height="1" fill="#fff"/><rect x="11" y="10" width="1" height="1" fill="#000090"/><rect x="12" y="10" width="2" height="1" fill="#fff"/><rect x="14" y="10" width="1" height="1" fill="#000"/><rect x="1" y="11" width="1" height="1" fill="#000"/><rect x="2" y="11" width="2" height="1" fill="#00E8E8"/><rect x="4" y="11" width="1" height="1" fill="#000"/><rect x="5" y="11" width="1" height="1" fill="#fff"/><rect x="6" y="11" width="1" height="1" fill="#000090"/><rect x="7" y="11" width="1" height="1" fill="#fff"/><rect x="8" y="11" width="1" height="1" fill="#000090"/><rect x="9" y="11" width="3" height="1" fill="#fff"/><rect x="12" y="11" width="1" height="1" fill="#000090"/><rect x="13" y="11" width="1" height="1" fill="#fff"/><rect x="14" y="11" width="1" height="1" fill="#000"/><rect x="2" y="12" width="1" height="1" fill="#000"/><rect x="3" y="12" width="1" height="1" fill="#00E8E8"/><rect x="4" y="12" width="1" height="1" fill="#000"/><rect x="5" y="12" width="2" height="1" fill="#fff"/><rect x="7" y="12" width="1" height="1" fill="#000090"/><rect x="8" y="12" width="2" height="1" fill="#fff"/><rect x="10" y="12" width="2" height="1" fill="#000090"/><rect x="12" y="12" width="2" height="1" fill="#fff"/><rect x="14" y="12" width="1" height="1" fill="#000"/><rect x="3" y="13" width="2" height="1" fill="#000"/><rect x="5" y="13" width="9" height="1" fill="#fff"/><rect x="14" y="13" width="1" height="1" fill="#000"/><rect x="4" y="14" width="11" height="1" fill="#000"/></svg><svg style="position:absolute;left:610px;top:61px;" width="16" height="16" viewBox="0 0 16 16" shape-rendering="crispEdges"><rect x="0" y="0" width="16" height="1" fill="#D4D4D4"/><rect x="0" y="1" width="1" height="1" fill="#D4D4D4"/><rect x="1" y="1" width="2" height="1" fill="#0000F8"/><rect x="3" y="1" width="3" height="1" fill="#D4D4D4"/><rect x="6" y="1" width="1" height="1" fill="#0000F8"/><rect x="7" y="1" width="2" height="1" fill="#D4D4D4"/><rect x="9" y="1" width="1" height="1" fill="#0000F8"/><rect x="10" y="1" width="1" height="1" fill="#D4D4D4"/><rect x="11" y="1" width="1" height="1" fill="#0000F8"/><rect x="12" y="1" width="1" height="1" fill="#D4D4D4"/><rect x="13" y="1" width="1" height="1" fill="#0000F8"/><rect x="14" y="1" width="2" height="1" fill="#D4D4D4"/><rect x="0" y="2" width="1" height="1" fill="#D4D4D4"/><rect x="1" y="2" width="1" height="1" fill="#0000F8"/><rect x="2" y="2" width="1" height="1" fill="#D4D4D4"/><rect x="3" y="2" width="1" height="1" fill="#0000F8"/><rect x="4" y="2" width="1" height="1" fill="#D4D4D4"/><rect x="5" y="2" width="1" height="1" fill="#0000F8"/><rect x="6" y="2" width="1" height="1" fill="#D4D4D4"/><rect x="7" y="2" width="1" height="1" fill="#0000F8"/><rect x="8" y="2" width="1" height="1" fill="#D4D4D4"/><rect x="9" y="2" width="2" height="1" fill="#0000F8"/><rect x="11" y="2" width="2" height="1" fill="#D4D4D4"/><rect x="13" y="2" width="1" height="1" fill="#0000F8"/><rect x="14" y="2" width="2" height="1" fill="#D4D4D4"/><rect x="0" y="3" width="1" height="1" fill="#D4D4D4"/><rect x="1" y="3" width="1" height="1" fill="#0000F8"/><rect x="2" y="3" width="1" height="1" fill="#D4D4D4"/><rect x="3" y="3" width="1" height="1" fill="#0000F8"/><rect x="4" y="3" width="1" height="1" fill="#D4D4D4"/><rect x="5" y="3" width="1" height="1" fill="#0000F8"/><rect x="6" y="3" width="1" height="1" fill="#D4D4D4"/><rect x="7" y="3" width="1" height="1" fill="#0000F8"/><rect x="8" y="3" width="1" height="1" fill="#D4D4D4"/><rect x="9" y="3" width="1" height="1" fill="#0000F8"/><rect x="10" y="3" width="3" height="1" fill="#D4D4D4"/><rect x="13" y="3" width="1" height="1" fill="#0000F8"/><rect x="14" y="3" width="2" height="1" fill="#D4D4D4"/><rect x="0" y="4" width="1" height="1" fill="#D4D4D4"/><rect x="1" y="4" width="1" height="1" fill="#0000F8"/><rect x="2" y="4" width="1" height="1" fill="#D4D4D4"/><rect x="3" y="4" width="1" height="1" fill="#0000F8"/><rect x="4" y="4" width="1" height="1" fill="#D4D4D4"/><rect x="5" y="4" width="1" height="1" fill="#0000F8"/><rect x="6" y="4" width="1" height="1" fill="#D4D4D4"/><rect x="7" y="4" width="1" height="1" fill="#0000F8"/><rect x="8" y="4" width="1" height="1" fill="#D4D4D4"/><rect x="9" y="4" width="2" height="1" fill="#0000F8"/><rect x="11" y="4" width="2" height="1" fill="#D4D4D4"/><rect x="13" y="4" width="1" height="1" fill="#0000F8"/><rect x="14" y="4" width="2" height="1" fill="#D4D4D4"/><rect x="0" y="5" width="1" height="1" fill="#D4D4D4"/><rect x="1" y="5" width="2" height="1" fill="#0000F8"/><rect x="3" y="5" width="3" height="1" fill="#D4D4D4"/><rect x="6" y="5" width="1" height="1" fill="#0000F8"/><rect x="7" y="5" width="2" height="1" fill="#D4D4D4"/><rect x="9" y="5" width="1" height="1" fill="#0000F8"/><rect x="10" y="5" width="1" height="1" fill="#D4D4D4"/><rect x="11" y="5" width="1" height="1" fill="#0000F8"/><rect x="12" y="5" width="1" height="1" fill="#D4D4D4"/><rect x="13" y="5" width="3" height="1" fill="#0000F8"/><rect x="0" y="6" width="16" height="1" fill="#D4D4D4"/><rect x="0" y="7" width="7" height="1" fill="#D4D4D4"/><rect x="7" y="7" width="8" height="1" fill="#000"/><rect x="15" y="7" width="1" height="1" fill="#D4D4D4"/><rect x="0" y="8" width="7" height="1" fill="#D4D4D4"/><rect x="7" y="8" width="1" height="1" fill="#000"/><rect x="8" y="8" width="6" height="1" fill="#fff"/><rect x="14" y="8" width="1" height="1" fill="#000"/><rect x="15" y="8" width="1" height="1" fill="#D4D4D4"/><rect x="0" y="9" width="3" height="1" fill="#D4D4D4"/><rect x="3" y="9" width="6" height="1" fill="#000"/><rect x="9" y="9" width="2" height="1" fill="#fff"/><rect x="11" y="9" width="1" height="1" fill="#000"/><rect x="12" y="9" width="2" height="1" fill="#fff"/><rect x="14" y="9" width="1" height="1" fill="#000"/><rect x="15" y="9" width="1" height="1" fill="#D4D4D4"/><rect x="0" y="10" width="3" height="1" fill="#D4D4D4"/><rect x="3" y="10" width="1" height="1" fill="#000"/><rect x="4" y="10" width="4" height="1" fill="#fff"/><rect x="8" y="10" width="1" height="1" fill="#000"/><rect x="9" y="10" width="5" height="1" fill="#fff"/><rect x="14" y="10" width="1" height="1" fill="#000"/><rect x="15" y="10" width="1" height="1" fill="#D4D4D4"/><rect x="0" y="11" width="8" height="1" fill="#000"/><rect x="8" y="11" width="1" height="1" fill="#fff"/><rect x="9" y="11" width="1" height="1" fill="#000"/><rect x="10" y="11" width="2" height="1" fill="#fff"/><rect x="12" y="11" width="1" height="1" fill="#000"/><rect x="13" y="11" width="1" height="1" fill="#fff"/><rect x="14" y="11" width="1" height="1" fill="#000"/><rect x="15" y="11" width="1" height="1" fill="#D4D4D4"/><rect x="0" y="12" width="7" height="1" fill="#fff"/><rect x="7" y="12" width="1" height="1" fill="#000"/><rect x="8" y="12" width="6" height="1" fill="#fff"/><rect x="14" y="12" width="1" height="1" fill="#000"/><rect x="15" y="12" width="1" height="1" fill="#D4D4D4"/><rect x="0" y="13" width="2" height="1" fill="#000"/><rect x="2" y="13" width="1" height="1" fill="#fff"/><rect x="3" y="13" width="2" height="1" fill="#000"/><rect x="5" y="13" width="1" height="1" fill="#fff"/><rect x="6" y="13" width="1" height="1" fill="#000"/><rect x="7" y="13" width="1" height="1" fill="#fff"/><rect x="8" y="13" width="1" height="1" fill="#000"/><rect x="9" y="13" width="2" height="1" fill="#fff"/><rect x="11" y="13" width="1" height="1" fill="#000"/><rect x="12" y="13" width="2" height="1" fill="#fff"/><rect x="14" y="13" width="1" height="1" fill="#000"/><rect x="15" y="13" width="1" height="1" fill="#D4D4D4"/><rect x="0" y="14" width="7" height="1" fill="#fff"/><rect x="7" y="14" width="1" height="1" fill="#000"/><rect x="8" y="14" width="6" height="1" fill="#fff"/><rect x="14" y="14" width="1" height="1" fill="#000"/><rect x="15" y="14" width="1" height="1" fill="#D4D4D4"/><rect x="0" y="15" width="2" height="1" fill="#000"/><rect x="2" y="15" width="1" height="1" fill="#fff"/><rect x="3" y="15" width="2" height="1" fill="#000"/><rect x="5" y="15" width="1" height="1" fill="#fff"/><rect x="6" y="15" width="9" height="1" fill="#000"/><rect x="15" y="15" width="1" height="1" fill="#D4D4D4"/></svg><svg style="position:absolute;left:633px;top:61px;" width="16" height="16" viewBox="0 0 16 16" shape-rendering="crispEdges"><rect x="0" y="0" width="16" height="1" fill="#D4D4D4"/><rect x="0" y="1" width="1" height="1" fill="#D4D4D4"/><rect x="1" y="1" width="2" height="1" fill="#0000F8"/><rect x="3" y="1" width="4" height="1" fill="#D4D4D4"/><rect x="7" y="1" width="1" height="1" fill="#0000F8"/><rect x="8" y="1" width="8" height="1" fill="#D4D4D4"/><rect x="0" y="2" width="1" height="1" fill="#D4D4D4"/><rect x="1" y="2" width="1" height="1" fill="#0000F8"/><rect x="2" y="2" width="1" height="1" fill="#D4D4D4"/><rect x="3" y="2" width="1" height="1" fill="#0000F8"/><rect x="4" y="2" width="3" height="1" fill="#D4D4D4"/><rect x="7" y="2" width="1" height="1" fill="#0000F8"/><rect x="8" y="2" width="8" height="1" fill="#D4D4D4"/><rect x="0" y="3" width="1" height="1" fill="#D4D4D4"/><rect x="1" y="3" width="1" height="1" fill="#0000F8"/><rect x="2" y="3" width="1" height="1" fill="#D4D4D4"/><rect x="3" y="3" width="1" height="1" fill="#0000F8"/><rect x="4" y="3" width="3" height="1" fill="#D4D4D4"/><rect x="7" y="3" width="1" height="1" fill="#0000F8"/><rect x="8" y="3" width="8" height="1" fill="#D4D4D4"/><rect x="0" y="4" width="1" height="1" fill="#D4D4D4"/><rect x="1" y="4" width="1" height="1" fill="#0000F8"/><rect x="2" y="4" width="1" height="1" fill="#D4D4D4"/><rect x="3" y="4" width="1" height="1" fill="#0000F8"/><rect x="4" y="4" width="3" height="1" fill="#D4D4D4"/><rect x="7" y="4" width="1" height="1" fill="#0000F8"/><rect x="8" y="4" width="8" height="1" fill="#D4D4D4"/><rect x="0" y="5" width="1" height="1" fill="#D4D4D4"/><rect x="1" y="5" width="2" height="1" fill="#0000F8"/><rect x="3" y="5" width="2" height="1" fill="#D4D4D4"/><rect x="5" y="5" width="1" height="1" fill="#0000F8"/><rect x="6" y="5" width="1" height="1" fill="#D4D4D4"/><rect x="7" y="5" width="3" height="1" fill="#0000F8"/><rect x="10" y="5" width="1" height="1" fill="#D4D4D4"/><rect x="11" y="5" width="1" height="1" fill="#0000F8"/><rect x="12" y="5" width="4" height="1" fill="#D4D4D4"/><rect x="0" y="6" width="16" height="1" fill="#D4D4D4"/><rect x="0" y="7" width="7" height="1" fill="#D4D4D4"/><rect x="7" y="7" width="8" height="1" fill="#000"/><rect x="15" y="7" width="1" height="1" fill="#D4D4D4"/><rect x="0" y="8" width="7" height="1" fill="#D4D4D4"/><rect x="7" y="8" width="1" height="1" fill="#000"/><rect x="8" y="8" width="6" height="1" fill="#fff"/><rect x="14" y="8" width="1" height="1" fill="#000"/><rect x="15" y="8" width="1" height="1" fill="#D4D4D4"/><rect x="0" y="9" width="3" height="1" fill="#D4D4D4"/><rect x="3" y="9" width="6" height="1" fill="#000"/><rect x="9" y="9" width="2" height="1" fill="#fff"/><rect x="11" y="9" width="1" height="1" fill="#000"/><rect x="12" y="9" width="2" height="1" fill="#fff"/><rect x="14" y="9" width="1" height="1" fill="#000"/><rect x="15" y="9" width="1" height="1" fill="#D4D4D4"/><rect x="0" y="10" width="3" height="1" fill="#D4D4D4"/><rect x="3" y="10" width="1" height="1" fill="#000"/><rect x="4" y="10" width="4" height="1" fill="#fff"/><rect x="8" y="10" width="1" height="1" fill="#000"/><rect x="9" y="10" width="5" height="1" fill="#fff"/><rect x="14" y="10" width="1" height="1" fill="#000"/><rect x="15" y="10" width="1" height="1" fill="#D4D4D4"/><rect x="0" y="11" width="8" height="1" fill="#000"/><rect x="8" y="11" width="1" height="1" fill="#fff"/><rect x="9" y="11" width="1" height="1" fill="#000"/><rect x="10" y="11" width="2" height="1" fill="#fff"/><rect x="12" y="11" width="1" height="1" fill="#000"/><rect x="13" y="11" width="1" height="1" fill="#fff"/><rect x="14" y="11" width="1" height="1" fill="#000"/><rect x="15" y="11" width="1" height="1" fill="#D4D4D4"/><rect x="0" y="12" width="7" height="1" fill="#fff"/><rect x="7" y="12" width="1" height="1" fill="#000"/><rect x="8" y="12" width="6" height="1" fill="#fff"/><rect x="14" y="12" width="1" height="1" fill="#000"/><rect x="15" y="12" width="1" height="1" fill="#D4D4D4"/><rect x="0" y="13" width="2" height="1" fill="#000"/><rect x="2" y="13" width="1" height="1" fill="#fff"/><rect x="3" y="13" width="2" height="1" fill="#000"/><rect x="5" y="13" width="1" height="1" fill="#fff"/><rect x="6" y="13" width="1" height="1" fill="#000"/><rect x="7" y="13" width="1" height="1" fill="#fff"/><rect x="8" y="13" width="1" height="1" fill="#000"/><rect x="9" y="13" width="2" height="1" fill="#fff"/><rect x="11" y="13" width="1" height="1" fill="#000"/><rect x="12" y="13" width="2" height="1" fill="#fff"/><rect x="14" y="13" width="1" height="1" fill="#000"/><rect x="15" y="13" width="1" height="1" fill="#D4D4D4"/><rect x="0" y="14" width="7" height="1" fill="#fff"/><rect x="7" y="14" width="1" height="1" fill="#000"/><rect x="8" y="14" width="6" height="1" fill="#fff"/><rect x="14" y="14" width="1" height="1" fill="#000"/><rect x="15" y="14" width="1" height="1" fill="#D4D4D4"/><rect x="0" y="15" width="2" height="1" fill="#000"/><rect x="2" y="15" width="1" height="1" fill="#fff"/><rect x="3" y="15" width="2" height="1" fill="#000"/><rect x="5" y="15" width="1" height="1" fill="#fff"/><rect x="6" y="15" width="9" height="1" fill="#000"/><rect x="15" y="15" width="1" height="1" fill="#D4D4D4"/></svg><svg style="position:absolute;left:656px;top:61px;shape-rendering:auto" width="16" height="16" viewBox="0 0 16 16" shape-rendering="crispEdges"><rect x="0.5" y="0.5" width="11" height="9" fill="#fff" stroke="#606060"/><rect x="1" y="1" width="10" height="2" fill="#C0C0C0"/><rect x="1" y="5" width="10" height="1" fill="#808080"/><path d="M8 3 H13 V1 L16 4 L13 7 V5 H8Z" fill="#F00"/><rect x="1" y="9" width="10" height="6" fill="#007000"/><circle cx="10" cy="12" r="3" fill="#F0E000" stroke="#000" stroke-width="0.7"/><circle cx="13" cy="12" r="3" fill="#F0E000" stroke="#000" stroke-width="0.7"/></svg><svg style="position:absolute;left:679px;top:61px;shape-rendering:auto" width="16" height="16" viewBox="0 0 16 16" shape-rendering="crispEdges"><path d="M0.5 0.5 H8 L11.5 4 V15.5 H0.5 Z" fill="#fff" stroke="#000"/><rect x="2" y="5" width="6" height="1" fill="#000"/><rect x="2" y="8" width="6" height="1" fill="#000"/><rect x="2" y="11" width="5" height="1" fill="#000"/><path d="M8 14 L15 7" stroke="#800000" stroke-width="1.8"/></svg><svg style="position:absolute;left:702px;top:61px;shape-rendering:auto" width="16" height="16" viewBox="0 0 16 16" shape-rendering="crispEdges"><text x="0" y="6" font-size="6.5" font-weight="bold" font-family="Liberation Mono" textLength="16">TVPY</text><path d="M1.5 6.5 H9 L11.5 9 V15.5 H1.5 Z" fill="#fff" stroke="#000"/><rect x="3" y="9" width="5" height="1" fill="#000"/><rect x="3" y="12" width="5" height="1" fill="#000"/><path d="M8 15 L16 7" stroke="#800000" stroke-width="1.8"/></svg><svg style="position:absolute;left:725px;top:61px;" width="16" height="16" viewBox="0 0 16 16" shape-rendering="crispEdges"><rect x="0" y="15" width="16" height="1" fill="#800000"/><rect x="0" y="1" width="1" height="15" fill="#800000"/><rect x="3.5" y="0.5" width="8" height="10" fill="#fff" stroke="#000"/><circle cx="7.5" cy="5" r="2" fill="none" stroke="#2040C0"/><rect x="1" y="11" width="4" height="4" fill="#F00"/><rect x="6" y="8" width="4" height="7" fill="#00E000"/><rect x="12" y="3" width="3" height="12" fill="#0000F0"/></svg><svg style="position:absolute;left:748px;top:61px;" width="16" height="16" viewBox="0 0 16 16" shape-rendering="crispEdges"><rect x="0" y="15" width="16" height="1" fill="#800000"/><rect x="0" y="1" width="1" height="15" fill="#800000"/><circle cx="7" cy="6" r="5" fill="#fff" stroke="#000"/><circle cx="7" cy="6" r="3" fill="none" stroke="#2050E0" stroke-width="1.5"/><rect x="1" y="11" width="4" height="4" fill="#F00"/><rect x="6" y="8" width="4" height="7" fill="#00E000"/><rect x="12" y="3" width="3" height="12" fill="#0000F0"/></svg><svg style="position:absolute;left:771px;top:61px;" width="16" height="16" viewBox="0 0 16 16" shape-rendering="crispEdges"><rect x="0" y="15" width="16" height="1" fill="#800000"/><rect x="0" y="1" width="1" height="15" fill="#800000"/><path d="M2 6 Q2 1 8 1 Q14 1 14 6" fill="#fff" stroke="#000"/><rect x="3.5" y="4.5" width="9" height="8" fill="#fff" stroke="#000"/><rect x="1" y="11" width="4" height="4" fill="#F00"/><rect x="6" y="8" width="4" height="7" fill="#00E000"/><rect x="12" y="3" width="3" height="12" fill="#0000F0"/></svg><svg style="position:absolute;left:794px;top:61px;" width="16" height="16" viewBox="0 0 16 16" shape-rendering="crispEdges"><rect x="0" y="15" width="16" height="1" fill="#800000"/><rect x="0" y="1" width="1" height="15" fill="#800000"/><path d="M3 6 L7 1 L12 6Z" fill="#F0E040" stroke="#806000"/><rect x="4" y="6" width="7" height="6" fill="#F0C090"/><rect x="1" y="11" width="4" height="4" fill="#F00"/><rect x="6" y="8" width="4" height="7" fill="#00E000"/><rect x="12" y="3" width="3" height="12" fill="#0000F0"/></svg><svg style="position:absolute;left:817px;top:61px;" width="16" height="16" viewBox="0 0 16 16" shape-rendering="crispEdges"><rect x="0" y="6" width="16" height="9" fill="#008080"/><rect x="2.5" y="0.5" width="7" height="14" fill="#fff" stroke="#000"/><rect x="4" y="3" width="4" height="1" fill="#000"/><rect x="4" y="6" width="4" height="1" fill="#000"/><rect x="4" y="9" width="4" height="1" fill="#000"/><rect x="10" y="8" width="5" height="5" fill="#00C0A0"/><rect x="1" y="0" width="4" height="2" fill="#008060"/></svg><svg style="position:absolute;left:840px;top:61px;" width="16" height="16" viewBox="0 0 16 16" shape-rendering="crispEdges"><rect x="0" y="9" width="16" height="6" fill="#008080"/><rect x="6.5" y="0.5" width="9" height="9" fill="#fff" stroke="#000"/><path d="M9 2 H13 L11 5 L13 8 H9" stroke="#F00" fill="none"/><rect x="0" y="4" width="4" height="3" fill="#008080"/><rect x="1" y="6" width="2" height="4" fill="#800000"/><rect x="2" y="11" width="8" height="2" fill="#40C0C0"/></svg><svg style="position:absolute;left:863px;top:61px;shape-rendering:auto" width="16" height="16" viewBox="0 0 16 16" shape-rendering="crispEdges"><path d="M0.5 0.5 H8 L11.5 4 V15.5 H0.5 Z" fill="#fff" stroke="#000"/><rect x="2" y="5" width="5" height="1" fill="#000"/><rect x="2" y="8" width="4" height="1" fill="#000"/><circle cx="11" cy="11" r="4.5" fill="#fff" stroke="#000"/><circle cx="11" cy="11" r="2.8" fill="none" stroke="#2050E0" stroke-width="1.5" stroke-dasharray="2.5 1.5"/></svg><svg style="position:absolute;left:886px;top:61px;shape-rendering:auto" width="16" height="16" viewBox="0 0 16 16" shape-rendering="crispEdges"><text x="5" y="6" font-size="6.5" font-weight="bold" font-family="Liberation Mono" textLength="11">TYP</text><rect x="6.5" y="5.5" width="9" height="7" fill="#fff" stroke="#000"/><rect x="8" y="8" width="6" height="1" fill="#000"/><circle cx="4" cy="6" r="3" fill="#1020C0"/><path d="M0 16 Q0 9 4 9 Q8 9 8 16Z" fill="#1020C0"/></svg><svg style="position:absolute;left:909px;top:61px;" width="16" height="16" viewBox="0 0 16 16" shape-rendering="crispEdges"><rect x="0" y="0" width="9" height="1" fill="#000"/><rect x="0" y="1" width="1" height="1" fill="#000"/><rect x="1" y="1" width="7" height="1" fill="#00E8F0"/><rect x="8" y="1" width="1" height="1" fill="#000"/><rect x="0" y="2" width="1" height="1" fill="#000"/><rect x="1" y="2" width="4" height="1" fill="#00E8F0"/><rect x="5" y="2" width="2" height="1" fill="#00A0A0"/><rect x="7" y="2" width="1" height="1" fill="#00E8F0"/><rect x="8" y="2" width="1" height="1" fill="#000"/><rect x="10" y="2" width="6" height="1" fill="#000"/><rect x="0" y="3" width="1" height="1" fill="#000"/><rect x="1" y="3" width="4" height="1" fill="#00E8F0"/><rect x="5" y="3" width="3" height="1" fill="#00A0A0"/><rect x="8" y="3" width="1" height="1" fill="#000"/><rect x="10" y="3" width="1" height="1" fill="#000"/><rect x="11" y="3" width="4" height="1" fill="#fff"/><rect x="15" y="3" width="1" height="1" fill="#000"/><rect x="0" y="4" width="1" height="1" fill="#000"/><rect x="1" y="4" width="2" height="1" fill="#00E8F0"/><rect x="3" y="4" width="3" height="1" fill="#00D800"/><rect x="6" y="4" width="2" height="1" fill="#00A0A0"/><rect x="8" y="4" width="1" height="1" fill="#000"/><rect x="10" y="4" width="1" height="1" fill="#000"/><rect x="11" y="4" width="1" height="1" fill="#fff"/><rect x="12" y="4" width="2" height="1" fill="#000"/><rect x="14" y="4" width="1" height="1" fill="#fff"/><rect x="15" y="4" width="1" height="1" fill="#000"/><rect x="0" y="5" width="1" height="1" fill="#000"/><rect x="1" y="5" width="1" height="1" fill="#00E8F0"/><rect x="2" y="5" width="6" height="1" fill="#00D800"/><rect x="8" y="5" width="1" height="1" fill="#000"/><rect x="10" y="5" width="1" height="1" fill="#000"/><rect x="11" y="5" width="4" height="1" fill="#fff"/><rect x="15" y="5" width="1" height="1" fill="#000"/><rect x="0" y="6" width="1" height="1" fill="#000"/><rect x="1" y="6" width="4" height="1" fill="#00D800"/><rect x="5" y="6" width="6" height="1" fill="#000"/><rect x="11" y="6" width="1" height="1" fill="#fff"/><rect x="12" y="6" width="2" height="1" fill="#000"/><rect x="14" y="6" width="1" height="1" fill="#fff"/><rect x="15" y="6" width="1" height="1" fill="#000"/><rect x="0" y="7" width="1" height="1" fill="#000"/><rect x="1" y="7" width="3" height="1" fill="#00D800"/><rect x="4" y="7" width="1" height="1" fill="#000"/><rect x="5" y="7" width="2" height="1" fill="#fff"/><rect x="7" y="7" width="1" height="1" fill="#00D800"/><rect x="8" y="7" width="1" height="1" fill="#fff"/><rect x="9" y="7" width="1" height="1" fill="#0030F0"/><rect x="10" y="7" width="1" height="1" fill="#fff"/><rect x="11" y="7" width="1" height="1" fill="#000"/><rect x="12" y="7" width="3" height="1" fill="#fff"/><rect x="15" y="7" width="1" height="1" fill="#000"/><rect x="0" y="8" width="1" height="1" fill="#000"/><rect x="1" y="8" width="2" height="1" fill="#00D800"/><rect x="3" y="8" width="1" height="1" fill="#000"/><rect x="4" y="8" width="1" height="1" fill="#fff"/><rect x="5" y="8" width="2" height="1" fill="#00D800"/><rect x="7" y="8" width="1" height="1" fill="#fff"/><rect x="8" y="8" width="2" height="1" fill="#0030F0"/><rect x="10" y="8" width="1" height="1" fill="#fff"/><rect x="11" y="8" width="3" height="1" fill="#000"/><rect x="14" y="8" width="1" height="1" fill="#fff"/><rect x="15" y="8" width="1" height="1" fill="#000"/><rect x="0" y="9" width="3" height="1" fill="#000"/><rect x="3" y="9" width="1" height="1" fill="#fff"/><rect x="4" y="9" width="2" height="1" fill="#00D800"/><rect x="6" y="9" width="3" height="1" fill="#fff"/><rect x="9" y="9" width="2" height="1" fill="#0030F0"/><rect x="11" y="9" width="1" height="1" fill="#fff"/><rect x="12" y="9" width="1" height="1" fill="#000"/><rect x="13" y="9" width="2" height="1" fill="#fff"/><rect x="15" y="9" width="1" height="1" fill="#000"/><rect x="2" y="10" width="1" height="1" fill="#000"/><rect x="3" y="10" width="2" height="1" fill="#fff"/><rect x="5" y="10" width="1" height="1" fill="#00D800"/><rect x="6" y="10" width="1" height="1" fill="#fff"/><rect x="7" y="10" width="1" height="1" fill="#000"/><rect x="8" y="10" width="4" height="1" fill="#fff"/><rect x="12" y="10" width="1" height="1" fill="#000"/><rect x="13" y="10" width="2" height="1" fill="#fff"/><rect x="15" y="10" width="1" height="1" fill="#000"/><rect x="2" y="11" width="1" height="1" fill="#000"/><rect x="3" y="11" width="3" height="1" fill="#fff"/><rect x="6" y="11" width="3" height="1" fill="#000"/><rect x="9" y="11" width="3" height="1" fill="#fff"/><rect x="12" y="11" width="4" height="1" fill="#000"/><rect x="2" y="12" width="1" height="1" fill="#000"/><rect x="3" y="12" width="1" height="1" fill="#fff"/><rect x="4" y="12" width="1" height="1" fill="#0030F0"/><rect x="5" y="12" width="2" height="1" fill="#fff"/><rect x="7" y="12" width="1" height="1" fill="#000"/><rect x="8" y="12" width="2" height="1" fill="#fff"/><rect x="10" y="12" width="1" height="1" fill="#00D800"/><rect x="11" y="12" width="1" height="1" fill="#fff"/><rect x="12" y="12" width="1" height="1" fill="#000"/><rect x="2" y="13" width="1" height="1" fill="#000"/><rect x="3" y="13" width="1" height="1" fill="#fff"/><rect x="4" y="13" width="2" height="1" fill="#0030F0"/><rect x="6" y="13" width="3" height="1" fill="#fff"/><rect x="9" y="13" width="2" height="1" fill="#00D800"/><rect x="11" y="13" width="1" height="1" fill="#fff"/><rect x="12" y="13" width="1" height="1" fill="#000"/><rect x="3" y="14" width="1" height="1" fill="#000"/><rect x="4" y="14" width="1" height="1" fill="#fff"/><rect x="5" y="14" width="1" height="1" fill="#0030F0"/><rect x="6" y="14" width="3" height="1" fill="#fff"/><rect x="9" y="14" width="1" height="1" fill="#00D800"/><rect x="10" y="14" width="1" height="1" fill="#fff"/><rect x="11" y="14" width="1" height="1" fill="#000"/><rect x="4" y="15" width="7" height="1" fill="#000"/></svg><svg style="position:absolute;left:933px;top:61px;shape-rendering:auto" width="16" height="16" viewBox="0 0 16 16" shape-rendering="crispEdges"><text x="1" y="7" font-size="7" font-weight="bold" font-family="Liberation Mono" textLength="13">VYR</text><text x="0" y="15" font-size="7" font-weight="bold" font-family="Liberation Mono" textLength="16">OBCI</text></svg><svg style="position:absolute;left:955px;top:61px;" width="16" height="16" viewBox="0 0 16 16" shape-rendering="crispEdges"><text x="0" y="7" font-size="7" font-weight="bold" font-family="Liberation Mono" textLength="7">FI</text><rect x="1.5" y="8.5" width="4" height="2" fill="#fff" stroke="#000"/><rect x="5" y="9" width="3" height="1" fill="#000"/><rect x="8" y="2" width="1" height="13" fill="#000"/><rect x="10.5" y="1.5" width="5" height="2" fill="#F0E000" stroke="#000"/><rect x="10.5" y="5.5" width="5" height="2" fill="#00D0D0" stroke="#000"/><rect x="10.5" y="9.5" width="5" height="2" fill="#00C000" stroke="#000"/><rect x="10.5" y="13.5" width="5" height="2" fill="#F00000" stroke="#000"/><rect x="8" y="2" width="3" height="1" fill="#000"/><rect x="8" y="6" width="3" height="1" fill="#000"/><rect x="8" y="10" width="3" height="1" fill="#000"/><rect x="8" y="14" width="3" height="1" fill="#000"/></svg><svg style="position:absolute;left:977px;top:61px;" width="4" height="16" viewBox="0 0 4 16" shape-rendering="crispEdges"><rect x="0" y="1" width="1" height="6" fill="#000"/><rect x="0" y="1" width="3" height="1" fill="#000"/><rect x="2" y="1" width="1" height="3" fill="#000"/><rect x="0" y="4" width="3" height="1" fill="#000"/><rect x="0" y="10" width="3" height="3" fill="#000"/></svg><svg style="position:absolute;left:985px;top:65px;shape-rendering:auto" width="5" height="9" viewBox="0 0 5 9" shape-rendering="crispEdges"><path d="M0 0 L5 4.5 L0 9Z" fill="#000"/></svg><svg style="position:absolute;left:984px;top:784px;shape-rendering:auto" width="14" height="14" viewBox="0 0 14 14" shape-rendering="crispEdges"><path d="M13 2 L2 13 M13 6 L6 13 M13 10 L10 13" stroke="#A8A498" stroke-width="1.2"/><path d="M14 3 L3 14 M14 7 L7 14 M14 11 L11 14" stroke="#fff" stroke-width="1"/></svg></body></html>
